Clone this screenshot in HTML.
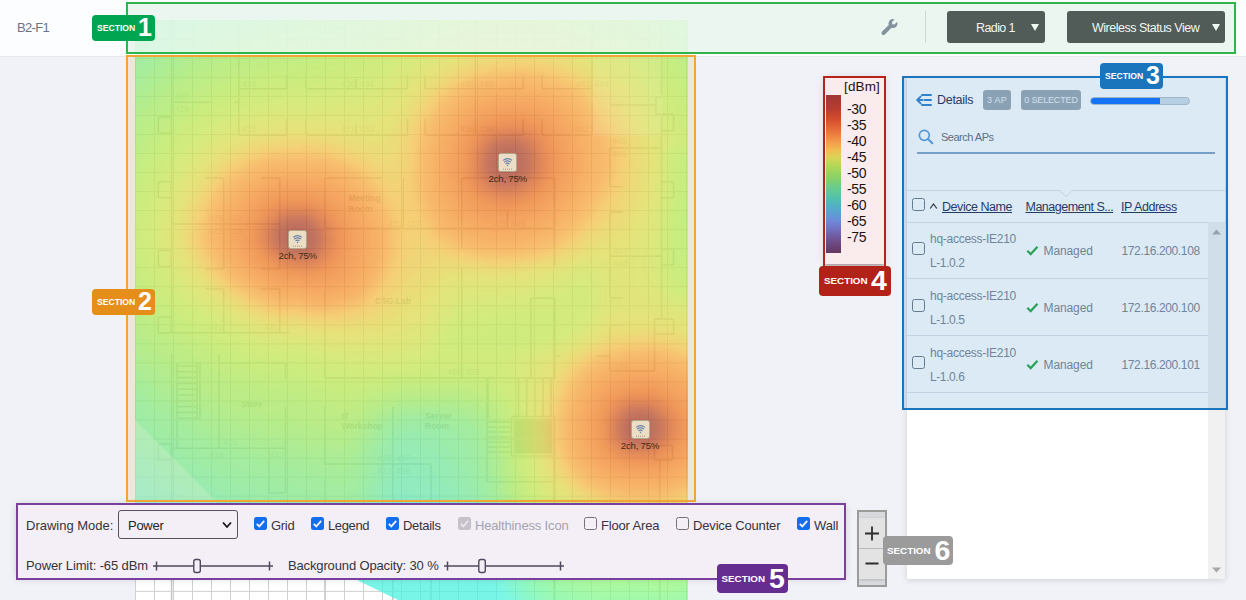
<!DOCTYPE html>
<html lang="en"><head><meta charset="utf-8"><title>Wireless Status View</title>
<style>
*{box-sizing:border-box;margin:0;padding:0}
html,body{width:1246px;height:600px;overflow:hidden}
body{background:#f0f2f7;font-family:"Liberation Sans",sans-serif;position:relative;color:#333}
.abs{position:absolute}
#canvas{position:absolute;left:135px;top:20px;width:553px;height:580px;background:#fff;overflow:hidden}
#hdr{position:absolute;left:0;top:0;width:1246px;height:57px;background:rgba(255,255,255,.80);border-bottom:1px solid #e4e7ed}
.btn{position:absolute;top:11px;height:32px;background:#55575a;border-radius:3px;color:#fff;font-size:12.5px;line-height:34px;white-space:nowrap}
.tri{position:absolute;width:0;height:0;border-left:4.3px solid transparent;border-right:4.3px solid transparent;border-top:7.5px solid #fff;top:13px}
.box{position:absolute;border:2px solid}
.badge{position:absolute;border-radius:4px;color:#fff;font-weight:bold;white-space:nowrap;font-family:"Liberation Sans",sans-serif}
.badge .s{position:absolute;left:5px;font-size:8.6px;letter-spacing:0}
.badge .n{position:absolute;font-size:25px}
.ctl{position:absolute;left:17px;top:505px;width:828px;height:73px;background:#fff;box-shadow:0 0 8px rgba(0,0,0,.18)}
.lbl{position:absolute;font-size:13px;color:#333;white-space:nowrap}
.cb{position:absolute;width:13px;height:13px;border-radius:2.5px}
.cb.on{background:#0b74f5}
.cb.off{background:#fff;border:1px solid #767676}
.cb.dis{background:#c9c9c9}
.ap{position:absolute;width:19px;height:19px}
.ap span{position:absolute;left:-11px;top:19.6px;width:41px;text-align:center;font-size:9.7px;color:#2a1c14;white-space:nowrap;letter-spacing:-.25px}
.row{position:absolute;left:907px;width:301px;height:57px;border-bottom:1px solid #dfe3e8}
.gr{color:#7a8491;font-size:12px;white-space:nowrap;position:absolute}
.hd{color:#1d2b4f;font-size:12.5px;white-space:nowrap;position:absolute;text-decoration:underline}
</style></head><body>

<div id="canvas">
<svg class="abs" style="left:0;top:0" width="553" height="580" viewBox="0 0 553 580"><defs><filter id="bl" x="-5%" y="-5%" width="110%" height="110%"><feGaussianBlur stdDeviation="3"/></filter><clipPath id="cut"><path d="M0 0H553V580H263 L222 560 L0 560Z"/></clipPath></defs><path d="M36.6 82.2H77.0M99.0 82.2H103.8M23.3 97.0H36.3M23.3 113.0H36.3M23.3 161.7H36.3M23.3 177.7H36.3M23.3 230.5H36.3M23.3 246.5H36.3M23.3 297.0H36.3M23.3 313.0H36.3M23.3 424.0H36.3M23.3 440.0H36.3M23.3 520.0H36.3M23.3 536.0H36.3M103.8 68.7H151.7M103.8 115.3H151.7M171.0 68.7H272.5M171.0 115.3H272.5M290.0 68.7H388.0M290.0 115.3H388.0M407.0 68.7H457.0M407.0 115.3H457.0M36.6 204.0H144.7M70.0 158.0H88.7M70.0 249.0H88.7M70.0 269.0H88.7M126.0 158.0H144.7M126.0 249.0H144.7M126.0 269.0H144.7M23.0 312.7H154.0M190.0 158.0H247.0M190.0 208.3H419.7M190.0 358.0H419.7M42.0 346.0H62.0M42.0 351.8H62.0M42.0 357.6H62.0M42.0 363.4H62.0M42.0 369.2H62.0M42.0 375.0H62.0M42.0 380.8H62.0M42.0 386.6H62.0M42.0 392.4H62.0M42.0 398.2H62.0M82.8 342.8H150.5M36.6 428.3H150.5M134.0 473.0H150.5M190.0 444.0H296.0M326.8 158.0H419.7M396.0 278.0H419.7M396.0 358.0H419.7M352.0 461.7H419.7M376.5 396.5H419.7M376.5 436.0H419.7M353.0 402.0H376.0M353.0 407.0H376.0M353.0 412.0H376.0M353.0 417.0H376.0M353.0 422.0H376.0M353.0 427.0H376.0M353.0 432.0H376.0M475.6 85.0H521.0M521.0 77.0H526.5M521.0 94.3H538.6M526.5 110.7H538.6M474.5 128.0H526.5M474.8 166.7H488.0M475.0 192.0H488.0M475.0 278.0H488.0M475.0 236.3H526.5M526.5 161.7H538.6M526.5 177.7H538.6M526.5 229.0H538.6M526.5 245.0H538.6M475.0 305.0H488.0M475.0 351.0H518.8M419.7 336.0H425.5M461.6 336.0H475.0M519.5 299.0H538.7M519.5 314.3H538.7M519.5 425.5H537.5M519.5 440.0H537.5M36.6 0.0V313.0M36.6 334.0V580.0M23.3 97.0V113.0M36.3 97.0V113.0M23.3 161.7V177.7M36.3 161.7V177.7M23.3 230.5V246.5M36.3 230.5V246.5M23.3 297.0V313.0M36.3 297.0V313.0M23.3 424.0V440.0M36.3 424.0V440.0M23.3 520.0V536.0M36.3 520.0V536.0M103.8 0.0V115.3M151.7 54.7V68.7M151.7 99.0V115.3M171.0 54.7V68.7M171.0 99.0V115.3M272.5 54.7V68.7M272.5 99.0V115.3M290.0 54.7V68.7M290.0 99.0V115.3M388.0 54.7V68.7M388.0 99.0V115.3M407.0 54.7V68.7M407.0 99.0V115.3M221.2 59.0V68.7M221.2 105.0V115.3M340.3 0.0V115.3M457.0 0.0V115.3M88.7 158.0V249.0M88.7 269.0V313.0M144.7 158.0V249.0M144.7 269.0V313.0M190.0 158.0V208.3M268.3 158.0V208.3M190.0 270.0V358.0M42.0 342.0V428.0M62.0 342.0V399.5M65.0 342.0V399.5M84.0 334.0V428.3M150.5 342.8V358.7M150.5 387.0V473.0M134.0 428.3V473.0M190.0 387.0V445.0M190.0 461.0V580.0M257.8 387.0V580.0M296.0 445.0V580.0M326.8 158.0V228.0M419.7 158.0V245.7M372.5 191.0V208.3M326.8 248.0V358.0M396.0 278.0V358.0M419.7 278.0V358.0M353.0 358.0V398.0M383.5 358.0V398.0M391.7 358.0V398.0M399.8 358.0V398.0M408.0 358.0V398.0M416.0 358.0V398.0M352.0 358.0V461.7M419.7 396.0V580.0M376.5 396.5V436.0M419.7 396.5V436.0M526.5 0.0V74.5M521.0 77.0V96.5M538.6 94.3V110.7M526.5 96.5V299.0M474.8 128.0V166.7M475.0 192.0V278.0M526.5 161.7V177.7M538.6 161.7V177.7M526.5 229.0V245.0M538.6 229.0V245.0M475.0 305.0V351.0M519.5 299.0V314.3M538.7 299.0V314.3M519.5 314.3V351.0M519.5 425.5V440.0M537.5 425.5V440.0M524.7 440.0V580.0" fill="none" stroke="#c6c6c6" stroke-width="1.6"/><rect x="378.8" y="398.7" width="38.5" height="35.0" fill="#c2c2c2"/><g font-family="Liberation Sans,sans-serif" font-size="8.5" fill="#d8d8d8"><text x="40.0" y="79.0">427</text><text x="40.0" y="92.0">426</text><text x="107.3" y="67.0">429</text><text x="107.3" y="112.0">428</text><text x="206.5" y="67.0">430</text><text x="225.0" y="67.0">434</text><text x="205.6" y="112.0">431</text><text x="225.0" y="112.0">433</text><text x="325.0" y="67.0">435</text><text x="344.0" y="67.0">440</text><text x="325.0" y="112.0">436</text><text x="344.0" y="112.0">439</text><text x="441.0" y="67.0">441</text><text x="459.3" y="67.0">444</text><text x="439.5" y="112.0">442</text><text x="477.0" y="124.0">445</text><text x="477.0" y="137.0">446</text><text x="73.5" y="201.0">425</text><text x="92.5" y="201.0">424</text><text x="73.5" y="214.0">422</text><text x="92.5" y="214.0">423</text><text x="253.0" y="207.0">432</text><text x="271.0" y="207.0">437</text><text x="359.0" y="207.0">438</text><text x="375.8" y="207.0">443</text><text x="478.5" y="234.0">447</text><text x="478.5" y="246.0">448</text><text x="478.5" y="350.0">449</text><text x="73.5" y="310.0">421</text><text x="128.8" y="310.0">420</text><text x="88.0" y="425.0">415</text><text x="74.0" y="438.0">414</text><text x="135.0" y="438.0">413</text><text x="242.6" y="441.0">416</text><text x="261.0" y="441.0">417</text><text x="242.6" y="454.0">412</text><text x="261.0" y="454.0">456</text><text x="312.3" y="355.0">450</text><text x="331.0" y="355.0">455</text><text x="213.5" y="181.0" font-weight="bold" fill="#b8b8b8">Meeting</text><text x="213.5" y="191.5" font-weight="bold" fill="#b8b8b8">Room</text><text x="240.0" y="284.0" font-weight="bold" fill="#b8b8b8">CSG Lab</text><text x="106.0" y="387.0" font-weight="bold" fill="#b8b8b8">Store</text><text x="206.5" y="399.0" font-weight="bold" fill="#b8b8b8">IT</text><text x="206.5" y="408.5" font-weight="bold" fill="#b8b8b8">Workshop</text><text x="290.0" y="399.0" font-weight="bold" fill="#b8b8b8">Server</text><text x="290.0" y="408.5" font-weight="bold" fill="#b8b8b8">Room</text></g><path d="M0.50 0V580M19.50 0V580M38.50 0V580M57.50 0V580M76.50 0V580M95.50 0V580M114.50 0V580M133.50 0V580M152.50 0V580M171.50 0V580M190.50 0V580M209.50 0V580M228.50 0V580M247.50 0V580M266.50 0V580M285.50 0V580M304.50 0V580M323.50 0V580M342.50 0V580M361.50 0V580M380.50 0V580M399.50 0V580M418.50 0V580M437.50 0V580M456.50 0V580M475.50 0V580M494.50 0V580M513.50 0V580M532.50 0V580M551.50 0V580M0 0.20H553M0 19.24H553M0 38.28H553M0 57.32H553M0 76.36H553M0 95.40H553M0 114.44H553M0 133.48H553M0 152.52H553M0 171.56H553M0 190.60H553M0 209.64H553M0 228.68H553M0 247.72H553M0 266.76H553M0 285.80H553M0 304.84H553M0 323.88H553M0 342.92H553M0 361.96H553M0 381.00H553M0 400.04H553M0 419.08H553M0 438.12H553M0 457.16H553M0 476.20H553M0 495.24H553M0 514.28H553M0 533.32H553M0 552.36H553M0 571.40H553" fill="none" stroke="#d0d0d0" stroke-width="1"/><g clip-path="url(#cut)" opacity="0.75"><g filter="url(#bl)" shape-rendering="crispEdges"><path fill="#4ef2e1" d="M-16 496h4v4h-4zM-16 500h12v4h-12zM264 500h12v4h-12zM-16 504h20v4h-20zM260 504h24v4h-24zM-16 508h28v4h-28zM256 508h36v4h-36zM-16 512h40v4h-40zM252 512h48v4h-48zM-16 516h48v4h-48zM248 516h56v4h-56zM-16 520h60v4h-60zM248 520h64v4h-64zM-16 524h72v4h-72zM244 524h76v4h-76zM-16 528h84v4h-84zM244 528h84v4h-84zM-16 532h96v4h-96zM240 532h96v4h-96zM-16 536h112v4h-112zM236 536h104v4h-104zM-16 540h124v4h-124zM236 540h108v4h-108zM-16 544h140v4h-140zM232 544h116v4h-116zM-16 548h156v4h-156zM228 548h124v4h-124zM-16 552h172v4h-172zM228 552h128v4h-128zM-16 556h188v4h-188zM224 556h132v4h-132zM-16 560h200v4h-200zM220 560h140v4h-140zM-16 564h212v4h-212zM216 564h144v4h-144zM-16 568h380v4h-380zM-16 572h380v4h-380zM-16 576h384v4h-384zM-16 580h384v4h-384zM-16 584h388v4h-388zM-16 588h388v4h-388zM-16 592h392v4h-392z"/>
<path fill="#52f3da" d="M-16 484h8v4h-8zM-16 488h12v4h-12zM264 488h16v4h-16zM-16 492h20v4h-20zM260 492h24v4h-24zM-12 496h24v4h-24zM256 496h36v4h-36zM-4 500h24v4h-24zM252 500h12v4h-12zM276 500h24v4h-24zM4 504h24v4h-24zM252 504h8v4h-8zM284 504h20v4h-20zM12 508h28v4h-28zM248 508h8v4h-8zM292 508h20v4h-20zM24 512h24v4h-24zM244 512h8v4h-8zM300 512h16v4h-16zM32 516h28v4h-28zM244 516h4v4h-4zM304 516h20v4h-20zM44 520h28v4h-28zM240 520h8v4h-8zM312 520h20v4h-20zM56 524h28v4h-28zM240 524h4v4h-4zM320 524h16v4h-16zM68 528h32v4h-32zM236 528h8v4h-8zM328 528h12v4h-12zM80 532h32v4h-32zM232 532h8v4h-8zM336 532h8v4h-8zM96 536h32v4h-32zM232 536h4v4h-4zM340 536h8v4h-8zM108 540h36v4h-36zM228 540h8v4h-8zM344 540h8v4h-8zM124 544h40v4h-40zM224 544h8v4h-8zM348 544h8v4h-8zM140 548h36v4h-36zM220 548h8v4h-8zM352 548h4v4h-4zM156 552h36v4h-36zM216 552h12v4h-12zM356 552h4v4h-4zM172 556h52v4h-52zM356 556h8v4h-8zM184 560h36v4h-36zM360 560h4v4h-4zM196 564h20v4h-20zM360 564h8v4h-8zM364 568h4v4h-4zM364 572h8v4h-8zM368 576h4v4h-4zM368 580h8v4h-8zM372 584h4v4h-4zM372 588h8v4h-8zM376 592h4v4h-4z"/>
<path fill="#56f4d3" d="M-16 464h4v4h-4zM-16 468h8v4h-8zM-16 472h12v4h-12zM264 472h16v4h-16zM-16 476h20v4h-20zM260 476h24v4h-24zM-16 480h24v4h-24zM260 480h32v4h-32zM-8 484h20v4h-20zM256 484h40v4h-40zM-4 488h24v4h-24zM252 488h12v4h-12zM280 488h20v4h-20zM4 492h24v4h-24zM252 492h8v4h-8zM284 492h24v4h-24zM12 496h24v4h-24zM248 496h8v4h-8zM292 496h20v4h-20zM20 500h24v4h-24zM244 500h8v4h-8zM300 500h16v4h-16zM28 504h28v4h-28zM244 504h8v4h-8zM304 504h16v4h-16zM40 508h24v4h-24zM240 508h8v4h-8zM312 508h16v4h-16zM48 512h28v4h-28zM240 512h4v4h-4zM316 512h16v4h-16zM60 516h28v4h-28zM236 516h8v4h-8zM324 516h12v4h-12zM72 520h32v4h-32zM236 520h4v4h-4zM332 520h8v4h-8zM84 524h36v4h-36zM232 524h8v4h-8zM336 524h8v4h-8zM100 528h36v4h-36zM228 528h8v4h-8zM340 528h8v4h-8zM112 532h40v4h-40zM224 532h8v4h-8zM344 532h8v4h-8zM128 536h40v4h-40zM224 536h8v4h-8zM348 536h8v4h-8zM144 540h40v4h-40zM220 540h8v4h-8zM352 540h4v4h-4zM164 544h36v4h-36zM212 544h12v4h-12zM356 544h4v4h-4zM176 548h44v4h-44zM356 548h8v4h-8zM192 552h24v4h-24zM360 552h4v4h-4zM364 556h4v4h-4zM364 560h8v4h-8zM368 564h4v4h-4zM368 568h8v4h-8zM372 572h4v4h-4zM372 576h8v4h-8zM376 580h4v4h-4zM376 584h4v4h-4zM380 588h4v4h-4zM380 592h4v4h-4z"/>
<path fill="#5bf5cb" d="M-16 448h4v4h-4zM-16 452h8v4h-8zM268 452h8v4h-8zM-16 456h12v4h-12zM264 456h20v4h-20zM-16 460h20v4h-20zM260 460h28v4h-28zM-12 464h20v4h-20zM256 464h40v4h-40zM-8 468h20v4h-20zM256 468h44v4h-44zM-4 472h24v4h-24zM252 472h12v4h-12zM280 472h24v4h-24zM4 476h20v4h-20zM252 476h8v4h-8zM284 476h24v4h-24zM8 480h24v4h-24zM248 480h12v4h-12zM292 480h20v4h-20zM12 484h24v4h-24zM248 484h8v4h-8zM296 484h16v4h-16zM20 488h24v4h-24zM244 488h8v4h-8zM300 488h16v4h-16zM28 492h24v4h-24zM244 492h8v4h-8zM308 492h12v4h-12zM36 496h28v4h-28zM240 496h8v4h-8zM312 496h12v4h-12zM44 500h28v4h-28zM240 500h4v4h-4zM316 500h12v4h-12zM56 504h28v4h-28zM236 504h8v4h-8zM320 504h16v4h-16zM64 508h32v4h-32zM236 508h4v4h-4zM328 508h12v4h-12zM76 512h36v4h-36zM232 512h8v4h-8zM332 512h12v4h-12zM88 516h40v4h-40zM228 516h8v4h-8zM336 516h12v4h-12zM104 520h40v4h-40zM228 520h8v4h-8zM340 520h8v4h-8zM120 524h44v4h-44zM224 524h8v4h-8zM344 524h8v4h-8zM136 528h40v4h-40zM220 528h8v4h-8zM348 528h8v4h-8zM152 532h40v4h-40zM216 532h8v4h-8zM352 532h4v4h-4zM168 536h56v4h-56zM356 536h4v4h-4zM184 540h36v4h-36zM356 540h8v4h-8zM200 544h12v4h-12zM360 544h4v4h-4zM364 548h4v4h-4zM364 552h8v4h-8zM368 556h4v4h-4zM372 560h4v4h-4zM372 564h4v4h-4zM376 568h4v4h-4zM376 572h4v4h-4zM380 576h4v4h-4zM380 580h4v4h-4zM380 584h8v4h-8zM384 588h4v4h-4zM384 592h8v4h-8z"/>
<path fill="#60f5c3" d="M-16 436h4v4h-4zM268 436h8v4h-8zM-16 440h12v4h-12zM264 440h20v4h-20zM-16 444h16v4h-16zM260 444h32v4h-32zM-12 448h16v4h-16zM256 448h40v4h-40zM-8 452h16v4h-16zM256 452h12v4h-12zM276 452h24v4h-24zM-4 456h20v4h-20zM252 456h12v4h-12zM284 456h20v4h-20zM4 460h16v4h-16zM252 460h8v4h-8zM288 460h20v4h-20zM8 464h20v4h-20zM248 464h8v4h-8zM296 464h16v4h-16zM12 468h20v4h-20zM248 468h8v4h-8zM300 468h16v4h-16zM20 472h20v4h-20zM248 472h4v4h-4zM304 472h16v4h-16zM24 476h20v4h-20zM244 476h8v4h-8zM308 476h12v4h-12zM32 480h20v4h-20zM244 480h4v4h-4zM312 480h12v4h-12zM36 484h24v4h-24zM240 484h8v4h-8zM312 484h16v4h-16zM44 488h28v4h-28zM240 488h4v4h-4zM316 488h16v4h-16zM52 492h28v4h-28zM236 492h8v4h-8zM320 492h16v4h-16zM64 496h28v4h-28zM236 496h4v4h-4zM324 496h12v4h-12zM72 500h32v4h-32zM232 500h8v4h-8zM328 500h12v4h-12zM84 504h36v4h-36zM232 504h4v4h-4zM336 504h8v4h-8zM96 508h44v4h-44zM228 508h8v4h-8zM340 508h8v4h-8zM112 512h44v4h-44zM224 512h8v4h-8zM344 512h8v4h-8zM128 516h44v4h-44zM220 516h8v4h-8zM348 516h4v4h-4zM144 520h44v4h-44zM216 520h12v4h-12zM348 520h8v4h-8zM164 524h40v4h-40zM212 524h12v4h-12zM352 524h8v4h-8zM176 528h44v4h-44zM356 528h4v4h-4zM192 532h24v4h-24zM356 532h8v4h-8zM360 536h4v4h-4zM364 540h4v4h-4zM364 544h8v4h-8zM368 548h4v4h-4zM372 552h4v4h-4zM372 556h4v4h-4zM376 560h4v4h-4zM376 564h4v4h-4zM380 568h4v4h-4zM380 572h8v4h-8zM384 576h4v4h-4zM384 580h8v4h-8zM388 584h4v4h-4zM388 588h8v4h-8zM392 592h4v4h-4z"/>
<path fill="#65f6bb" d="M-16 -16h8v4h-8zM-16 -12h4v4h-4zM-16 420h4v4h-4zM272 420h4v4h-4zM-16 424h8v4h-8zM264 424h24v4h-24zM-16 428h12v4h-12zM260 428h36v4h-36zM-16 432h20v4h-20zM256 432h44v4h-44zM-12 436h20v4h-20zM256 436h12v4h-12zM276 436h28v4h-28zM-4 440h16v4h-16zM252 440h12v4h-12zM284 440h24v4h-24zM0 444h20v4h-20zM252 444h8v4h-8zM292 444h20v4h-20zM4 448h20v4h-20zM248 448h8v4h-8zM296 448h20v4h-20zM8 452h20v4h-20zM248 452h8v4h-8zM300 452h16v4h-16zM16 456h20v4h-20zM248 456h4v4h-4zM304 456h16v4h-16zM20 460h20v4h-20zM244 460h8v4h-8zM308 460h16v4h-16zM28 464h20v4h-20zM244 464h4v4h-4zM312 464h12v4h-12zM32 468h24v4h-24zM240 468h8v4h-8zM316 468h12v4h-12zM40 472h24v4h-24zM240 472h8v4h-8zM320 472h12v4h-12zM44 476h28v4h-28zM240 476h4v4h-4zM320 476h12v4h-12zM52 480h28v4h-28zM236 480h8v4h-8zM324 480h12v4h-12zM60 484h28v4h-28zM236 484h4v4h-4zM328 484h12v4h-12zM72 488h28v4h-28zM232 488h8v4h-8zM332 488h8v4h-8zM80 492h32v4h-32zM232 492h4v4h-4zM336 492h8v4h-8zM92 496h36v4h-36zM228 496h8v4h-8zM336 496h8v4h-8zM104 500h44v4h-44zM224 500h8v4h-8zM340 500h8v4h-8zM120 504h48v4h-48zM224 504h8v4h-8zM344 504h8v4h-8zM140 508h44v4h-44zM220 508h8v4h-8zM348 508h4v4h-4zM156 512h40v4h-40zM216 512h8v4h-8zM352 512h4v4h-4zM172 516h48v4h-48zM352 516h8v4h-8zM188 520h28v4h-28zM356 520h4v4h-4zM204 524h8v4h-8zM360 524h4v4h-4zM360 528h4v4h-4zM364 532h4v4h-4zM364 536h8v4h-8zM368 540h4v4h-4zM372 544h4v4h-4zM372 548h4v4h-4zM376 552h4v4h-4zM376 556h8v4h-8zM380 560h4v4h-4zM380 564h8v4h-8zM384 568h4v4h-4zM388 572h4v4h-4zM388 576h4v4h-4zM392 580h4v4h-4zM392 584h4v4h-4zM396 588h4v4h-4zM396 592h8v4h-8z"/>
<path fill="#69f6b3" d="M-8 -16h20v4h-20zM-12 -12h20v4h-20zM-16 -8h20v4h-20zM-16 -4h12v4h-12zM-16 0h8v4h-8zM-16 4h4v4h-4zM-16 404h4v4h-4zM-16 408h8v4h-8zM-16 412h12v4h-12zM268 412h20v4h-20zM-16 416h16v4h-16zM260 416h40v4h-40zM-12 420h20v4h-20zM256 420h16v4h-16zM276 420h28v4h-28zM-8 424h20v4h-20zM256 424h8v4h-8zM288 424h20v4h-20zM-4 428h20v4h-20zM252 428h8v4h-8zM296 428h16v4h-16zM4 432h16v4h-16zM252 432h4v4h-4zM300 432h16v4h-16zM8 436h20v4h-20zM248 436h8v4h-8zM304 436h16v4h-16zM12 440h20v4h-20zM248 440h4v4h-4zM308 440h16v4h-16zM20 444h20v4h-20zM244 444h8v4h-8zM312 444h12v4h-12zM24 448h20v4h-20zM244 448h4v4h-4zM316 448h12v4h-12zM28 452h24v4h-24zM240 452h8v4h-8zM316 452h16v4h-16zM36 456h24v4h-24zM240 456h8v4h-8zM320 456h12v4h-12zM40 460h28v4h-28zM240 460h4v4h-4zM324 460h12v4h-12zM48 464h28v4h-28zM236 464h8v4h-8zM324 464h12v4h-12zM56 468h28v4h-28zM236 468h4v4h-4zM328 468h12v4h-12zM64 472h28v4h-28zM232 472h8v4h-8zM332 472h8v4h-8zM72 476h32v4h-32zM232 476h8v4h-8zM332 476h12v4h-12zM80 480h36v4h-36zM228 480h8v4h-8zM336 480h8v4h-8zM88 484h40v4h-40zM228 484h8v4h-8zM340 484h8v4h-8zM100 488h44v4h-44zM224 488h8v4h-8zM340 488h8v4h-8zM112 492h48v4h-48zM224 492h8v4h-8zM344 492h8v4h-8zM128 496h48v4h-48zM220 496h8v4h-8zM344 496h8v4h-8zM148 500h44v4h-44zM216 500h8v4h-8zM348 500h8v4h-8zM168 504h56v4h-56zM352 504h4v4h-4zM184 508h36v4h-36zM352 508h8v4h-8zM196 512h20v4h-20zM356 512h4v4h-4zM360 516h4v4h-4zM360 520h4v4h-4zM364 524h4v4h-4zM364 528h8v4h-8zM368 532h4v4h-4zM372 536h4v4h-4zM372 540h4v4h-4zM376 544h4v4h-4zM376 548h8v4h-8zM380 552h4v4h-4zM384 556h4v4h-4zM384 560h4v4h-4zM388 564h4v4h-4zM388 568h4v4h-4zM392 572h4v4h-4zM392 576h8v4h-8zM396 580h4v4h-4zM396 584h8v4h-8zM400 588h8v4h-8zM404 592h4v4h-4z"/>
<path fill="#6ef7ac" d="M12 -16h24v4h-24zM8 -12h24v4h-24zM4 -8h20v4h-20zM-4 -4h24v4h-24zM-8 0h24v4h-24zM-12 4h20v4h-20zM-16 8h20v4h-20zM-16 12h16v4h-16zM-16 16h12v4h-12zM-16 20h8v4h-8zM-16 24h4v4h-4zM-16 388h4v4h-4zM-16 392h8v4h-8zM-16 396h12v4h-12zM-16 400h16v4h-16zM-12 404h16v4h-16zM-8 408h20v4h-20zM260 408h44v4h-44zM-4 412h20v4h-20zM256 412h12v4h-12zM288 412h24v4h-24zM0 416h20v4h-20zM252 416h8v4h-8zM300 416h20v4h-20zM8 420h16v4h-16zM252 420h4v4h-4zM304 420h20v4h-20zM12 424h20v4h-20zM248 424h8v4h-8zM308 424h16v4h-16zM16 428h20v4h-20zM244 428h8v4h-8zM312 428h16v4h-16zM20 432h24v4h-24zM244 432h8v4h-8zM316 432h16v4h-16zM28 436h20v4h-20zM240 436h8v4h-8zM320 436h12v4h-12zM32 440h24v4h-24zM240 440h8v4h-8zM324 440h12v4h-12zM40 444h24v4h-24zM240 444h4v4h-4zM324 444h12v4h-12zM44 448h28v4h-28zM236 448h8v4h-8zM328 448h12v4h-12zM52 452h28v4h-28zM236 452h4v4h-4zM332 452h8v4h-8zM60 456h28v4h-28zM232 456h8v4h-8zM332 456h12v4h-12zM68 460h32v4h-32zM232 460h8v4h-8zM336 460h8v4h-8zM76 464h32v4h-32zM228 464h8v4h-8zM336 464h8v4h-8zM84 468h36v4h-36zM228 468h8v4h-8zM340 468h8v4h-8zM92 472h44v4h-44zM228 472h4v4h-4zM340 472h8v4h-8zM104 476h44v4h-44zM224 476h8v4h-8zM344 476h4v4h-4zM116 480h48v4h-48zM224 480h4v4h-4zM344 480h8v4h-8zM128 484h48v4h-48zM220 484h8v4h-8zM348 484h4v4h-4zM144 488h44v4h-44zM216 488h8v4h-8zM348 488h4v4h-4zM160 492h44v4h-44zM208 492h16v4h-16zM352 492h4v4h-4zM176 496h44v4h-44zM352 496h4v4h-4zM192 500h24v4h-24zM356 500h4v4h-4zM356 504h4v4h-4zM360 508h4v4h-4zM360 512h8v4h-8zM364 516h4v4h-4zM364 520h8v4h-8zM368 524h4v4h-4zM372 528h4v4h-4zM372 532h4v4h-4zM376 536h4v4h-4zM376 540h8v4h-8zM380 544h4v4h-4zM384 548h4v4h-4zM384 552h4v4h-4zM388 556h4v4h-4zM388 560h8v4h-8zM392 564h4v4h-4zM392 568h8v4h-8zM396 572h8v4h-8zM400 576h4v4h-4zM400 580h8v4h-8zM404 584h8v4h-8zM408 588h8v4h-8zM408 592h12v4h-12z"/>
<path fill="#73f7a4" d="M36 -16h24v4h-24zM32 -12h24v4h-24zM24 -8h24v4h-24zM20 -4h20v4h-20zM16 0h20v4h-20zM8 4h24v4h-24zM4 8h20v4h-20zM0 12h20v4h-20zM-4 16h20v4h-20zM-8 20h20v4h-20zM-12 24h16v4h-16zM-16 28h16v4h-16zM-16 32h12v4h-12zM-16 36h8v4h-8zM-16 40h4v4h-4zM-16 368h4v4h-4zM-16 372h8v4h-8zM-16 376h12v4h-12zM-16 380h16v4h-16zM-16 384h20v4h-20zM-12 388h20v4h-20zM-8 392h20v4h-20zM-4 396h20v4h-20zM0 400h20v4h-20zM268 400h28v4h-28zM4 404h20v4h-20zM260 404h52v4h-52zM12 408h16v4h-16zM252 408h8v4h-8zM304 408h20v4h-20zM16 412h20v4h-20zM248 412h8v4h-8zM312 412h16v4h-16zM20 416h20v4h-20zM248 416h4v4h-4zM320 416h12v4h-12zM24 420h24v4h-24zM244 420h8v4h-8zM324 420h12v4h-12zM32 424h20v4h-20zM240 424h8v4h-8zM324 424h16v4h-16zM36 428h24v4h-24zM240 428h4v4h-4zM328 428h12v4h-12zM44 432h24v4h-24zM236 432h8v4h-8zM332 432h8v4h-8zM48 436h28v4h-28zM236 436h4v4h-4zM332 436h12v4h-12zM56 440h28v4h-28zM232 440h8v4h-8zM336 440h8v4h-8zM64 444h28v4h-28zM232 444h8v4h-8zM336 444h8v4h-8zM72 448h32v4h-32zM232 448h4v4h-4zM340 448h8v4h-8zM80 452h36v4h-36zM228 452h8v4h-8zM340 452h8v4h-8zM88 456h40v4h-40zM228 456h4v4h-4zM344 456h4v4h-4zM100 460h40v4h-40zM224 460h8v4h-8zM344 460h8v4h-8zM108 464h48v4h-48zM224 464h4v4h-4zM344 464h8v4h-8zM120 468h48v4h-48zM220 468h8v4h-8zM348 468h4v4h-4zM136 472h48v4h-48zM216 472h12v4h-12zM348 472h4v4h-4zM148 476h48v4h-48zM212 476h12v4h-12zM348 476h8v4h-8zM164 480h60v4h-60zM352 480h4v4h-4zM176 484h44v4h-44zM352 484h4v4h-4zM188 488h28v4h-28zM352 488h8v4h-8zM204 492h4v4h-4zM356 492h4v4h-4zM356 496h8v4h-8zM360 500h4v4h-4zM360 504h8v4h-8zM364 508h4v4h-4zM368 512h4v4h-4zM368 516h4v4h-4zM372 520h4v4h-4zM372 524h4v4h-4zM376 528h4v4h-4zM376 532h8v4h-8zM380 536h4v4h-4zM384 540h4v4h-4zM384 544h4v4h-4zM388 548h4v4h-4zM388 552h8v4h-8zM392 556h4v4h-4zM396 560h4v4h-4zM396 564h8v4h-8zM400 568h4v4h-4zM404 572h4v4h-4zM404 576h8v4h-8zM408 580h8v4h-8zM412 584h8v4h-8zM416 588h12v4h-12zM420 592h20v4h-20z"/>
<path fill="#77f89d" d="M60 -16h32v4h-32zM56 -12h28v4h-28zM48 -8h28v4h-28zM40 -4h28v4h-28zM36 0h24v4h-24zM32 4h20v4h-20zM24 8h24v4h-24zM20 12h20v4h-20zM16 16h20v4h-20zM12 20h16v4h-16zM4 24h20v4h-20zM0 28h20v4h-20zM-4 32h20v4h-20zM-8 36h16v4h-16zM-12 40h16v4h-16zM-16 44h16v4h-16zM-16 48h12v4h-12zM-16 52h8v4h-8zM-16 56h4v4h-4zM-16 60h4v4h-4zM-16 356h4v4h-4zM-16 360h8v4h-8zM-16 364h12v4h-12zM-12 368h12v4h-12zM-8 372h12v4h-12zM-4 376h12v4h-12zM0 380h12v4h-12zM4 384h12v4h-12zM8 388h12v4h-12zM12 392h12v4h-12zM16 396h16v4h-16zM264 396h40v4h-40zM20 400h16v4h-16zM256 400h12v4h-12zM296 400h24v4h-24zM24 404h20v4h-20zM252 404h8v4h-8zM312 404h20v4h-20zM28 408h20v4h-20zM248 408h4v4h-4zM324 408h16v4h-16zM36 412h20v4h-20zM244 412h4v4h-4zM328 412h12v4h-12zM40 416h20v4h-20zM240 416h8v4h-8zM332 416h12v4h-12zM48 420h20v4h-20zM240 420h4v4h-4zM336 420h8v4h-8zM52 424h24v4h-24zM236 424h4v4h-4zM340 424h4v4h-4zM60 428h28v4h-28zM232 428h8v4h-8zM340 428h8v4h-8zM68 432h28v4h-28zM232 432h4v4h-4zM340 432h8v4h-8zM76 436h32v4h-32zM228 436h8v4h-8zM344 436h4v4h-4zM84 440h36v4h-36zM228 440h4v4h-4zM344 440h4v4h-4zM92 444h40v4h-40zM224 444h8v4h-8zM344 444h8v4h-8zM104 448h44v4h-44zM224 448h8v4h-8zM348 448h4v4h-4zM116 452h48v4h-48zM220 452h8v4h-8zM348 452h4v4h-4zM128 456h48v4h-48zM216 456h12v4h-12zM348 456h8v4h-8zM140 460h52v4h-52zM216 460h8v4h-8zM352 460h4v4h-4zM156 464h48v4h-48zM208 464h16v4h-16zM352 464h4v4h-4zM168 468h52v4h-52zM352 468h4v4h-4zM184 472h32v4h-32zM352 472h8v4h-8zM196 476h16v4h-16zM356 476h4v4h-4zM356 480h4v4h-4zM356 484h8v4h-8zM360 488h4v4h-4zM360 492h4v4h-4zM364 496h4v4h-4zM364 500h4v4h-4zM368 504h4v4h-4zM368 508h4v4h-4zM372 512h4v4h-4zM372 516h4v4h-4zM376 520h4v4h-4zM376 524h8v4h-8zM380 528h4v4h-4zM384 532h4v4h-4zM384 536h4v4h-4zM388 540h4v4h-4zM388 544h8v4h-8zM392 548h4v4h-4zM396 552h4v4h-4zM396 556h8v4h-8zM400 560h4v4h-4zM404 564h4v4h-4zM404 568h8v4h-8zM408 572h8v4h-8zM412 576h8v4h-8zM416 580h16v4h-16zM420 584h20v4h-20zM428 588h28v4h-28zM440 592h76v4h-76zM544 592h28v4h-28z"/>
<path fill="#7cf896" d="M92 -16h32v4h-32zM84 -12h28v4h-28zM76 -8h24v4h-24zM68 -4h24v4h-24zM60 0h24v4h-24zM52 4h20v4h-20zM48 8h20v4h-20zM40 12h20v4h-20zM36 16h16v4h-16zM28 20h16v4h-16zM24 24h16v4h-16zM20 28h16v4h-16zM16 32h12v4h-12zM8 36h16v4h-16zM4 40h16v4h-16zM0 44h16v4h-16zM-4 48h16v4h-16zM-8 52h16v4h-16zM-12 56h16v4h-16zM-12 60h12v4h-12zM-16 64h12v4h-12zM-16 68h8v4h-8zM-16 72h4v4h-4zM-16 344h4v4h-4zM-16 348h8v4h-8zM-16 352h12v4h-12zM-12 356h12v4h-12zM-8 360h12v4h-12zM-4 364h12v4h-12zM0 368h12v4h-12zM4 372h12v4h-12zM8 376h12v4h-12zM12 380h12v4h-12zM16 384h12v4h-12zM20 388h16v4h-16zM24 392h16v4h-16zM264 392h44v4h-44zM32 396h16v4h-16zM256 396h8v4h-8zM304 396h24v4h-24zM36 400h16v4h-16zM248 400h8v4h-8zM320 400h16v4h-16zM44 404h16v4h-16zM244 404h8v4h-8zM332 404h12v4h-12zM48 408h16v4h-16zM240 408h8v4h-8zM340 408h8v4h-8zM56 412h16v4h-16zM236 412h8v4h-8zM340 412h8v4h-8zM60 416h20v4h-20zM236 416h4v4h-4zM344 416h4v4h-4zM68 420h24v4h-24zM232 420h8v4h-8zM344 420h8v4h-8zM76 424h24v4h-24zM228 424h8v4h-8zM344 424h8v4h-8zM88 428h24v4h-24zM228 428h4v4h-4zM348 428h4v4h-4zM96 432h32v4h-32zM224 432h8v4h-8zM348 432h4v4h-4zM108 436h40v4h-40zM220 436h8v4h-8zM348 436h4v4h-4zM120 440h48v4h-48zM220 440h8v4h-8zM348 440h8v4h-8zM132 444h52v4h-52zM216 444h8v4h-8zM352 444h4v4h-4zM148 448h52v4h-52zM212 448h12v4h-12zM352 448h4v4h-4zM164 452h56v4h-56zM352 452h4v4h-4zM176 456h40v4h-40zM356 456h4v4h-4zM192 460h24v4h-24zM356 460h4v4h-4zM204 464h4v4h-4zM356 464h4v4h-4zM356 468h4v4h-4zM360 472h4v4h-4zM360 476h4v4h-4zM360 480h4v4h-4zM364 484h4v4h-4zM364 488h4v4h-4zM364 492h8v4h-8zM368 496h4v4h-4zM368 500h4v4h-4zM372 504h4v4h-4zM372 508h4v4h-4zM376 512h4v4h-4zM376 516h8v4h-8zM380 520h4v4h-4zM384 524h4v4h-4zM384 528h4v4h-4zM388 532h4v4h-4zM388 536h8v4h-8zM392 540h4v4h-4zM396 544h4v4h-4zM396 548h8v4h-8zM400 552h4v4h-4zM404 556h4v4h-4zM404 560h8v4h-8zM408 564h8v4h-8zM412 568h12v4h-12zM416 572h16v4h-16zM420 576h24v4h-24zM432 580h24v4h-24zM568 580h4v4h-4zM440 584h80v4h-80zM540 584h32v4h-32zM456 588h116v4h-116zM516 592h28v4h-28z"/>
<path fill="#83f88f" d="M124 -16h32v4h-32zM560 -16h12v4h-12zM112 -12h32v4h-32zM564 -12h8v4h-8zM100 -8h28v4h-28zM568 -8h4v4h-4zM92 -4h28v4h-28zM568 -4h4v4h-4zM84 0h24v4h-24zM72 4h24v4h-24zM68 8h20v4h-20zM60 12h20v4h-20zM52 16h20v4h-20zM44 20h20v4h-20zM40 24h16v4h-16zM36 28h16v4h-16zM28 32h16v4h-16zM24 36h16v4h-16zM20 40h12v4h-12zM16 44h12v4h-12zM12 48h12v4h-12zM8 52h12v4h-12zM4 56h12v4h-12zM0 60h12v4h-12zM-4 64h12v4h-12zM-8 68h12v4h-12zM-12 72h12v4h-12zM-16 76h12v4h-12zM-16 80h8v4h-8zM-16 84h8v4h-8zM-16 88h4v4h-4zM-16 328h4v4h-4zM-16 332h8v4h-8zM-16 336h8v4h-8zM-16 340h12v4h-12zM-12 344h12v4h-12zM-8 348h12v4h-12zM-4 352h12v4h-12zM0 356h12v4h-12zM4 360h12v4h-12zM8 364h12v4h-12zM12 368h12v4h-12zM16 372h12v4h-12zM20 376h16v4h-16zM24 380h16v4h-16zM28 384h16v4h-16zM36 388h16v4h-16zM264 388h52v4h-52zM40 392h16v4h-16zM252 392h12v4h-12zM308 392h24v4h-24zM48 396h16v4h-16zM248 396h8v4h-8zM328 396h12v4h-12zM52 400h16v4h-16zM240 400h8v4h-8zM336 400h12v4h-12zM60 404h16v4h-16zM236 404h8v4h-8zM344 404h4v4h-4zM64 408h20v4h-20zM236 408h4v4h-4zM348 408h4v4h-4zM72 412h24v4h-24zM232 412h4v4h-4zM348 412h4v4h-4zM80 416h28v4h-28zM228 416h8v4h-8zM348 416h8v4h-8zM92 420h28v4h-28zM224 420h8v4h-8zM352 420h4v4h-4zM100 424h36v4h-36zM224 424h4v4h-4zM352 424h4v4h-4zM112 428h44v4h-44zM220 428h8v4h-8zM352 428h4v4h-4zM128 432h52v4h-52zM216 432h8v4h-8zM352 432h4v4h-4zM148 436h56v4h-56zM208 436h12v4h-12zM352 436h8v4h-8zM168 440h52v4h-52zM356 440h4v4h-4zM184 444h32v4h-32zM356 444h4v4h-4zM200 448h12v4h-12zM356 448h4v4h-4zM356 452h4v4h-4zM360 456h4v4h-4zM360 460h4v4h-4zM360 464h4v4h-4zM360 468h4v4h-4zM364 472h4v4h-4zM364 476h4v4h-4zM364 480h4v4h-4zM368 484h4v4h-4zM368 488h4v4h-4zM372 492h4v4h-4zM372 496h4v4h-4zM372 500h8v4h-8zM376 504h4v4h-4zM376 508h8v4h-8zM380 512h4v4h-4zM384 516h4v4h-4zM384 520h4v4h-4zM388 524h4v4h-4zM388 528h4v4h-4zM392 532h4v4h-4zM396 536h4v4h-4zM396 540h8v4h-8zM400 544h4v4h-4zM404 548h4v4h-4zM404 552h8v4h-8zM408 556h8v4h-8zM412 560h12v4h-12zM416 564h16v4h-16zM424 568h20v4h-20zM432 572h28v4h-28zM568 572h4v4h-4zM444 576h128v4h-128zM456 580h112v4h-112zM520 584h20v4h-20z"/>
<path fill="#8af888" d="M156 -16h36v4h-36zM548 -16h12v4h-12zM144 -12h36v4h-36zM552 -12h12v4h-12zM128 -8h36v4h-36zM556 -8h12v4h-12zM120 -4h32v4h-32zM556 -4h12v4h-12zM108 0h28v4h-28zM560 0h12v4h-12zM96 4h28v4h-28zM564 4h8v4h-8zM88 8h24v4h-24zM568 8h4v4h-4zM80 12h24v4h-24zM568 12h4v4h-4zM72 16h20v4h-20zM64 20h20v4h-20zM56 24h20v4h-20zM52 28h16v4h-16zM44 32h16v4h-16zM40 36h16v4h-16zM32 40h16v4h-16zM28 44h16v4h-16zM24 48h12v4h-12zM20 52h12v4h-12zM16 56h12v4h-12zM12 60h12v4h-12zM8 64h12v4h-12zM4 68h12v4h-12zM0 72h12v4h-12zM-4 76h12v4h-12zM-8 80h12v4h-12zM-8 84h8v4h-8zM-12 88h8v4h-8zM-16 92h12v4h-12zM-16 96h8v4h-8zM-16 100h4v4h-4zM-16 104h4v4h-4zM-16 312h4v4h-4zM-16 316h4v4h-4zM-16 320h8v4h-8zM-16 324h12v4h-12zM-12 328h8v4h-8zM-8 332h8v4h-8zM-8 336h12v4h-12zM-4 340h12v4h-12zM0 344h12v4h-12zM4 348h12v4h-12zM8 352h12v4h-12zM12 356h12v4h-12zM16 360h12v4h-12zM20 364h12v4h-12zM24 368h16v4h-16zM28 372h16v4h-16zM36 376h12v4h-12zM40 380h16v4h-16zM44 384h16v4h-16zM264 384h56v4h-56zM52 388h16v4h-16zM252 388h12v4h-12zM316 388h20v4h-20zM56 392h20v4h-20zM244 392h8v4h-8zM332 392h12v4h-12zM64 396h20v4h-20zM240 396h8v4h-8zM340 396h8v4h-8zM68 400h24v4h-24zM236 400h4v4h-4zM348 400h4v4h-4zM76 404h28v4h-28zM232 404h4v4h-4zM348 404h8v4h-8zM84 408h28v4h-28zM228 408h8v4h-8zM352 408h4v4h-4zM96 412h32v4h-32zM224 412h8v4h-8zM352 412h8v4h-8zM108 416h40v4h-40zM220 416h8v4h-8zM356 416h4v4h-4zM120 420h48v4h-48zM216 420h8v4h-8zM356 420h4v4h-4zM136 424h52v4h-52zM212 424h12v4h-12zM356 424h4v4h-4zM156 428h64v4h-64zM356 428h4v4h-4zM180 432h36v4h-36zM356 432h4v4h-4zM204 436h4v4h-4zM360 436h4v4h-4zM360 440h4v4h-4zM360 444h4v4h-4zM360 448h4v4h-4zM360 452h4v4h-4zM364 456h4v4h-4zM364 460h4v4h-4zM364 464h4v4h-4zM364 468h4v4h-4zM368 472h4v4h-4zM368 476h4v4h-4zM368 480h4v4h-4zM372 484h4v4h-4zM372 488h4v4h-4zM376 492h4v4h-4zM376 496h4v4h-4zM380 500h4v4h-4zM380 504h4v4h-4zM384 508h4v4h-4zM384 512h4v4h-4zM388 516h4v4h-4zM388 520h4v4h-4zM392 524h4v4h-4zM392 528h8v4h-8zM396 532h4v4h-4zM400 536h4v4h-4zM404 540h4v4h-4zM404 544h8v4h-8zM408 548h8v4h-8zM412 552h8v4h-8zM416 556h16v4h-16zM424 560h20v4h-20zM432 564h24v4h-24zM444 568h72v4h-72zM544 568h28v4h-28zM460 572h108v4h-108z"/>
<path fill="#90f881" d="M192 -16h28v4h-28zM536 -16h12v4h-12zM180 -12h32v4h-32zM540 -12h12v4h-12zM164 -8h36v4h-36zM540 -8h16v4h-16zM152 -4h36v4h-36zM544 -4h12v4h-12zM136 0h36v4h-36zM548 0h12v4h-12zM124 4h36v4h-36zM552 4h12v4h-12zM112 8h32v4h-32zM556 8h12v4h-12zM104 12h24v4h-24zM560 12h8v4h-8zM92 16h24v4h-24zM560 16h12v4h-12zM84 20h24v4h-24zM564 20h8v4h-8zM76 24h20v4h-20zM568 24h4v4h-4zM68 28h20v4h-20zM568 28h4v4h-4zM60 32h20v4h-20zM56 36h16v4h-16zM48 40h16v4h-16zM44 44h12v4h-12zM36 48h16v4h-16zM32 52h16v4h-16zM28 56h12v4h-12zM24 60h12v4h-12zM20 64h12v4h-12zM16 68h12v4h-12zM12 72h12v4h-12zM8 76h12v4h-12zM4 80h12v4h-12zM0 84h12v4h-12zM-4 88h12v4h-12zM-4 92h8v4h-8zM-8 96h8v4h-8zM-12 100h12v4h-12zM-12 104h8v4h-8zM-16 108h8v4h-8zM-16 112h8v4h-8zM-16 116h4v4h-4zM-16 120h4v4h-4zM-16 296h4v4h-4zM-16 300h4v4h-4zM-16 304h8v4h-8zM-16 308h12v4h-12zM-12 312h8v4h-8zM-12 316h12v4h-12zM-8 320h12v4h-12zM-4 324h12v4h-12zM-4 328h12v4h-12zM0 332h12v4h-12zM4 336h12v4h-12zM8 340h12v4h-12zM12 344h16v4h-16zM16 348h16v4h-16zM20 352h16v4h-16zM24 356h16v4h-16zM28 360h16v4h-16zM32 364h20v4h-20zM40 368h16v4h-16zM44 372h16v4h-16zM48 376h20v4h-20zM56 380h20v4h-20zM264 380h60v4h-60zM60 384h24v4h-24zM252 384h12v4h-12zM320 384h20v4h-20zM68 388h24v4h-24zM244 388h8v4h-8zM336 388h12v4h-12zM76 392h24v4h-24zM236 392h8v4h-8zM344 392h8v4h-8zM84 396h28v4h-28zM232 396h8v4h-8zM348 396h8v4h-8zM92 400h36v4h-36zM228 400h8v4h-8zM352 400h4v4h-4zM104 404h40v4h-40zM224 404h8v4h-8zM356 404h4v4h-4zM112 408h52v4h-52zM220 408h8v4h-8zM356 408h4v4h-4zM128 412h52v4h-52zM216 412h8v4h-8zM360 412h4v4h-4zM148 416h72v4h-72zM360 416h4v4h-4zM168 420h48v4h-48zM360 420h4v4h-4zM188 424h24v4h-24zM360 424h4v4h-4zM360 428h4v4h-4zM360 432h4v4h-4zM364 436h4v4h-4zM364 440h4v4h-4zM364 444h4v4h-4zM364 448h4v4h-4zM364 452h4v4h-4zM368 456h4v4h-4zM368 460h4v4h-4zM368 464h4v4h-4zM368 468h4v4h-4zM372 472h4v4h-4zM372 476h4v4h-4zM372 480h4v4h-4zM376 484h4v4h-4zM376 488h4v4h-4zM380 492h4v4h-4zM380 496h4v4h-4zM384 500h4v4h-4zM384 504h4v4h-4zM388 508h4v4h-4zM388 512h4v4h-4zM392 516h4v4h-4zM392 520h8v4h-8zM396 524h4v4h-4zM400 528h4v4h-4zM400 532h8v4h-8zM404 536h8v4h-8zM408 540h8v4h-8zM412 544h8v4h-8zM416 548h12v4h-12zM420 552h20v4h-20zM432 556h24v4h-24zM444 560h36v4h-36zM492 560h20v4h-20zM552 560h20v4h-20zM456 564h116v4h-116zM516 568h28v4h-28z"/>
<path fill="#97f87a" d="M220 -16h24v4h-24zM520 -16h16v4h-16zM212 -12h24v4h-24zM528 -12h12v4h-12zM200 -8h24v4h-24zM532 -8h8v4h-8zM188 -4h28v4h-28zM532 -4h12v4h-12zM172 0h32v4h-32zM536 0h12v4h-12zM160 4h36v4h-36zM540 4h12v4h-12zM144 8h40v4h-40zM544 8h12v4h-12zM128 12h36v4h-36zM548 12h12v4h-12zM116 16h32v4h-32zM552 16h8v4h-8zM108 20h28v4h-28zM552 20h12v4h-12zM96 24h24v4h-24zM556 24h12v4h-12zM88 28h24v4h-24zM560 28h8v4h-8zM80 32h20v4h-20zM560 32h12v4h-12zM72 36h20v4h-20zM564 36h8v4h-8zM64 40h20v4h-20zM564 40h8v4h-8zM56 44h20v4h-20zM568 44h4v4h-4zM52 48h16v4h-16zM48 52h12v4h-12zM40 56h16v4h-16zM36 60h12v4h-12zM32 64h12v4h-12zM28 68h12v4h-12zM24 72h12v4h-12zM20 76h12v4h-12zM16 80h12v4h-12zM12 84h12v4h-12zM8 88h12v4h-12zM4 92h12v4h-12zM0 96h12v4h-12zM0 100h8v4h-8zM-4 104h12v4h-12zM-8 108h12v4h-12zM-8 112h8v4h-8zM-12 116h12v4h-12zM-12 120h8v4h-8zM-16 124h8v4h-8zM-16 128h8v4h-8zM-16 132h4v4h-4zM-16 136h4v4h-4zM-16 280h4v4h-4zM-16 284h4v4h-4zM-16 288h8v4h-8zM-16 292h12v4h-12zM-12 296h8v4h-8zM-12 300h12v4h-12zM-8 304h12v4h-12zM-4 308h8v4h-8zM-4 312h12v4h-12zM0 316h12v4h-12zM4 320h12v4h-12zM8 324h12v4h-12zM8 328h16v4h-16zM12 332h16v4h-16zM16 336h16v4h-16zM20 340h20v4h-20zM28 344h16v4h-16zM32 348h16v4h-16zM36 352h16v4h-16zM40 356h20v4h-20zM44 360h20v4h-20zM52 364h20v4h-20zM56 368h20v4h-20zM60 372h24v4h-24zM68 376h24v4h-24zM260 376h68v4h-68zM76 380h28v4h-28zM248 380h16v4h-16zM324 380h20v4h-20zM84 384h32v4h-32zM240 384h12v4h-12zM340 384h8v4h-8zM92 388h36v4h-36zM232 388h12v4h-12zM348 388h8v4h-8zM100 392h48v4h-48zM228 392h8v4h-8zM352 392h4v4h-4zM112 396h56v4h-56zM224 396h8v4h-8zM356 396h4v4h-4zM128 400h52v4h-52zM220 400h8v4h-8zM356 400h8v4h-8zM144 404h52v4h-52zM212 404h12v4h-12zM360 404h4v4h-4zM164 408h56v4h-56zM360 408h4v4h-4zM180 412h36v4h-36zM364 412h4v4h-4zM364 416h4v4h-4zM364 420h4v4h-4zM364 424h4v4h-4zM364 428h4v4h-4zM364 432h4v4h-4zM368 436h4v4h-4zM368 440h4v4h-4zM368 444h4v4h-4zM368 448h4v4h-4zM368 452h4v4h-4zM372 456h4v4h-4zM372 460h4v4h-4zM372 464h4v4h-4zM372 468h4v4h-4zM376 472h4v4h-4zM376 476h4v4h-4zM376 480h4v4h-4zM380 484h4v4h-4zM380 488h4v4h-4zM384 492h4v4h-4zM384 496h4v4h-4zM388 500h4v4h-4zM388 504h4v4h-4zM392 508h4v4h-4zM392 512h8v4h-8zM396 516h4v4h-4zM400 520h4v4h-4zM400 524h8v4h-8zM404 528h8v4h-8zM408 532h8v4h-8zM412 536h8v4h-8zM416 540h12v4h-12zM420 544h20v4h-20zM428 548h24v4h-24zM440 552h32v4h-32zM500 552h4v4h-4zM556 552h16v4h-16zM456 556h116v4h-116zM480 560h12v4h-12zM512 560h40v4h-40z"/>
<path fill="#9df876" d="M244 -16h20v4h-20zM508 -16h12v4h-12zM236 -12h20v4h-20zM512 -12h16v4h-16zM224 -8h24v4h-24zM516 -8h16v4h-16zM216 -4h24v4h-24zM524 -4h8v4h-8zM204 0h24v4h-24zM528 0h8v4h-8zM196 4h24v4h-24zM528 4h12v4h-12zM184 8h28v4h-28zM532 8h12v4h-12zM164 12h36v4h-36zM536 12h12v4h-12zM148 16h40v4h-40zM540 16h12v4h-12zM136 20h36v4h-36zM544 20h8v4h-8zM120 24h36v4h-36zM544 24h12v4h-12zM112 28h28v4h-28zM548 28h12v4h-12zM100 32h28v4h-28zM552 32h8v4h-8zM92 36h24v4h-24zM552 36h12v4h-12zM84 40h20v4h-20zM556 40h8v4h-8zM76 44h20v4h-20zM560 44h8v4h-8zM68 48h20v4h-20zM560 48h12v4h-12zM60 52h20v4h-20zM564 52h8v4h-8zM56 56h16v4h-16zM564 56h8v4h-8zM48 60h16v4h-16zM568 60h4v4h-4zM44 64h16v4h-16zM568 64h4v4h-4zM40 68h12v4h-12zM568 68h4v4h-4zM36 72h12v4h-12zM32 76h12v4h-12zM28 80h12v4h-12zM24 84h12v4h-12zM20 88h12v4h-12zM16 92h12v4h-12zM12 96h12v4h-12zM8 100h12v4h-12zM8 104h8v4h-8zM4 108h8v4h-8zM0 112h12v4h-12zM0 116h8v4h-8zM-4 120h8v4h-8zM-8 124h12v4h-12zM-8 128h8v4h-8zM-12 132h12v4h-12zM568 132h4v4h-4zM-12 136h8v4h-8zM568 136h4v4h-4zM-16 140h12v4h-12zM568 140h4v4h-4zM-16 144h8v4h-8zM568 144h4v4h-4zM-16 148h8v4h-8zM568 148h4v4h-4zM-16 152h4v4h-4zM568 152h4v4h-4zM-16 156h4v4h-4zM568 156h4v4h-4zM-16 160h4v4h-4zM568 160h4v4h-4zM568 164h4v4h-4zM568 168h4v4h-4zM568 172h4v4h-4zM568 176h4v4h-4zM568 180h4v4h-4zM568 184h4v4h-4zM568 188h4v4h-4zM568 192h4v4h-4zM568 196h4v4h-4zM568 200h4v4h-4zM568 204h4v4h-4zM568 208h4v4h-4zM-16 256h4v4h-4zM-16 260h4v4h-4zM-16 264h4v4h-4zM-16 268h8v4h-8zM-16 272h8v4h-8zM-16 276h12v4h-12zM-12 280h8v4h-8zM-12 284h12v4h-12zM-8 288h12v4h-12zM-4 292h8v4h-8zM-4 296h12v4h-12zM0 300h12v4h-12zM4 304h8v4h-8zM4 308h12v4h-12zM8 312h12v4h-12zM12 316h12v4h-12zM16 320h12v4h-12zM20 324h16v4h-16zM24 328h16v4h-16zM28 332h16v4h-16zM32 336h20v4h-20zM40 340h16v4h-16zM44 344h16v4h-16zM48 348h20v4h-20zM52 352h20v4h-20zM60 356h20v4h-20zM64 360h24v4h-24zM72 364h24v4h-24zM76 368h32v4h-32zM84 372h36v4h-36zM260 372h72v4h-72zM92 376h40v4h-40zM248 376h12v4h-12zM328 376h16v4h-16zM104 380h52v4h-52zM236 380h12v4h-12zM344 380h8v4h-8zM116 384h52v4h-52zM228 384h12v4h-12zM348 384h8v4h-8zM128 388h52v4h-52zM224 388h8v4h-8zM356 388h4v4h-4zM148 392h44v4h-44zM216 392h12v4h-12zM356 392h8v4h-8zM168 396h56v4h-56zM360 396h4v4h-4zM180 400h40v4h-40zM364 400h4v4h-4zM196 404h16v4h-16zM364 404h4v4h-4zM364 408h4v4h-4zM368 412h4v4h-4zM368 416h4v4h-4zM368 420h4v4h-4zM368 424h4v4h-4zM368 428h4v4h-4zM368 432h4v4h-4zM372 440h4v4h-4zM372 444h4v4h-4zM372 448h4v4h-4zM372 452h4v4h-4zM376 460h4v4h-4zM376 464h4v4h-4zM376 468h4v4h-4zM380 472h4v4h-4zM380 476h4v4h-4zM380 480h4v4h-4zM384 484h4v4h-4zM384 488h4v4h-4zM388 492h4v4h-4zM388 496h4v4h-4zM392 500h4v4h-4zM392 504h4v4h-4zM396 508h4v4h-4zM400 512h4v4h-4zM400 516h8v4h-8zM404 520h4v4h-4zM408 524h4v4h-4zM412 528h8v4h-8zM416 532h8v4h-8zM420 536h16v4h-16zM428 540h20v4h-20zM440 544h24v4h-24zM564 544h8v4h-8zM452 548h120v4h-120zM472 552h28v4h-28zM504 552h52v4h-52z"/>
<path fill="#a3f873" d="M264 -16h20v4h-20zM460 -16h20v4h-20zM488 -16h20v4h-20zM256 -12h20v4h-20zM460 -12h8v4h-8zM500 -12h12v4h-12zM248 -8h20v4h-20zM504 -8h12v4h-12zM240 -4h20v4h-20zM508 -4h16v4h-16zM228 0h24v4h-24zM516 0h12v4h-12zM220 4h24v4h-24zM520 4h8v4h-8zM212 8h20v4h-20zM524 8h8v4h-8zM200 12h24v4h-24zM524 12h12v4h-12zM188 16h28v4h-28zM528 16h12v4h-12zM172 20h32v4h-32zM532 20h12v4h-12zM156 24h36v4h-36zM536 24h8v4h-8zM140 28h40v4h-40zM540 28h8v4h-8zM128 32h40v4h-40zM540 32h12v4h-12zM116 36h32v4h-32zM544 36h8v4h-8zM104 40h28v4h-28zM544 40h12v4h-12zM96 44h24v4h-24zM548 44h12v4h-12zM88 48h20v4h-20zM552 48h8v4h-8zM80 52h16v4h-16zM552 52h12v4h-12zM72 56h16v4h-16zM556 56h8v4h-8zM64 60h16v4h-16zM556 60h12v4h-12zM60 64h12v4h-12zM560 64h8v4h-8zM52 68h16v4h-16zM560 68h8v4h-8zM48 72h12v4h-12zM564 72h8v4h-8zM44 76h12v4h-12zM564 76h8v4h-8zM40 80h8v4h-8zM564 80h8v4h-8zM36 84h8v4h-8zM568 84h4v4h-4zM32 88h8v4h-8zM568 88h4v4h-4zM28 92h8v4h-8zM568 92h4v4h-4zM24 96h8v4h-8zM20 100h8v4h-8zM16 104h8v4h-8zM12 108h12v4h-12zM12 112h8v4h-8zM8 116h8v4h-8zM4 120h8v4h-8zM4 124h8v4h-8zM0 128h8v4h-8zM564 128h8v4h-8zM0 132h8v4h-8zM560 132h8v4h-8zM-4 136h8v4h-8zM560 136h8v4h-8zM-4 140h4v4h-4zM560 140h8v4h-8zM-8 144h8v4h-8zM560 144h8v4h-8zM-8 148h8v4h-8zM560 148h8v4h-8zM-12 152h8v4h-8zM560 152h8v4h-8zM-12 156h8v4h-8zM560 156h8v4h-8zM-12 160h4v4h-4zM560 160h8v4h-8zM-16 164h8v4h-8zM560 164h8v4h-8zM-16 168h8v4h-8zM560 168h8v4h-8zM-16 172h4v4h-4zM560 172h8v4h-8zM-16 176h4v4h-4zM560 176h8v4h-8zM-16 180h4v4h-4zM560 180h8v4h-8zM-16 184h4v4h-4zM560 184h8v4h-8zM-16 188h4v4h-4zM556 188h12v4h-12zM556 192h12v4h-12zM556 196h12v4h-12zM556 200h12v4h-12zM556 204h12v4h-12zM560 208h8v4h-8zM560 212h12v4h-12zM560 216h12v4h-12zM560 220h12v4h-12zM560 224h12v4h-12zM564 228h8v4h-8zM-16 232h4v4h-4zM564 232h8v4h-8zM-16 236h4v4h-4zM568 236h4v4h-4zM-16 240h4v4h-4zM-16 244h4v4h-4zM-16 248h8v4h-8zM-16 252h8v4h-8zM-12 256h4v4h-4zM-12 260h8v4h-8zM-12 264h8v4h-8zM-8 268h8v4h-8zM-8 272h8v4h-8zM-4 276h8v4h-8zM-4 280h12v4h-12zM0 284h8v4h-8zM4 288h8v4h-8zM4 292h12v4h-12zM8 296h8v4h-8zM12 300h8v4h-8zM12 304h12v4h-12zM16 308h12v4h-12zM20 312h12v4h-12zM24 316h16v4h-16zM28 320h16v4h-16zM36 324h12v4h-12zM40 328h16v4h-16zM44 332h16v4h-16zM52 336h12v4h-12zM56 340h16v4h-16zM60 344h16v4h-16zM68 348h16v4h-16zM72 352h20v4h-20zM80 356h24v4h-24zM88 360h28v4h-28zM96 364h32v4h-32zM108 368h44v4h-44zM260 368h76v4h-76zM120 372h48v4h-48zM244 372h16v4h-16zM332 372h16v4h-16zM132 376h44v4h-44zM232 376h16v4h-16zM344 376h12v4h-12zM156 380h32v4h-32zM224 380h12v4h-12zM352 380h8v4h-8zM168 384h32v4h-32zM216 384h12v4h-12zM356 384h8v4h-8zM180 388h44v4h-44zM360 388h4v4h-4zM192 392h24v4h-24zM364 392h4v4h-4zM364 396h4v4h-4zM368 400h4v4h-4zM368 404h4v4h-4zM368 408h4v4h-4zM372 416h4v4h-4zM372 420h4v4h-4zM372 424h4v4h-4zM372 428h4v4h-4zM372 432h4v4h-4zM372 436h4v4h-4zM376 444h4v4h-4zM376 448h4v4h-4zM376 452h4v4h-4zM376 456h4v4h-4zM380 460h4v4h-4zM380 464h4v4h-4zM380 468h4v4h-4zM384 476h4v4h-4zM384 480h4v4h-4zM388 484h4v4h-4zM388 488h4v4h-4zM392 492h4v4h-4zM392 496h4v4h-4zM396 500h4v4h-4zM396 504h8v4h-8zM400 508h4v4h-4zM404 512h4v4h-4zM408 516h4v4h-4zM408 520h8v4h-8zM412 524h8v4h-8zM420 528h12v4h-12zM424 532h16v4h-16zM436 536h16v4h-16zM568 536h4v4h-4zM448 540h28v4h-28zM500 540h8v4h-8zM552 540h20v4h-20zM464 544h100v4h-100z"/>
<path fill="#a9f86f" d="M284 -16h24v4h-24zM452 -16h8v4h-8zM480 -16h8v4h-8zM276 -12h20v4h-20zM456 -12h4v4h-4zM468 -12h32v4h-32zM268 -8h16v4h-16zM460 -8h20v4h-20zM488 -8h16v4h-16zM260 -4h16v4h-16zM496 -4h12v4h-12zM252 0h16v4h-16zM504 0h12v4h-12zM244 4h16v4h-16zM508 4h12v4h-12zM232 8h20v4h-20zM512 8h12v4h-12zM224 12h20v4h-20zM516 12h8v4h-8zM216 16h20v4h-20zM520 16h8v4h-8zM204 20h24v4h-24zM524 20h8v4h-8zM192 24h28v4h-28zM524 24h12v4h-12zM180 28h28v4h-28zM528 28h12v4h-12zM168 32h28v4h-28zM532 32h8v4h-8zM148 36h36v4h-36zM536 36h8v4h-8zM132 40h40v4h-40zM536 40h8v4h-8zM120 44h32v4h-32zM540 44h8v4h-8zM108 48h24v4h-24zM540 48h12v4h-12zM96 52h24v4h-24zM544 52h8v4h-8zM88 56h20v4h-20zM548 56h8v4h-8zM80 60h16v4h-16zM548 60h8v4h-8zM72 64h16v4h-16zM552 64h8v4h-8zM68 68h12v4h-12zM552 68h8v4h-8zM60 72h16v4h-16zM552 72h12v4h-12zM56 76h12v4h-12zM556 76h8v4h-8zM48 80h12v4h-12zM556 80h8v4h-8zM44 84h12v4h-12zM560 84h8v4h-8zM40 88h12v4h-12zM560 88h8v4h-8zM36 92h12v4h-12zM560 92h8v4h-8zM32 96h12v4h-12zM560 96h12v4h-12zM28 100h12v4h-12zM564 100h8v4h-8zM24 104h12v4h-12zM564 104h8v4h-8zM24 108h8v4h-8zM568 108h4v4h-4zM20 112h8v4h-8zM16 116h8v4h-8zM12 120h8v4h-8zM568 120h4v4h-4zM12 124h8v4h-8zM564 124h8v4h-8zM8 128h8v4h-8zM560 128h4v4h-4zM8 132h8v4h-8zM556 132h4v4h-4zM4 136h8v4h-8zM552 136h8v4h-8zM0 140h8v4h-8zM552 140h8v4h-8zM0 144h8v4h-8zM552 144h8v4h-8zM0 148h4v4h-4zM552 148h8v4h-8zM-4 152h8v4h-8zM552 152h8v4h-8zM-4 156h8v4h-8zM552 156h8v4h-8zM-8 160h8v4h-8zM552 160h8v4h-8zM-8 164h8v4h-8zM552 164h8v4h-8zM-8 168h8v4h-8zM552 168h8v4h-8zM-12 172h8v4h-8zM552 172h8v4h-8zM-12 176h8v4h-8zM552 176h8v4h-8zM-12 180h8v4h-8zM552 180h8v4h-8zM-12 184h4v4h-4zM548 184h12v4h-12zM-12 188h4v4h-4zM548 188h8v4h-8zM-16 192h8v4h-8zM548 192h8v4h-8zM-16 196h8v4h-8zM548 196h8v4h-8zM-16 200h8v4h-8zM548 200h8v4h-8zM-16 204h8v4h-8zM548 204h8v4h-8zM-16 208h8v4h-8zM548 208h12v4h-12zM-16 212h8v4h-8zM548 212h12v4h-12zM-16 216h8v4h-8zM548 216h12v4h-12zM-16 220h8v4h-8zM548 220h12v4h-12zM-16 224h8v4h-8zM548 224h12v4h-12zM-16 228h8v4h-8zM548 228h16v4h-16zM-12 232h4v4h-4zM552 232h12v4h-12zM-12 236h8v4h-8zM552 236h16v4h-16zM-12 240h8v4h-8zM556 240h16v4h-16zM-12 244h8v4h-8zM560 244h12v4h-12zM-8 248h8v4h-8zM560 248h12v4h-12zM-8 252h8v4h-8zM564 252h8v4h-8zM-8 256h8v4h-8zM-4 260h8v4h-8zM-4 264h8v4h-8zM0 268h8v4h-8zM0 272h8v4h-8zM4 276h8v4h-8zM8 280h8v4h-8zM8 284h12v4h-12zM12 288h8v4h-8zM16 292h8v4h-8zM16 296h12v4h-12zM20 300h12v4h-12zM24 304h12v4h-12zM28 308h12v4h-12zM32 312h16v4h-16zM40 316h12v4h-12zM44 320h16v4h-16zM48 324h16v4h-16zM56 328h12v4h-12zM60 332h16v4h-16zM64 336h16v4h-16zM72 340h16v4h-16zM76 344h20v4h-20zM84 348h24v4h-24zM92 352h28v4h-28zM104 356h32v4h-32zM116 360h48v4h-48zM128 364h44v4h-44zM260 364h80v4h-80zM152 368h28v4h-28zM240 368h20v4h-20zM336 368h16v4h-16zM168 372h28v4h-28zM224 372h20v4h-20zM348 372h8v4h-8zM176 376h56v4h-56zM356 376h4v4h-4zM188 380h36v4h-36zM360 380h4v4h-4zM200 384h16v4h-16zM364 384h4v4h-4zM364 388h4v4h-4zM368 392h4v4h-4zM368 396h4v4h-4zM372 400h4v4h-4zM372 404h4v4h-4zM372 408h4v4h-4zM372 412h4v4h-4zM376 420h4v4h-4zM376 424h4v4h-4zM376 428h4v4h-4zM376 432h4v4h-4zM376 436h4v4h-4zM376 440h4v4h-4zM380 448h4v4h-4zM380 452h4v4h-4zM380 456h4v4h-4zM384 464h4v4h-4zM384 468h4v4h-4zM384 472h4v4h-4zM388 476h4v4h-4zM388 480h4v4h-4zM392 484h4v4h-4zM392 488h4v4h-4zM396 492h4v4h-4zM396 496h4v4h-4zM400 500h4v4h-4zM404 504h4v4h-4zM404 508h8v4h-8zM408 512h8v4h-8zM412 516h8v4h-8zM416 520h12v4h-12zM420 524h16v4h-16zM432 528h12v4h-12zM440 532h20v4h-20zM560 532h12v4h-12zM452 536h72v4h-72zM532 536h36v4h-36zM476 540h24v4h-24zM508 540h44v4h-44z"/>
<path fill="#aff86c" d="M308 -16h24v4h-24zM428 -16h24v4h-24zM296 -12h20v4h-20zM440 -12h16v4h-16zM284 -8h20v4h-20zM452 -8h8v4h-8zM480 -8h8v4h-8zM276 -4h20v4h-20zM456 -4h40v4h-40zM268 0h16v4h-16zM460 0h16v4h-16zM488 0h16v4h-16zM260 4h16v4h-16zM496 4h12v4h-12zM252 8h16v4h-16zM504 8h8v4h-8zM244 12h20v4h-20zM508 12h8v4h-8zM236 16h20v4h-20zM512 16h8v4h-8zM228 20h20v4h-20zM512 20h12v4h-12zM220 24h20v4h-20zM516 24h8v4h-8zM208 28h24v4h-24zM520 28h8v4h-8zM196 32h28v4h-28zM524 32h8v4h-8zM184 36h28v4h-28zM528 36h8v4h-8zM172 40h32v4h-32zM528 40h8v4h-8zM152 44h36v4h-36zM532 44h8v4h-8zM132 48h44v4h-44zM532 48h8v4h-8zM120 52h40v4h-40zM536 52h8v4h-8zM108 56h28v4h-28zM540 56h8v4h-8zM96 60h24v4h-24zM540 60h8v4h-8zM88 64h20v4h-20zM544 64h8v4h-8zM80 68h20v4h-20zM544 68h8v4h-8zM76 72h12v4h-12zM548 72h4v4h-4zM68 76h16v4h-16zM548 76h8v4h-8zM60 80h16v4h-16zM548 80h8v4h-8zM56 84h12v4h-12zM552 84h8v4h-8zM52 88h12v4h-12zM552 88h8v4h-8zM48 92h8v4h-8zM552 92h8v4h-8zM44 96h8v4h-8zM556 96h4v4h-4zM40 100h8v4h-8zM556 100h8v4h-8zM36 104h8v4h-8zM556 104h8v4h-8zM32 108h8v4h-8zM560 108h8v4h-8zM28 112h8v4h-8zM564 112h8v4h-8zM24 116h8v4h-8zM564 116h8v4h-8zM20 120h12v4h-12zM560 120h8v4h-8zM20 124h8v4h-8zM556 124h8v4h-8zM16 128h8v4h-8zM552 128h8v4h-8zM16 132h8v4h-8zM548 132h8v4h-8zM12 136h8v4h-8zM544 136h8v4h-8zM8 140h8v4h-8zM544 140h8v4h-8zM8 144h8v4h-8zM544 144h8v4h-8zM4 148h8v4h-8zM544 148h8v4h-8zM4 152h8v4h-8zM544 152h8v4h-8zM4 156h4v4h-4zM544 156h8v4h-8zM0 160h8v4h-8zM544 160h8v4h-8zM0 164h8v4h-8zM544 164h8v4h-8zM0 168h4v4h-4zM544 168h8v4h-8zM-4 172h8v4h-8zM544 172h8v4h-8zM-4 176h8v4h-8zM544 176h8v4h-8zM-4 180h4v4h-4zM544 180h8v4h-8zM-8 184h8v4h-8zM544 184h4v4h-4zM-8 188h8v4h-8zM540 188h8v4h-8zM-8 192h8v4h-8zM540 192h8v4h-8zM-8 196h8v4h-8zM540 196h8v4h-8zM-8 200h4v4h-4zM540 200h8v4h-8zM-8 204h4v4h-4zM540 204h8v4h-8zM-8 208h4v4h-4zM540 208h8v4h-8zM-8 212h4v4h-4zM540 212h8v4h-8zM-8 216h4v4h-4zM540 216h8v4h-8zM-8 220h4v4h-4zM540 220h8v4h-8zM-8 224h8v4h-8zM540 224h8v4h-8zM-8 228h8v4h-8zM540 228h8v4h-8zM-8 232h8v4h-8zM540 232h12v4h-12zM-4 236h4v4h-4zM540 236h12v4h-12zM-4 240h8v4h-8zM540 240h16v4h-16zM-4 244h8v4h-8zM544 244h16v4h-16zM0 248h4v4h-4zM544 248h16v4h-16zM0 252h8v4h-8zM548 252h16v4h-16zM0 256h8v4h-8zM556 256h16v4h-16zM4 260h8v4h-8zM560 260h12v4h-12zM4 264h8v4h-8zM568 264h4v4h-4zM8 268h8v4h-8zM8 272h12v4h-12zM12 276h8v4h-8zM16 280h8v4h-8zM20 284h8v4h-8zM20 288h12v4h-12zM24 292h12v4h-12zM28 296h12v4h-12zM32 300h12v4h-12zM36 304h12v4h-12zM40 308h16v4h-16zM48 312h12v4h-12zM52 316h16v4h-16zM60 320h12v4h-12zM64 324h12v4h-12zM68 328h16v4h-16zM76 332h16v4h-16zM80 336h20v4h-20zM88 340h20v4h-20zM96 344h24v4h-24zM108 348h28v4h-28zM120 352h44v4h-44zM136 356h36v4h-36zM164 360h20v4h-20zM256 360h92v4h-92zM172 364h24v4h-24zM232 364h28v4h-28zM340 364h16v4h-16zM180 368h60v4h-60zM352 368h8v4h-8zM196 372h28v4h-28zM356 372h8v4h-8zM360 376h8v4h-8zM364 380h8v4h-8zM368 384h4v4h-4zM368 388h8v4h-8zM372 392h4v4h-4zM372 396h4v4h-4zM376 400h4v4h-4zM376 404h4v4h-4zM376 408h4v4h-4zM376 412h4v4h-4zM376 416h4v4h-4zM380 428h4v4h-4zM380 432h4v4h-4zM380 436h4v4h-4zM380 440h4v4h-4zM380 444h4v4h-4zM384 452h4v4h-4zM384 456h4v4h-4zM384 460h4v4h-4zM388 464h4v4h-4zM388 468h4v4h-4zM388 472h4v4h-4zM392 476h4v4h-4zM392 480h4v4h-4zM396 484h4v4h-4zM396 488h4v4h-4zM400 492h4v4h-4zM400 496h8v4h-8zM404 500h4v4h-4zM408 504h4v4h-4zM412 508h4v4h-4zM416 512h8v4h-8zM420 516h12v4h-12zM428 520h12v4h-12zM436 524h16v4h-16zM568 524h4v4h-4zM444 528h24v4h-24zM552 528h20v4h-20zM460 532h100v4h-100zM524 536h8v4h-8z"/>
<path fill="#b4f76b" d="M332 -16h96v4h-96zM316 -12h36v4h-36zM416 -12h24v4h-24zM304 -8h24v4h-24zM432 -8h20v4h-20zM296 -4h16v4h-16zM448 -4h8v4h-8zM284 0h20v4h-20zM456 0h4v4h-4zM476 0h12v4h-12zM276 4h16v4h-16zM456 4h40v4h-40zM268 8h16v4h-16zM460 8h16v4h-16zM488 8h16v4h-16zM264 12h12v4h-12zM496 12h12v4h-12zM256 16h16v4h-16zM500 16h12v4h-12zM248 20h16v4h-16zM504 20h8v4h-8zM240 24h16v4h-16zM508 24h8v4h-8zM232 28h16v4h-16zM512 28h8v4h-8zM224 32h20v4h-20zM516 32h8v4h-8zM212 36h24v4h-24zM516 36h12v4h-12zM204 40h24v4h-24zM520 40h8v4h-8zM188 44h32v4h-32zM524 44h8v4h-8zM176 48h32v4h-32zM524 48h8v4h-8zM160 52h32v4h-32zM528 52h8v4h-8zM136 56h40v4h-40zM532 56h8v4h-8zM120 60h40v4h-40zM532 60h8v4h-8zM108 64h28v4h-28zM536 64h8v4h-8zM100 68h20v4h-20zM536 68h8v4h-8zM88 72h20v4h-20zM540 72h8v4h-8zM84 76h12v4h-12zM540 76h8v4h-8zM76 80h12v4h-12zM540 80h8v4h-8zM68 84h12v4h-12zM544 84h8v4h-8zM64 88h12v4h-12zM544 88h8v4h-8zM56 92h12v4h-12zM544 92h8v4h-8zM52 96h12v4h-12zM548 96h8v4h-8zM48 100h12v4h-12zM548 100h8v4h-8zM44 104h8v4h-8zM548 104h8v4h-8zM40 108h8v4h-8zM552 108h8v4h-8zM36 112h8v4h-8zM556 112h8v4h-8zM32 116h8v4h-8zM560 116h4v4h-4zM32 120h8v4h-8zM552 120h8v4h-8zM28 124h8v4h-8zM548 124h8v4h-8zM24 128h8v4h-8zM544 128h8v4h-8zM24 132h4v4h-4zM540 132h8v4h-8zM20 136h8v4h-8zM540 136h4v4h-4zM16 140h8v4h-8zM540 140h4v4h-4zM16 144h8v4h-8zM540 144h4v4h-4zM12 148h8v4h-8zM540 148h4v4h-4zM12 152h8v4h-8zM540 152h4v4h-4zM8 156h8v4h-8zM540 156h4v4h-4zM8 160h8v4h-8zM540 160h4v4h-4zM8 164h4v4h-4zM540 164h4v4h-4zM4 168h8v4h-8zM540 168h4v4h-4zM4 172h8v4h-8zM540 172h4v4h-4zM4 176h4v4h-4zM540 176h4v4h-4zM0 180h8v4h-8zM540 180h4v4h-4zM0 184h8v4h-8zM536 184h8v4h-8zM0 188h8v4h-8zM536 188h4v4h-4zM0 192h4v4h-4zM536 192h4v4h-4zM0 196h4v4h-4zM536 196h4v4h-4zM-4 200h8v4h-8zM536 200h4v4h-4zM-4 204h8v4h-8zM536 204h4v4h-4zM-4 208h8v4h-8zM536 208h4v4h-4zM-4 212h8v4h-8zM536 212h4v4h-4zM-4 216h8v4h-8zM536 216h4v4h-4zM-4 220h8v4h-8zM536 220h4v4h-4zM0 224h4v4h-4zM536 224h4v4h-4zM0 228h4v4h-4zM536 228h4v4h-4zM0 232h8v4h-8zM536 232h4v4h-4zM0 236h8v4h-8zM536 236h4v4h-4zM4 240h4v4h-4zM536 240h4v4h-4zM4 244h8v4h-8zM536 244h8v4h-8zM4 248h8v4h-8zM540 248h4v4h-4zM8 252h8v4h-8zM540 252h8v4h-8zM8 256h8v4h-8zM540 256h16v4h-16zM12 260h8v4h-8zM544 260h16v4h-16zM12 264h8v4h-8zM552 264h16v4h-16zM16 268h8v4h-8zM564 268h8v4h-8zM20 272h8v4h-8zM20 276h8v4h-8zM24 280h8v4h-8zM28 284h8v4h-8zM32 288h8v4h-8zM36 292h8v4h-8zM40 296h8v4h-8zM44 300h12v4h-12zM48 304h12v4h-12zM56 308h12v4h-12zM60 312h12v4h-12zM68 316h8v4h-8zM72 320h12v4h-12zM76 324h16v4h-16zM84 328h16v4h-16zM92 332h16v4h-16zM100 336h20v4h-20zM108 340h28v4h-28zM120 344h44v4h-44zM136 348h36v4h-36zM164 352h20v4h-20zM296 352h44v4h-44zM172 356h24v4h-24zM252 356h104v4h-104zM184 360h72v4h-72zM348 360h12v4h-12zM196 364h36v4h-36zM356 364h8v4h-8zM360 368h8v4h-8zM364 372h8v4h-8zM368 376h4v4h-4zM372 380h4v4h-4zM372 384h4v4h-4zM376 388h4v4h-4zM376 392h4v4h-4zM376 396h4v4h-4zM380 404h4v4h-4zM380 408h4v4h-4zM380 412h4v4h-4zM380 416h4v4h-4zM380 420h4v4h-4zM380 424h4v4h-4zM384 432h4v4h-4zM384 436h4v4h-4zM384 440h4v4h-4zM384 444h4v4h-4zM384 448h4v4h-4zM388 452h4v4h-4zM388 456h4v4h-4zM388 460h4v4h-4zM392 468h4v4h-4zM392 472h4v4h-4zM396 476h4v4h-4zM396 480h4v4h-4zM400 484h4v4h-4zM400 488h4v4h-4zM404 492h4v4h-4zM408 496h4v4h-4zM408 500h8v4h-8zM412 504h8v4h-8zM416 508h8v4h-8zM424 512h8v4h-8zM432 516h12v4h-12zM440 520h16v4h-16zM564 520h8v4h-8zM452 524h24v4h-24zM500 524h8v4h-8zM548 524h20v4h-20zM468 528h84v4h-84z"/>
<path fill="#b9f669" d="M352 -12h64v4h-64zM328 -8h52v4h-52zM400 -8h32v4h-32zM312 -4h24v4h-24zM428 -4h20v4h-20zM304 0h16v4h-16zM440 0h16v4h-16zM292 4h16v4h-16zM452 4h4v4h-4zM284 8h16v4h-16zM456 8h4v4h-4zM476 8h12v4h-12zM276 12h16v4h-16zM460 12h36v4h-36zM272 16h12v4h-12zM488 16h12v4h-12zM264 20h12v4h-12zM496 20h8v4h-8zM256 24h16v4h-16zM500 24h8v4h-8zM248 28h16v4h-16zM504 28h8v4h-8zM244 32h12v4h-12zM508 32h8v4h-8zM236 36h16v4h-16zM508 36h8v4h-8zM228 40h16v4h-16zM512 40h8v4h-8zM220 44h20v4h-20zM516 44h8v4h-8zM208 48h24v4h-24zM516 48h8v4h-8zM192 52h32v4h-32zM520 52h8v4h-8zM176 56h36v4h-36zM524 56h8v4h-8zM160 60h36v4h-36zM524 60h8v4h-8zM136 64h44v4h-44zM528 64h8v4h-8zM120 68h40v4h-40zM528 68h8v4h-8zM108 72h24v4h-24zM532 72h8v4h-8zM96 76h20v4h-20zM532 76h8v4h-8zM88 80h16v4h-16zM536 80h4v4h-4zM80 84h16v4h-16zM536 84h8v4h-8zM76 88h12v4h-12zM536 88h8v4h-8zM68 92h12v4h-12zM540 92h4v4h-4zM64 96h12v4h-12zM540 96h8v4h-8zM60 100h8v4h-8zM540 100h8v4h-8zM52 104h12v4h-12zM544 104h4v4h-4zM48 108h12v4h-12zM544 108h8v4h-8zM44 112h8v4h-8zM548 112h8v4h-8zM40 116h8v4h-8zM552 116h8v4h-8zM40 120h8v4h-8zM548 120h4v4h-4zM36 124h8v4h-8zM544 124h4v4h-4zM32 128h8v4h-8zM540 128h4v4h-4zM28 132h8v4h-8zM536 132h4v4h-4zM28 136h8v4h-8zM536 136h4v4h-4zM24 140h8v4h-8zM536 140h4v4h-4zM24 144h4v4h-4zM536 144h4v4h-4zM20 148h8v4h-8zM536 148h4v4h-4zM20 152h4v4h-4zM536 152h4v4h-4zM16 156h8v4h-8zM536 156h4v4h-4zM16 160h4v4h-4zM536 160h4v4h-4zM12 164h8v4h-8zM536 164h4v4h-4zM12 168h4v4h-4zM536 168h4v4h-4zM12 172h4v4h-4zM536 172h4v4h-4zM8 176h8v4h-8zM536 176h4v4h-4zM8 180h4v4h-4zM536 180h4v4h-4zM8 184h4v4h-4zM8 188h4v4h-4zM4 192h8v4h-8zM532 192h4v4h-4zM4 196h8v4h-8zM532 196h4v4h-4zM4 200h4v4h-4zM532 200h4v4h-4zM4 204h4v4h-4zM532 204h4v4h-4zM4 208h4v4h-4zM532 208h4v4h-4zM4 212h4v4h-4zM532 212h4v4h-4zM4 216h4v4h-4zM532 216h4v4h-4zM4 220h4v4h-4zM532 220h4v4h-4zM4 224h8v4h-8zM532 224h4v4h-4zM4 228h8v4h-8zM532 228h4v4h-4zM8 232h4v4h-4zM532 232h4v4h-4zM8 236h4v4h-4zM532 236h4v4h-4zM8 240h8v4h-8zM532 240h4v4h-4zM12 244h4v4h-4zM532 244h4v4h-4zM12 248h8v4h-8zM532 248h8v4h-8zM16 252h4v4h-4zM536 252h4v4h-4zM16 256h8v4h-8zM536 256h4v4h-4zM20 260h4v4h-4zM536 260h8v4h-8zM20 264h8v4h-8zM540 264h12v4h-12zM24 268h8v4h-8zM544 268h20v4h-20zM28 272h8v4h-8zM556 272h16v4h-16zM28 276h8v4h-8zM568 276h4v4h-4zM32 280h8v4h-8zM36 284h8v4h-8zM40 288h8v4h-8zM44 292h12v4h-12zM48 296h12v4h-12zM56 300h8v4h-8zM60 304h12v4h-12zM352 304h36v4h-36zM68 308h8v4h-8zM332 308h60v4h-60zM72 312h12v4h-12zM320 312h76v4h-76zM76 316h12v4h-12zM316 316h80v4h-80zM84 320h12v4h-12zM316 320h72v4h-72zM92 324h12v4h-12zM316 324h64v4h-64zM100 328h12v4h-12zM320 328h48v4h-48zM108 332h20v4h-20zM120 336h28v4h-28zM136 340h32v4h-32zM164 344h16v4h-16zM320 344h20v4h-20zM172 348h24v4h-24zM284 348h72v4h-72zM184 352h32v4h-32zM240 352h56v4h-56zM340 352h20v4h-20zM196 356h56v4h-56zM356 356h12v4h-12zM360 360h8v4h-8zM364 364h8v4h-8zM368 368h8v4h-8zM372 372h4v4h-4zM372 376h8v4h-8zM376 380h4v4h-4zM376 384h4v4h-4zM380 388h4v4h-4zM380 392h4v4h-4zM380 396h4v4h-4zM380 400h4v4h-4zM384 408h4v4h-4zM384 412h4v4h-4zM384 416h4v4h-4zM384 420h4v4h-4zM384 424h4v4h-4zM384 428h4v4h-4zM388 440h4v4h-4zM388 444h4v4h-4zM388 448h4v4h-4zM392 456h4v4h-4zM392 460h4v4h-4zM392 464h4v4h-4zM396 468h4v4h-4zM396 472h4v4h-4zM400 476h4v4h-4zM400 480h4v4h-4zM404 484h4v4h-4zM404 488h8v4h-8zM408 492h4v4h-4zM412 496h4v4h-4zM416 500h4v4h-4zM420 504h8v4h-8zM424 508h12v4h-12zM432 512h16v4h-16zM444 516h16v4h-16zM560 516h12v4h-12zM456 520h28v4h-28zM496 520h12v4h-12zM544 520h20v4h-20zM476 524h24v4h-24zM508 524h40v4h-40z"/>
<path fill="#bef568" d="M380 -8h20v4h-20zM336 -4h92v4h-92zM320 0h28v4h-28zM420 0h20v4h-20zM308 4h20v4h-20zM436 4h16v4h-16zM300 8h16v4h-16zM444 8h12v4h-12zM292 12h12v4h-12zM456 12h4v4h-4zM284 16h12v4h-12zM456 16h32v4h-32zM276 20h12v4h-12zM460 20h36v4h-36zM272 24h12v4h-12zM492 24h8v4h-8zM264 28h12v4h-12zM496 28h8v4h-8zM256 32h16v4h-16zM500 32h8v4h-8zM252 36h12v4h-12zM500 36h8v4h-8zM244 40h16v4h-16zM504 40h8v4h-8zM240 44h12v4h-12zM508 44h8v4h-8zM232 48h16v4h-16zM512 48h4v4h-4zM224 52h16v4h-16zM512 52h8v4h-8zM212 56h20v4h-20zM516 56h8v4h-8zM196 60h28v4h-28zM520 60h4v4h-4zM180 64h36v4h-36zM520 64h8v4h-8zM160 68h40v4h-40zM524 68h4v4h-4zM132 72h44v4h-44zM524 72h8v4h-8zM116 76h32v4h-32zM528 76h4v4h-4zM104 80h20v4h-20zM528 80h8v4h-8zM96 84h16v4h-16zM528 84h8v4h-8zM88 88h12v4h-12zM532 88h4v4h-4zM80 92h12v4h-12zM532 92h8v4h-8zM76 96h8v4h-8zM532 96h8v4h-8zM68 100h12v4h-12zM536 100h4v4h-4zM64 104h8v4h-8zM536 104h8v4h-8zM60 108h8v4h-8zM536 108h8v4h-8zM52 112h12v4h-12zM544 112h4v4h-4zM48 116h12v4h-12zM544 116h8v4h-8zM48 120h8v4h-8zM540 120h8v4h-8zM44 124h8v4h-8zM536 124h8v4h-8zM40 128h8v4h-8zM536 128h4v4h-4zM36 132h8v4h-8zM36 136h4v4h-4zM532 136h4v4h-4zM32 140h8v4h-8zM532 140h4v4h-4zM28 144h8v4h-8zM532 144h4v4h-4zM28 148h4v4h-4zM532 148h4v4h-4zM24 152h8v4h-8zM532 152h4v4h-4zM24 156h4v4h-4zM532 156h4v4h-4zM20 160h8v4h-8zM532 160h4v4h-4zM20 164h4v4h-4zM532 164h4v4h-4zM16 168h8v4h-8zM532 168h4v4h-4zM16 172h8v4h-8zM532 172h4v4h-4zM16 176h4v4h-4zM532 176h4v4h-4zM12 180h8v4h-8zM532 180h4v4h-4zM12 184h8v4h-8zM532 184h4v4h-4zM12 188h4v4h-4zM532 188h4v4h-4zM12 192h4v4h-4zM12 196h4v4h-4zM8 200h8v4h-8zM8 204h8v4h-8zM528 204h4v4h-4zM8 208h8v4h-8zM528 208h4v4h-4zM8 212h8v4h-8zM528 212h4v4h-4zM8 216h8v4h-8zM528 216h4v4h-4zM8 220h8v4h-8zM528 220h4v4h-4zM12 224h4v4h-4zM528 224h4v4h-4zM12 228h4v4h-4zM528 228h4v4h-4zM12 232h8v4h-8zM528 232h4v4h-4zM12 236h8v4h-8zM528 236h4v4h-4zM16 240h4v4h-4zM528 240h4v4h-4zM16 244h8v4h-8zM528 244h4v4h-4zM20 248h4v4h-4zM528 248h4v4h-4zM20 252h8v4h-8zM532 252h4v4h-4zM24 256h8v4h-8zM532 256h4v4h-4zM24 260h8v4h-8zM532 260h4v4h-4zM28 264h8v4h-8zM536 264h4v4h-4zM32 268h8v4h-8zM536 268h8v4h-8zM36 272h4v4h-4zM540 272h16v4h-16zM36 276h8v4h-8zM556 276h12v4h-12zM40 280h8v4h-8zM568 280h4v4h-4zM44 284h8v4h-8zM48 288h12v4h-12zM56 292h8v4h-8zM368 292h56v4h-56zM60 296h8v4h-8zM340 296h84v4h-84zM64 300h12v4h-12zM324 300h100v4h-100zM72 304h8v4h-8zM320 304h32v4h-32zM388 304h32v4h-32zM76 308h12v4h-12zM316 308h16v4h-16zM392 308h24v4h-24zM84 312h8v4h-8zM312 312h8v4h-8zM396 312h20v4h-20zM88 316h12v4h-12zM308 316h8v4h-8zM396 316h16v4h-16zM96 320h12v4h-12zM308 320h8v4h-8zM388 320h16v4h-16zM104 324h16v4h-16zM308 324h8v4h-8zM380 324h16v4h-16zM112 328h20v4h-20zM308 328h12v4h-12zM368 328h20v4h-20zM128 332h36v4h-36zM304 332h76v4h-76zM148 336h28v4h-28zM300 336h72v4h-72zM168 340h20v4h-20zM292 340h76v4h-76zM180 344h28v4h-28zM272 344h48v4h-48zM340 344h28v4h-28zM196 348h88v4h-88zM356 348h16v4h-16zM216 352h24v4h-24zM360 352h12v4h-12zM368 356h8v4h-8zM368 360h8v4h-8zM372 364h8v4h-8zM376 368h4v4h-4zM376 372h8v4h-8zM380 376h4v4h-4zM380 380h4v4h-4zM380 384h4v4h-4zM384 388h4v4h-4zM384 392h4v4h-4zM384 396h4v4h-4zM384 400h4v4h-4zM384 404h4v4h-4zM388 416h4v4h-4zM388 420h4v4h-4zM388 424h4v4h-4zM388 428h4v4h-4zM388 432h4v4h-4zM388 436h4v4h-4zM392 444h4v4h-4zM392 448h4v4h-4zM392 452h4v4h-4zM396 460h4v4h-4zM396 464h4v4h-4zM400 468h4v4h-4zM400 472h4v4h-4zM404 476h4v4h-4zM404 480h4v4h-4zM408 484h4v4h-4zM412 488h4v4h-4zM412 492h8v4h-8zM416 496h8v4h-8zM420 500h12v4h-12zM428 504h12v4h-12zM436 508h12v4h-12zM448 512h12v4h-12zM560 512h12v4h-12zM460 516h52v4h-52zM536 516h24v4h-24zM484 520h12v4h-12zM508 520h36v4h-36z"/>
<path fill="#c3f467" d="M348 0h72v4h-72zM328 4h36v4h-36zM408 4h28v4h-28zM316 8h20v4h-20zM428 8h16v4h-16zM304 12h16v4h-16zM440 12h16v4h-16zM296 16h16v4h-16zM452 16h4v4h-4zM288 20h16v4h-16zM456 20h4v4h-4zM284 24h12v4h-12zM460 24h32v4h-32zM276 28h12v4h-12zM460 28h36v4h-36zM272 32h8v4h-8zM488 32h12v4h-12zM264 36h12v4h-12zM496 36h4v4h-4zM260 40h8v4h-8zM496 40h8v4h-8zM252 44h12v4h-12zM500 44h8v4h-8zM248 48h12v4h-12zM504 48h8v4h-8zM240 52h16v4h-16zM508 52h4v4h-4zM232 56h16v4h-16zM508 56h8v4h-8zM224 60h20v4h-20zM512 60h8v4h-8zM216 64h20v4h-20zM512 64h8v4h-8zM200 68h28v4h-28zM516 68h8v4h-8zM176 72h44v4h-44zM516 72h8v4h-8zM148 76h52v4h-52zM520 76h8v4h-8zM124 80h48v4h-48zM520 80h8v4h-8zM112 84h28v4h-28zM524 84h4v4h-4zM100 88h20v4h-20zM524 88h8v4h-8zM92 92h16v4h-16zM528 92h4v4h-4zM84 96h16v4h-16zM528 96h4v4h-4zM80 100h12v4h-12zM528 100h8v4h-8zM72 104h12v4h-12zM528 104h8v4h-8zM68 108h8v4h-8zM532 108h4v4h-4zM64 112h8v4h-8zM536 112h8v4h-8zM60 116h8v4h-8zM540 116h4v4h-4zM56 120h8v4h-8zM536 120h4v4h-4zM52 124h8v4h-8zM532 124h4v4h-4zM48 128h8v4h-8zM532 128h4v4h-4zM44 132h8v4h-8zM532 132h4v4h-4zM40 136h8v4h-8zM40 140h4v4h-4zM36 144h8v4h-8zM32 148h8v4h-8zM32 152h4v4h-4zM28 156h8v4h-8zM28 160h4v4h-4zM24 164h8v4h-8zM24 168h8v4h-8zM24 172h4v4h-4zM528 172h4v4h-4zM20 176h8v4h-8zM528 176h4v4h-4zM20 180h4v4h-4zM528 180h4v4h-4zM20 184h4v4h-4zM528 184h4v4h-4zM16 188h8v4h-8zM528 188h4v4h-4zM16 192h8v4h-8zM528 192h4v4h-4zM16 196h8v4h-8zM528 196h4v4h-4zM16 200h4v4h-4zM528 200h4v4h-4zM16 204h4v4h-4zM16 208h4v4h-4zM16 212h4v4h-4zM524 212h4v4h-4zM16 216h4v4h-4zM524 216h4v4h-4zM16 220h4v4h-4zM524 220h4v4h-4zM16 224h4v4h-4zM524 224h4v4h-4zM16 228h8v4h-8zM524 228h4v4h-4zM20 232h4v4h-4zM524 232h4v4h-4zM20 236h8v4h-8zM524 236h4v4h-4zM20 240h8v4h-8zM524 240h4v4h-4zM24 244h4v4h-4zM524 244h4v4h-4zM24 248h8v4h-8zM524 248h4v4h-4zM28 252h8v4h-8zM528 252h4v4h-4zM32 256h4v4h-4zM528 256h4v4h-4zM32 260h8v4h-8zM528 260h4v4h-4zM36 264h8v4h-8zM440 264h12v4h-12zM528 264h8v4h-8zM40 268h4v4h-4zM432 268h24v4h-24zM532 268h4v4h-4zM40 272h8v4h-8zM424 272h32v4h-32zM536 272h4v4h-4zM44 276h8v4h-8zM408 276h48v4h-48zM540 276h16v4h-16zM48 280h8v4h-8zM388 280h68v4h-68zM552 280h16v4h-16zM52 284h8v4h-8zM360 284h96v4h-96zM564 284h8v4h-8zM60 288h8v4h-8zM332 288h120v4h-120zM64 292h8v4h-8zM320 292h48v4h-48zM424 292h28v4h-28zM68 296h12v4h-12zM316 296h24v4h-24zM424 296h24v4h-24zM76 300h8v4h-8zM312 300h12v4h-12zM424 300h20v4h-20zM80 304h12v4h-12zM312 304h8v4h-8zM420 304h20v4h-20zM88 308h8v4h-8zM308 308h8v4h-8zM416 308h20v4h-20zM92 312h12v4h-12zM304 312h8v4h-8zM416 312h16v4h-16zM100 316h12v4h-12zM304 316h4v4h-4zM412 316h12v4h-12zM108 320h16v4h-16zM300 320h8v4h-8zM404 320h12v4h-12zM120 324h20v4h-20zM300 324h8v4h-8zM396 324h12v4h-12zM132 328h36v4h-36zM296 328h12v4h-12zM388 328h12v4h-12zM164 332h16v4h-16zM288 332h16v4h-16zM380 332h12v4h-12zM176 336h20v4h-20zM276 336h24v4h-24zM372 336h12v4h-12zM188 340h104v4h-104zM368 340h12v4h-12zM208 344h64v4h-64zM368 344h12v4h-12zM372 348h8v4h-8zM372 352h12v4h-12zM376 356h8v4h-8zM376 360h8v4h-8zM380 364h4v4h-4zM380 368h8v4h-8zM384 372h4v4h-4zM384 376h4v4h-4zM384 380h4v4h-4zM384 384h4v4h-4zM388 392h4v4h-4zM388 396h4v4h-4zM388 400h4v4h-4zM388 404h4v4h-4zM388 408h4v4h-4zM388 412h4v4h-4zM392 428h4v4h-4zM392 432h4v4h-4zM392 436h4v4h-4zM392 440h4v4h-4zM396 448h4v4h-4zM396 452h4v4h-4zM396 456h4v4h-4zM400 460h4v4h-4zM400 464h4v4h-4zM404 468h4v4h-4zM404 472h4v4h-4zM408 476h4v4h-4zM408 480h4v4h-4zM412 484h4v4h-4zM416 488h4v4h-4zM420 492h8v4h-8zM424 496h8v4h-8zM432 500h8v4h-8zM440 504h12v4h-12zM568 504h4v4h-4zM448 508h16v4h-16zM556 508h16v4h-16zM460 512h56v4h-56zM532 512h28v4h-28zM512 516h24v4h-24z"/>
<path fill="#c8f266" d="M364 4h44v4h-44zM336 8h92v4h-92zM320 12h24v4h-24zM420 12h20v4h-20zM312 16h16v4h-16zM436 16h16v4h-16zM304 20h12v4h-12zM444 20h12v4h-12zM296 24h12v4h-12zM456 24h4v4h-4zM288 28h12v4h-12zM456 28h4v4h-4zM280 32h12v4h-12zM460 32h28v4h-28zM276 36h12v4h-12zM480 36h16v4h-16zM268 40h12v4h-12zM488 40h8v4h-8zM264 44h12v4h-12zM492 44h8v4h-8zM260 48h8v4h-8zM496 48h8v4h-8zM256 52h8v4h-8zM500 52h8v4h-8zM248 56h12v4h-12zM504 56h4v4h-4zM244 60h12v4h-12zM504 60h8v4h-8zM236 64h16v4h-16zM508 64h4v4h-4zM228 68h16v4h-16zM508 68h8v4h-8zM220 72h20v4h-20zM512 72h4v4h-4zM200 76h32v4h-32zM512 76h8v4h-8zM172 80h48v4h-48zM516 80h4v4h-4zM140 84h52v4h-52zM516 84h8v4h-8zM120 88h44v4h-44zM520 88h4v4h-4zM108 92h20v4h-20zM520 92h8v4h-8zM100 96h16v4h-16zM520 96h8v4h-8zM92 100h12v4h-12zM524 100h4v4h-4zM84 104h12v4h-12zM524 104h4v4h-4zM76 108h12v4h-12zM524 108h8v4h-8zM72 112h12v4h-12zM532 112h4v4h-4zM68 116h8v4h-8zM532 116h8v4h-8zM64 120h8v4h-8zM532 120h4v4h-4zM60 124h8v4h-8zM56 128h8v4h-8zM528 128h4v4h-4zM52 132h8v4h-8zM528 132h4v4h-4zM48 136h8v4h-8zM528 136h4v4h-4zM44 140h8v4h-8zM528 140h4v4h-4zM44 144h4v4h-4zM528 144h4v4h-4zM40 148h8v4h-8zM528 148h4v4h-4zM36 152h8v4h-8zM528 152h4v4h-4zM36 156h8v4h-8zM528 156h4v4h-4zM32 160h8v4h-8zM528 160h4v4h-4zM32 164h4v4h-4zM528 164h4v4h-4zM32 168h4v4h-4zM528 168h4v4h-4zM28 172h8v4h-8zM28 176h4v4h-4zM24 180h8v4h-8zM24 184h8v4h-8zM524 184h4v4h-4zM24 188h4v4h-4zM524 188h4v4h-4zM24 192h4v4h-4zM524 192h4v4h-4zM24 196h4v4h-4zM524 196h4v4h-4zM20 200h8v4h-8zM524 200h4v4h-4zM20 204h8v4h-8zM524 204h4v4h-4zM20 208h4v4h-4zM524 208h4v4h-4zM20 212h4v4h-4zM20 216h4v4h-4zM520 216h4v4h-4zM20 220h4v4h-4zM520 220h4v4h-4zM20 224h8v4h-8zM520 224h4v4h-4zM24 228h4v4h-4zM520 228h4v4h-4zM24 232h8v4h-8zM520 232h4v4h-4zM28 236h4v4h-4zM520 236h4v4h-4zM28 240h4v4h-4zM520 240h4v4h-4zM28 244h8v4h-8zM520 244h4v4h-4zM32 248h8v4h-8zM520 248h4v4h-4zM36 252h4v4h-4zM444 252h12v4h-12zM524 252h4v4h-4zM36 256h8v4h-8zM436 256h24v4h-24zM524 256h4v4h-4zM40 260h8v4h-8zM428 260h32v4h-32zM524 260h4v4h-4zM44 264h4v4h-4zM420 264h20v4h-20zM452 264h8v4h-8zM524 264h4v4h-4zM44 268h8v4h-8zM408 268h24v4h-24zM456 268h8v4h-8zM528 268h4v4h-4zM48 272h8v4h-8zM392 272h32v4h-32zM456 272h8v4h-8zM528 272h8v4h-8zM52 276h8v4h-8zM360 276h48v4h-48zM456 276h8v4h-8zM532 276h8v4h-8zM56 280h8v4h-8zM332 280h56v4h-56zM456 280h8v4h-8zM536 280h16v4h-16zM60 284h12v4h-12zM320 284h40v4h-40zM456 284h4v4h-4zM548 284h16v4h-16zM68 288h8v4h-8zM316 288h16v4h-16zM452 288h8v4h-8zM560 288h12v4h-12zM72 292h12v4h-12zM312 292h8v4h-8zM452 292h8v4h-8zM80 296h8v4h-8zM308 296h8v4h-8zM448 296h8v4h-8zM84 300h8v4h-8zM308 300h4v4h-4zM444 300h8v4h-8zM92 304h8v4h-8zM304 304h8v4h-8zM440 304h12v4h-12zM96 308h12v4h-12zM300 308h8v4h-8zM436 308h12v4h-12zM104 312h12v4h-12zM300 312h4v4h-4zM432 312h12v4h-12zM112 316h16v4h-16zM296 316h8v4h-8zM424 316h12v4h-12zM124 320h24v4h-24zM292 320h8v4h-8zM416 320h12v4h-12zM140 324h32v4h-32zM288 324h12v4h-12zM408 324h12v4h-12zM168 328h16v4h-16zM276 328h20v4h-20zM400 328h12v4h-12zM180 332h28v4h-28zM256 332h32v4h-32zM392 332h12v4h-12zM196 336h80v4h-80zM384 336h12v4h-12zM380 340h12v4h-12zM380 344h12v4h-12zM380 348h12v4h-12zM384 352h8v4h-8zM384 356h8v4h-8zM384 360h8v4h-8zM384 364h8v4h-8zM388 368h4v4h-4zM388 372h4v4h-4zM388 376h4v4h-4zM388 380h4v4h-4zM388 384h4v4h-4zM388 388h4v4h-4zM392 400h4v4h-4zM392 404h4v4h-4zM392 408h4v4h-4zM392 412h4v4h-4zM392 416h4v4h-4zM392 420h4v4h-4zM392 424h4v4h-4zM396 436h4v4h-4zM396 440h4v4h-4zM396 444h4v4h-4zM400 452h4v4h-4zM400 456h4v4h-4zM404 464h4v4h-4zM408 472h4v4h-4zM412 476h4v4h-4zM412 480h8v4h-8zM416 484h8v4h-8zM420 488h8v4h-8zM428 492h8v4h-8zM432 496h12v4h-12zM440 500h12v4h-12zM564 500h8v4h-8zM452 504h12v4h-12zM552 504h16v4h-16zM464 508h52v4h-52zM532 508h24v4h-24zM516 512h16v4h-16z"/>
<path fill="#cdf065" d="M344 12h76v4h-76zM328 16h20v4h-20zM420 16h16v4h-16zM316 20h16v4h-16zM432 20h12v4h-12zM308 24h12v4h-12zM444 24h12v4h-12zM300 28h12v4h-12zM452 28h4v4h-4zM292 32h12v4h-12zM456 32h4v4h-4zM288 36h8v4h-8zM460 36h20v4h-20zM280 40h12v4h-12zM468 40h20v4h-20zM276 44h8v4h-8zM480 44h12v4h-12zM268 48h12v4h-12zM488 48h8v4h-8zM264 52h12v4h-12zM492 52h8v4h-8zM260 56h12v4h-12zM496 56h8v4h-8zM256 60h8v4h-8zM496 60h8v4h-8zM252 64h8v4h-8zM500 64h8v4h-8zM244 68h12v4h-12zM504 68h4v4h-4zM240 72h12v4h-12zM504 72h8v4h-8zM232 76h16v4h-16zM508 76h4v4h-4zM220 80h24v4h-24zM508 80h8v4h-8zM192 84h44v4h-44zM512 84h4v4h-4zM164 88h60v4h-60zM512 88h8v4h-8zM128 92h52v4h-52zM512 92h8v4h-8zM116 96h20v4h-20zM516 96h4v4h-4zM104 100h16v4h-16zM516 100h8v4h-8zM96 104h12v4h-12zM516 104h8v4h-8zM88 108h12v4h-12zM520 108h4v4h-4zM84 112h8v4h-8zM524 112h8v4h-8zM76 116h8v4h-8zM528 116h4v4h-4zM72 120h8v4h-8zM528 120h4v4h-4zM68 124h4v4h-4zM528 124h4v4h-4zM64 128h4v4h-4zM524 128h4v4h-4zM60 132h4v4h-4zM524 132h4v4h-4zM56 136h4v4h-4zM524 136h4v4h-4zM52 140h8v4h-8zM524 140h4v4h-4zM48 144h8v4h-8zM524 144h4v4h-4zM48 148h4v4h-4zM524 148h4v4h-4zM44 152h4v4h-4zM524 152h4v4h-4zM44 156h4v4h-4zM524 156h4v4h-4zM40 160h4v4h-4zM524 160h4v4h-4zM36 164h8v4h-8zM524 164h4v4h-4zM36 168h4v4h-4zM524 168h4v4h-4zM36 172h4v4h-4zM524 172h4v4h-4zM32 176h4v4h-4zM524 176h4v4h-4zM32 180h4v4h-4zM524 180h4v4h-4zM32 184h4v4h-4zM28 188h8v4h-8zM520 188h4v4h-4zM28 192h4v4h-4zM520 192h4v4h-4zM28 196h4v4h-4zM520 196h4v4h-4zM28 200h4v4h-4zM520 200h4v4h-4zM28 204h4v4h-4zM520 204h4v4h-4zM24 208h8v4h-8zM520 208h4v4h-4zM24 212h4v4h-4zM520 212h4v4h-4zM24 216h4v4h-4zM516 216h4v4h-4zM24 220h8v4h-8zM516 220h4v4h-4zM28 224h4v4h-4zM516 224h4v4h-4zM28 228h4v4h-4zM516 228h4v4h-4zM32 232h4v4h-4zM512 232h8v4h-8zM32 236h4v4h-4zM512 236h8v4h-8zM32 240h8v4h-8zM512 240h8v4h-8zM36 244h4v4h-4zM512 244h8v4h-8zM40 248h4v4h-4zM440 248h20v4h-20zM512 248h8v4h-8zM40 252h4v4h-4zM432 252h12v4h-12zM456 252h8v4h-8zM516 252h8v4h-8zM44 256h4v4h-4zM424 256h12v4h-12zM460 256h8v4h-8zM516 256h8v4h-8zM48 260h4v4h-4zM412 260h16v4h-16zM460 260h8v4h-8zM520 260h4v4h-4zM48 264h8v4h-8zM400 264h20v4h-20zM460 264h8v4h-8zM520 264h4v4h-4zM52 268h8v4h-8zM376 268h32v4h-32zM464 268h4v4h-4zM520 268h8v4h-8zM56 272h8v4h-8zM328 272h64v4h-64zM464 272h4v4h-4zM524 272h4v4h-4zM60 276h8v4h-8zM316 276h44v4h-44zM464 276h4v4h-4zM524 276h8v4h-8zM64 280h8v4h-8zM312 280h20v4h-20zM464 280h4v4h-4zM528 280h8v4h-8zM72 284h4v4h-4zM312 284h8v4h-8zM460 284h8v4h-8zM536 284h12v4h-12zM76 288h8v4h-8zM308 288h8v4h-8zM460 288h8v4h-8zM544 288h16v4h-16zM84 292h4v4h-4zM304 292h8v4h-8zM460 292h4v4h-4zM556 292h16v4h-16zM88 296h8v4h-8zM304 296h4v4h-4zM456 296h8v4h-8zM564 296h8v4h-8zM92 300h8v4h-8zM300 300h8v4h-8zM452 300h8v4h-8zM568 300h4v4h-4zM100 304h8v4h-8zM296 304h8v4h-8zM452 304h4v4h-4zM108 308h8v4h-8zM292 308h8v4h-8zM448 308h4v4h-4zM116 312h12v4h-12zM288 312h12v4h-12zM444 312h4v4h-4zM128 316h20v4h-20zM284 316h12v4h-12zM436 316h8v4h-8zM148 320h24v4h-24zM276 320h16v4h-16zM428 320h8v4h-8zM172 324h16v4h-16zM264 324h24v4h-24zM420 324h8v4h-8zM184 328h92v4h-92zM412 328h8v4h-8zM208 332h48v4h-48zM404 332h8v4h-8zM396 336h12v4h-12zM392 340h8v4h-8zM392 344h8v4h-8zM392 348h8v4h-8zM392 352h4v4h-4zM392 356h4v4h-4zM392 360h4v4h-4zM392 364h4v4h-4zM392 368h4v4h-4zM392 372h4v4h-4zM392 376h4v4h-4zM392 380h4v4h-4zM392 384h4v4h-4zM392 388h4v4h-4zM392 392h4v4h-4zM392 396h4v4h-4zM396 408h4v4h-4zM396 412h4v4h-4zM396 416h4v4h-4zM396 420h4v4h-4zM396 424h4v4h-4zM396 428h4v4h-4zM396 432h4v4h-4zM400 440h4v4h-4zM400 444h4v4h-4zM400 448h4v4h-4zM404 456h4v4h-4zM404 460h4v4h-4zM408 464h4v4h-4zM408 468h4v4h-4zM412 472h4v4h-4zM416 476h4v4h-4zM420 480h4v4h-4zM424 484h4v4h-4zM428 488h8v4h-8zM436 492h8v4h-8zM444 496h8v4h-8zM564 496h8v4h-8zM452 500h12v4h-12zM556 500h8v4h-8zM464 504h44v4h-44zM536 504h16v4h-16zM516 508h16v4h-16z"/>
<path fill="#d2ee64" d="M348 16h72v4h-72zM332 20h20v4h-20zM416 20h16v4h-16zM320 24h12v4h-12zM432 24h12v4h-12zM312 28h12v4h-12zM440 28h12v4h-12zM304 32h8v4h-8zM448 32h8v4h-8zM296 36h8v4h-8zM456 36h4v4h-4zM292 40h8v4h-8zM460 40h8v4h-8zM284 44h8v4h-8zM460 44h20v4h-20zM280 48h8v4h-8zM472 48h16v4h-16zM276 52h8v4h-8zM484 52h8v4h-8zM272 56h8v4h-8zM488 56h8v4h-8zM264 60h12v4h-12zM492 60h4v4h-4zM260 64h12v4h-12zM496 64h4v4h-4zM256 68h12v4h-12zM496 68h8v4h-8zM252 72h12v4h-12zM500 72h4v4h-4zM248 76h12v4h-12zM500 76h8v4h-8zM244 80h12v4h-12zM504 80h4v4h-4zM236 84h16v4h-16zM504 84h8v4h-8zM224 88h20v4h-20zM508 88h4v4h-4zM180 92h56v4h-56zM508 92h4v4h-4zM136 96h92v4h-92zM508 96h8v4h-8zM120 100h20v4h-20zM512 100h4v4h-4zM108 104h12v4h-12zM512 104h4v4h-4zM100 108h8v4h-8zM512 108h8v4h-8zM92 112h8v4h-8zM520 112h4v4h-4zM84 116h8v4h-8zM524 116h4v4h-4zM80 120h8v4h-8zM524 120h4v4h-4zM72 124h8v4h-8zM524 124h4v4h-4zM68 128h8v4h-8zM64 132h8v4h-8zM60 136h8v4h-8zM60 140h4v4h-4zM56 144h4v4h-4zM52 148h4v4h-4zM48 152h8v4h-8zM48 156h4v4h-4zM520 156h4v4h-4zM44 160h8v4h-8zM520 160h4v4h-4zM44 164h4v4h-4zM520 164h4v4h-4zM40 168h8v4h-8zM520 168h4v4h-4zM40 172h4v4h-4zM520 172h4v4h-4zM36 176h8v4h-8zM520 176h4v4h-4zM36 180h4v4h-4zM520 180h4v4h-4zM36 184h4v4h-4zM520 184h4v4h-4zM36 188h4v4h-4zM32 192h4v4h-4zM516 192h4v4h-4zM32 196h4v4h-4zM516 196h4v4h-4zM32 200h4v4h-4zM516 200h4v4h-4zM32 204h4v4h-4zM512 204h8v4h-8zM32 208h4v4h-4zM512 208h8v4h-8zM28 212h8v4h-8zM512 212h8v4h-8zM28 216h8v4h-8zM508 216h8v4h-8zM32 220h4v4h-4zM508 220h8v4h-8zM32 224h4v4h-4zM508 224h8v4h-8zM32 228h8v4h-8zM504 228h12v4h-12zM36 232h4v4h-4zM504 232h8v4h-8zM36 236h4v4h-4zM500 236h12v4h-12zM40 240h4v4h-4zM500 240h12v4h-12zM40 244h4v4h-4zM440 244h28v4h-28zM500 244h12v4h-12zM44 248h4v4h-4zM428 248h12v4h-12zM460 248h12v4h-12zM496 248h16v4h-16zM44 252h8v4h-8zM420 252h12v4h-12zM464 252h8v4h-8zM500 252h16v4h-16zM48 256h4v4h-4zM408 256h16v4h-16zM468 256h8v4h-8zM500 256h16v4h-16zM52 260h4v4h-4zM392 260h20v4h-20zM468 260h8v4h-8zM500 260h20v4h-20zM56 264h4v4h-4zM360 264h40v4h-40zM468 264h8v4h-8zM500 264h20v4h-20zM60 268h4v4h-4zM316 268h60v4h-60zM468 268h8v4h-8zM504 268h16v4h-16zM64 272h4v4h-4zM312 272h16v4h-16zM468 272h8v4h-8zM508 272h16v4h-16zM68 276h4v4h-4zM308 276h8v4h-8zM468 276h8v4h-8zM516 276h8v4h-8zM72 280h8v4h-8zM308 280h4v4h-4zM468 280h8v4h-8zM520 280h8v4h-8zM76 284h8v4h-8zM304 284h8v4h-8zM468 284h8v4h-8zM524 284h12v4h-12zM84 288h8v4h-8zM300 288h8v4h-8zM468 288h4v4h-4zM528 288h16v4h-16zM88 292h8v4h-8zM300 292h4v4h-4zM464 292h8v4h-8zM540 292h16v4h-16zM96 296h4v4h-4zM296 296h8v4h-8zM464 296h4v4h-4zM552 296h12v4h-12zM100 300h8v4h-8zM292 300h8v4h-8zM460 300h4v4h-4zM556 300h12v4h-12zM108 304h8v4h-8zM288 304h8v4h-8zM456 304h8v4h-8zM564 304h8v4h-8zM116 308h12v4h-12zM280 308h12v4h-12zM452 308h8v4h-8zM568 308h4v4h-4zM128 312h16v4h-16zM272 312h16v4h-16zM448 312h8v4h-8zM148 316h24v4h-24zM264 316h20v4h-20zM444 316h8v4h-8zM172 320h20v4h-20zM248 320h28v4h-28zM436 320h8v4h-8zM188 324h76v4h-76zM428 324h8v4h-8zM420 328h8v4h-8zM412 332h8v4h-8zM408 336h4v4h-4zM400 340h8v4h-8zM400 344h8v4h-8zM400 348h4v4h-4zM396 352h8v4h-8zM396 356h8v4h-8zM396 360h4v4h-4zM396 364h4v4h-4zM396 368h4v4h-4zM396 372h4v4h-4zM396 376h4v4h-4zM396 380h4v4h-4zM396 384h4v4h-4zM396 388h4v4h-4zM396 392h4v4h-4zM396 396h4v4h-4zM396 400h4v4h-4zM396 404h4v4h-4zM400 424h4v4h-4zM400 428h4v4h-4zM400 432h4v4h-4zM400 436h4v4h-4zM404 444h4v4h-4zM404 448h4v4h-4zM404 452h4v4h-4zM408 456h4v4h-4zM408 460h4v4h-4zM412 464h4v4h-4zM412 468h4v4h-4zM416 472h4v4h-4zM420 476h4v4h-4zM424 480h8v4h-8zM428 484h8v4h-8zM436 488h8v4h-8zM444 492h8v4h-8zM564 492h8v4h-8zM452 496h12v4h-12zM556 496h8v4h-8zM464 500h16v4h-16zM540 500h16v4h-16zM508 504h28v4h-28z"/>
<path fill="#d6ec64" d="M352 20h64v4h-64zM332 24h20v4h-20zM412 24h20v4h-20zM324 28h12v4h-12zM428 28h12v4h-12zM312 32h12v4h-12zM440 32h8v4h-8zM304 36h12v4h-12zM448 36h8v4h-8zM300 40h8v4h-8zM456 40h4v4h-4zM292 44h8v4h-8zM456 44h4v4h-4zM288 48h8v4h-8zM460 48h12v4h-12zM284 52h8v4h-8zM468 52h16v4h-16zM280 56h4v4h-4zM476 56h12v4h-12zM276 60h4v4h-4zM484 60h8v4h-8zM272 64h4v4h-4zM488 64h8v4h-8zM268 68h4v4h-4zM492 68h4v4h-4zM264 72h8v4h-8zM492 72h8v4h-8zM260 76h8v4h-8zM496 76h4v4h-4zM256 80h8v4h-8zM496 80h8v4h-8zM252 84h8v4h-8zM500 84h4v4h-4zM244 88h12v4h-12zM500 88h8v4h-8zM236 92h16v4h-16zM504 92h4v4h-4zM228 96h20v4h-20zM504 96h4v4h-4zM140 100h100v4h-100zM504 100h8v4h-8zM120 104h28v4h-28zM220 104h8v4h-8zM508 104h4v4h-4zM108 108h16v4h-16zM508 108h4v4h-4zM100 112h12v4h-12zM512 112h8v4h-8zM92 116h12v4h-12zM516 116h8v4h-8zM88 120h8v4h-8zM520 120h4v4h-4zM80 124h8v4h-8zM520 124h4v4h-4zM76 128h8v4h-8zM520 128h4v4h-4zM72 132h8v4h-8zM520 132h4v4h-4zM68 136h8v4h-8zM520 136h4v4h-4zM64 140h8v4h-8zM520 140h4v4h-4zM60 144h8v4h-8zM520 144h4v4h-4zM56 148h8v4h-8zM520 148h4v4h-4zM56 152h4v4h-4zM520 152h4v4h-4zM52 156h8v4h-8zM52 160h4v4h-4zM516 160h4v4h-4zM48 164h4v4h-4zM516 164h4v4h-4zM48 168h4v4h-4zM516 168h4v4h-4zM44 172h4v4h-4zM516 172h4v4h-4zM44 176h4v4h-4zM516 176h4v4h-4zM40 180h8v4h-8zM516 180h4v4h-4zM40 184h4v4h-4zM512 184h8v4h-8zM40 188h4v4h-4zM512 188h8v4h-8zM36 192h8v4h-8zM512 192h4v4h-4zM36 196h4v4h-4zM508 196h8v4h-8zM36 200h4v4h-4zM508 200h8v4h-8zM36 204h4v4h-4zM508 204h4v4h-4zM36 208h4v4h-4zM504 208h8v4h-8zM36 212h4v4h-4zM504 212h8v4h-8zM36 216h4v4h-4zM500 216h8v4h-8zM36 220h4v4h-4zM500 220h8v4h-8zM36 224h4v4h-4zM496 224h12v4h-12zM40 228h4v4h-4zM496 228h8v4h-8zM40 232h4v4h-4zM492 232h12v4h-12zM40 236h8v4h-8zM456 236h8v4h-8zM492 236h8v4h-8zM44 240h4v4h-4zM444 240h56v4h-56zM44 244h8v4h-8zM432 244h8v4h-8zM468 244h32v4h-32zM48 248h4v4h-4zM420 248h8v4h-8zM472 248h24v4h-24zM52 252h4v4h-4zM408 252h12v4h-12zM472 252h28v4h-28zM52 256h8v4h-8zM392 256h16v4h-16zM476 256h24v4h-24zM56 260h8v4h-8zM316 260h76v4h-76zM476 260h24v4h-24zM60 264h4v4h-4zM312 264h48v4h-48zM476 264h24v4h-24zM64 268h4v4h-4zM308 268h8v4h-8zM476 268h28v4h-28zM68 272h8v4h-8zM304 272h8v4h-8zM476 272h32v4h-32zM72 276h8v4h-8zM304 276h4v4h-4zM476 276h40v4h-40zM80 280h4v4h-4zM300 280h8v4h-8zM476 280h44v4h-44zM84 284h8v4h-8zM296 284h8v4h-8zM476 284h48v4h-48zM92 288h4v4h-4zM296 288h4v4h-4zM472 288h56v4h-56zM96 292h4v4h-4zM292 292h8v4h-8zM472 292h12v4h-12zM516 292h24v4h-24zM100 296h8v4h-8zM288 296h8v4h-8zM468 296h8v4h-8zM532 296h20v4h-20zM108 300h8v4h-8zM280 300h12v4h-12zM464 300h8v4h-8zM544 300h12v4h-12zM116 304h12v4h-12zM272 304h16v4h-16zM464 304h4v4h-4zM552 304h12v4h-12zM128 308h12v4h-12zM264 308h16v4h-16zM460 308h4v4h-4zM560 308h8v4h-8zM144 312h28v4h-28zM256 312h16v4h-16zM456 312h4v4h-4zM568 312h4v4h-4zM172 316h20v4h-20zM232 316h32v4h-32zM452 316h4v4h-4zM192 320h56v4h-56zM444 320h4v4h-4zM436 324h8v4h-8zM428 328h8v4h-8zM420 332h8v4h-8zM412 336h8v4h-8zM408 340h8v4h-8zM408 344h4v4h-4zM404 348h8v4h-8zM404 352h4v4h-4zM404 356h4v4h-4zM400 360h8v4h-8zM400 364h4v4h-4zM400 368h4v4h-4zM400 372h4v4h-4zM400 376h4v4h-4zM400 380h4v4h-4zM400 384h4v4h-4zM400 388h4v4h-4zM400 392h4v4h-4zM400 396h4v4h-4zM400 400h4v4h-4zM400 404h4v4h-4zM400 408h4v4h-4zM400 412h4v4h-4zM400 416h4v4h-4zM400 420h4v4h-4zM404 432h4v4h-4zM404 436h4v4h-4zM404 440h4v4h-4zM408 448h4v4h-4zM408 452h4v4h-4zM412 456h4v4h-4zM412 460h4v4h-4zM416 464h4v4h-4zM416 468h8v4h-8zM420 472h8v4h-8zM424 476h8v4h-8zM432 480h4v4h-4zM436 484h8v4h-8zM444 488h8v4h-8zM564 488h8v4h-8zM452 492h8v4h-8zM556 492h8v4h-8zM464 496h12v4h-12zM540 496h16v4h-16zM480 500h60v4h-60z"/>
<path fill="#dbe963" d="M352 24h60v4h-60zM336 28h16v4h-16zM416 28h12v4h-12zM324 32h12v4h-12zM428 32h12v4h-12zM316 36h8v4h-8zM440 36h8v4h-8zM308 40h8v4h-8zM448 40h8v4h-8zM300 44h8v4h-8zM296 48h8v4h-8zM456 48h4v4h-4zM292 52h4v4h-4zM460 52h8v4h-8zM284 56h8v4h-8zM464 56h12v4h-12zM280 60h8v4h-8zM472 60h12v4h-12zM276 64h8v4h-8zM476 64h12v4h-12zM272 68h8v4h-8zM484 68h8v4h-8zM272 72h4v4h-4zM488 72h4v4h-4zM268 76h4v4h-4zM488 76h8v4h-8zM264 80h8v4h-8zM492 80h4v4h-4zM260 84h8v4h-8zM496 84h4v4h-4zM256 88h8v4h-8zM496 88h4v4h-4zM252 92h8v4h-8zM496 92h8v4h-8zM248 96h8v4h-8zM500 96h4v4h-4zM240 100h16v4h-16zM500 100h4v4h-4zM148 104h72v4h-72zM228 104h24v4h-24zM504 104h4v4h-4zM124 108h24v4h-24zM200 108h44v4h-44zM504 108h4v4h-4zM112 112h12v4h-12zM508 112h4v4h-4zM104 116h8v4h-8zM512 116h4v4h-4zM96 120h8v4h-8zM512 120h8v4h-8zM88 124h8v4h-8zM512 124h8v4h-8zM84 128h4v4h-4zM516 128h4v4h-4zM80 132h4v4h-4zM516 132h4v4h-4zM76 136h4v4h-4zM516 136h4v4h-4zM72 140h4v4h-4zM516 140h4v4h-4zM68 144h4v4h-4zM516 144h4v4h-4zM64 148h4v4h-4zM516 148h4v4h-4zM60 152h4v4h-4zM516 152h4v4h-4zM60 156h4v4h-4zM512 156h8v4h-8zM56 160h4v4h-4zM512 160h4v4h-4zM52 164h4v4h-4zM512 164h4v4h-4zM52 168h4v4h-4zM512 168h4v4h-4zM48 172h4v4h-4zM512 172h4v4h-4zM48 176h4v4h-4zM508 176h8v4h-8zM508 180h8v4h-8zM44 184h4v4h-4zM508 184h4v4h-4zM44 188h4v4h-4zM504 188h8v4h-8zM504 192h8v4h-8zM40 196h4v4h-4zM504 196h4v4h-4zM40 200h4v4h-4zM500 200h8v4h-8zM40 204h4v4h-4zM500 204h8v4h-8zM40 208h4v4h-4zM496 208h8v4h-8zM40 212h4v4h-4zM496 212h8v4h-8zM40 216h4v4h-4zM492 216h8v4h-8zM40 220h4v4h-4zM488 220h12v4h-12zM40 224h4v4h-4zM484 224h12v4h-12zM44 228h4v4h-4zM476 228h20v4h-20zM44 232h4v4h-4zM456 232h36v4h-36zM444 236h12v4h-12zM464 236h28v4h-28zM48 240h4v4h-4zM436 240h8v4h-8zM52 244h4v4h-4zM424 244h8v4h-8zM52 248h4v4h-4zM412 248h8v4h-8zM56 252h4v4h-4zM320 252h4v4h-4zM392 252h16v4h-16zM60 256h4v4h-4zM312 256h80v4h-80zM64 260h4v4h-4zM308 260h8v4h-8zM64 264h8v4h-8zM304 264h8v4h-8zM68 268h8v4h-8zM300 268h8v4h-8zM76 272h4v4h-4zM300 272h4v4h-4zM80 276h4v4h-4zM296 276h8v4h-8zM84 280h4v4h-4zM292 280h8v4h-8zM92 284h4v4h-4zM288 284h8v4h-8zM96 288h4v4h-4zM284 288h12v4h-12zM100 292h8v4h-8zM276 292h16v4h-16zM484 292h32v4h-32zM108 296h8v4h-8zM272 296h16v4h-16zM476 296h56v4h-56zM116 300h8v4h-8zM264 300h16v4h-16zM472 300h16v4h-16zM520 300h24v4h-24zM128 304h8v4h-8zM256 304h16v4h-16zM468 304h8v4h-8zM536 304h16v4h-16zM140 308h28v4h-28zM248 308h16v4h-16zM464 308h4v4h-4zM548 308h12v4h-12zM172 312h16v4h-16zM228 312h28v4h-28zM460 312h4v4h-4zM556 312h12v4h-12zM192 316h40v4h-40zM456 316h4v4h-4zM564 316h8v4h-8zM448 320h8v4h-8zM444 324h4v4h-4zM436 328h4v4h-4zM428 332h4v4h-4zM420 336h8v4h-8zM416 340h4v4h-4zM412 344h8v4h-8zM412 348h4v4h-4zM408 352h8v4h-8zM408 356h4v4h-4zM408 360h4v4h-4zM404 364h4v4h-4zM404 368h4v4h-4zM404 372h4v4h-4zM404 376h4v4h-4zM404 380h4v4h-4zM404 416h4v4h-4zM404 420h4v4h-4zM404 424h4v4h-4zM404 428h4v4h-4zM408 440h4v4h-4zM408 444h4v4h-4zM412 452h4v4h-4zM416 460h4v4h-4zM420 464h4v4h-4zM424 468h4v4h-4zM428 472h4v4h-4zM432 476h4v4h-4zM436 480h8v4h-8zM444 484h4v4h-4zM568 484h4v4h-4zM452 488h8v4h-8zM560 488h4v4h-4zM460 492h12v4h-12zM548 492h8v4h-8zM476 496h64v4h-64z"/>
<path fill="#dee662" d="M352 28h64v4h-64zM336 32h12v4h-12zM420 32h8v4h-8zM324 36h8v4h-8zM432 36h8v4h-8zM316 40h8v4h-8zM440 40h8v4h-8zM308 44h8v4h-8zM448 44h8v4h-8zM304 48h4v4h-4zM296 52h8v4h-8zM456 52h4v4h-4zM292 56h8v4h-8zM460 56h4v4h-4zM288 60h4v4h-4zM464 60h8v4h-8zM284 64h4v4h-4zM468 64h8v4h-8zM280 68h4v4h-4zM476 68h8v4h-8zM276 72h8v4h-8zM480 72h8v4h-8zM272 76h8v4h-8zM484 76h4v4h-4zM272 80h4v4h-4zM488 80h4v4h-4zM268 84h4v4h-4zM488 84h8v4h-8zM264 88h8v4h-8zM492 88h4v4h-4zM260 92h8v4h-8zM492 92h4v4h-4zM256 96h8v4h-8zM496 96h4v4h-4zM256 100h8v4h-8zM496 100h4v4h-4zM252 104h8v4h-8zM496 104h8v4h-8zM148 108h52v4h-52zM244 108h12v4h-12zM500 108h4v4h-4zM124 112h16v4h-16zM200 112h52v4h-52zM504 112h4v4h-4zM112 116h8v4h-8zM216 116h32v4h-32zM508 116h4v4h-4zM104 120h8v4h-8zM508 120h4v4h-4zM96 124h8v4h-8zM508 124h4v4h-4zM88 128h8v4h-8zM508 128h8v4h-8zM84 132h4v4h-4zM508 132h8v4h-8zM80 136h4v4h-4zM512 136h4v4h-4zM76 140h4v4h-4zM512 140h4v4h-4zM72 144h4v4h-4zM512 144h4v4h-4zM68 148h4v4h-4zM508 148h8v4h-8zM64 152h4v4h-4zM508 152h8v4h-8zM64 156h4v4h-4zM508 156h4v4h-4zM60 160h4v4h-4zM508 160h4v4h-4zM56 164h4v4h-4zM508 164h4v4h-4zM56 168h4v4h-4zM508 168h4v4h-4zM52 172h4v4h-4zM504 172h8v4h-8zM52 176h4v4h-4zM504 176h4v4h-4zM48 180h4v4h-4zM504 180h4v4h-4zM48 184h4v4h-4zM500 184h8v4h-8zM48 188h4v4h-4zM500 188h4v4h-4zM44 192h4v4h-4zM500 192h4v4h-4zM44 196h4v4h-4zM496 196h8v4h-8zM44 200h4v4h-4zM496 200h4v4h-4zM44 204h4v4h-4zM492 204h8v4h-8zM44 208h4v4h-4zM492 208h4v4h-4zM488 212h8v4h-8zM480 216h12v4h-12zM44 220h4v4h-4zM472 220h16v4h-16zM44 224h4v4h-4zM464 224h20v4h-20zM456 228h20v4h-20zM48 232h4v4h-4zM448 232h8v4h-8zM48 236h4v4h-4zM440 236h4v4h-4zM52 240h4v4h-4zM428 240h8v4h-8zM56 244h4v4h-4zM416 244h8v4h-8zM56 248h4v4h-4zM396 248h16v4h-16zM60 252h4v4h-4zM308 252h12v4h-12zM324 252h68v4h-68zM64 256h4v4h-4zM304 256h8v4h-8zM68 260h4v4h-4zM300 260h8v4h-8zM72 264h4v4h-4zM296 264h8v4h-8zM76 268h4v4h-4zM292 268h8v4h-8zM80 272h4v4h-4zM292 272h8v4h-8zM84 276h4v4h-4zM288 276h8v4h-8zM88 280h8v4h-8zM280 280h12v4h-12zM96 284h4v4h-4zM276 284h12v4h-12zM100 288h4v4h-4zM268 288h16v4h-16zM108 292h4v4h-4zM264 292h12v4h-12zM116 296h4v4h-4zM260 296h12v4h-12zM124 300h8v4h-8zM252 300h12v4h-12zM488 300h32v4h-32zM136 304h28v4h-28zM244 304h12v4h-12zM476 304h60v4h-60zM168 308h16v4h-16zM224 308h24v4h-24zM468 308h8v4h-8zM536 308h12v4h-12zM188 312h40v4h-40zM464 312h4v4h-4zM548 312h8v4h-8zM460 316h4v4h-4zM560 316h4v4h-4zM456 320h4v4h-4zM564 320h8v4h-8zM448 324h4v4h-4zM440 328h4v4h-4zM432 332h4v4h-4zM428 336h4v4h-4zM420 340h8v4h-8zM420 344h4v4h-4zM416 348h4v4h-4zM416 352h4v4h-4zM412 356h4v4h-4zM412 360h4v4h-4zM408 364h4v4h-4zM408 368h4v4h-4zM408 372h4v4h-4zM404 384h4v4h-4zM404 388h4v4h-4zM404 392h4v4h-4zM404 396h4v4h-4zM404 400h4v4h-4zM404 404h4v4h-4zM404 408h4v4h-4zM404 412h4v4h-4zM408 428h4v4h-4zM408 432h4v4h-4zM408 436h4v4h-4zM412 444h4v4h-4zM412 448h4v4h-4zM416 456h4v4h-4zM420 460h4v4h-4zM424 464h4v4h-4zM428 468h4v4h-4zM432 472h4v4h-4zM436 476h4v4h-4zM444 480h4v4h-4zM568 480h4v4h-4zM448 484h8v4h-8zM560 484h8v4h-8zM460 488h4v4h-4zM552 488h8v4h-8zM472 492h12v4h-12zM536 492h12v4h-12z"/>
<path fill="#e1e261" d="M348 32h28v4h-28zM400 32h20v4h-20zM332 36h12v4h-12zM420 36h12v4h-12zM324 40h8v4h-8zM432 40h8v4h-8zM316 44h8v4h-8zM440 44h8v4h-8zM308 48h8v4h-8zM448 48h8v4h-8zM304 52h4v4h-4zM300 56h4v4h-4zM456 56h4v4h-4zM292 60h8v4h-8zM460 60h4v4h-4zM288 64h8v4h-8zM464 64h4v4h-4zM284 68h8v4h-8zM468 68h8v4h-8zM284 72h4v4h-4zM472 72h8v4h-8zM280 76h4v4h-4zM476 76h8v4h-8zM276 80h4v4h-4zM480 80h8v4h-8zM272 84h4v4h-4zM484 84h4v4h-4zM272 88h4v4h-4zM488 88h4v4h-4zM268 92h4v4h-4zM488 92h4v4h-4zM264 96h8v4h-8zM492 96h4v4h-4zM264 100h4v4h-4zM492 100h4v4h-4zM260 104h4v4h-4zM492 104h4v4h-4zM256 108h8v4h-8zM496 108h4v4h-4zM140 112h60v4h-60zM252 112h8v4h-8zM500 112h4v4h-4zM120 116h16v4h-16zM200 116h16v4h-16zM248 116h12v4h-12zM504 116h4v4h-4zM112 120h8v4h-8zM216 120h40v4h-40zM504 120h4v4h-4zM104 124h4v4h-4zM228 124h24v4h-24zM504 124h4v4h-4zM96 128h4v4h-4zM504 128h4v4h-4zM88 132h8v4h-8zM504 132h4v4h-4zM84 136h4v4h-4zM504 136h8v4h-8zM80 140h4v4h-4zM504 140h8v4h-8zM76 144h4v4h-4zM504 144h8v4h-8zM72 148h4v4h-4zM504 148h4v4h-4zM68 152h4v4h-4zM504 152h4v4h-4zM68 156h4v4h-4zM504 156h4v4h-4zM64 160h4v4h-4zM504 160h4v4h-4zM60 164h4v4h-4zM504 164h4v4h-4zM60 168h4v4h-4zM500 168h8v4h-8zM56 172h4v4h-4zM500 172h4v4h-4zM56 176h4v4h-4zM500 176h4v4h-4zM52 180h4v4h-4zM496 180h8v4h-8zM52 184h4v4h-4zM496 184h4v4h-4zM496 188h4v4h-4zM48 192h4v4h-4zM492 192h8v4h-8zM48 196h4v4h-4zM492 196h4v4h-4zM48 200h4v4h-4zM488 200h8v4h-8zM48 204h4v4h-4zM484 204h8v4h-8zM480 208h12v4h-12zM44 212h4v4h-4zM472 212h16v4h-16zM44 216h4v4h-4zM468 216h12v4h-12zM460 220h12v4h-12zM48 224h4v4h-4zM456 224h8v4h-8zM48 228h4v4h-4zM448 228h8v4h-8zM52 232h4v4h-4zM440 232h8v4h-8zM52 236h4v4h-4zM432 236h8v4h-8zM56 240h4v4h-4zM420 240h8v4h-8zM404 244h12v4h-12zM60 248h4v4h-4zM304 248h44v4h-44zM380 248h16v4h-16zM64 252h4v4h-4zM300 252h8v4h-8zM68 256h4v4h-4zM296 256h8v4h-8zM72 260h4v4h-4zM292 260h8v4h-8zM76 264h4v4h-4zM288 264h8v4h-8zM80 268h4v4h-4zM284 268h8v4h-8zM84 272h4v4h-4zM276 272h16v4h-16zM88 276h4v4h-4zM272 276h16v4h-16zM96 280h4v4h-4zM268 280h12v4h-12zM100 284h4v4h-4zM264 284h12v4h-12zM104 288h8v4h-8zM260 288h8v4h-8zM112 292h4v4h-4zM256 292h8v4h-8zM120 296h8v4h-8zM248 296h12v4h-12zM132 300h12v4h-12zM240 300h12v4h-12zM164 304h8v4h-8zM220 304h24v4h-24zM184 308h40v4h-40zM476 308h60v4h-60zM468 312h8v4h-8zM540 312h8v4h-8zM464 316h4v4h-4zM552 316h8v4h-8zM460 320h4v4h-4zM560 320h4v4h-4zM452 324h4v4h-4zM568 324h4v4h-4zM444 328h8v4h-8zM436 332h8v4h-8zM432 336h4v4h-4zM428 340h4v4h-4zM424 344h4v4h-4zM420 348h4v4h-4zM416 356h4v4h-4zM412 364h4v4h-4zM412 368h4v4h-4zM408 376h4v4h-4zM408 380h4v4h-4zM408 384h4v4h-4zM408 388h4v4h-4zM408 392h4v4h-4zM408 396h4v4h-4zM408 404h4v4h-4zM408 408h4v4h-4zM408 412h4v4h-4zM408 416h4v4h-4zM408 420h4v4h-4zM408 424h4v4h-4zM412 436h4v4h-4zM412 440h4v4h-4zM416 448h4v4h-4zM416 452h4v4h-4zM420 456h4v4h-4zM424 460h4v4h-4zM428 464h4v4h-4zM432 468h4v4h-4zM436 472h4v4h-4zM440 476h4v4h-4zM448 480h4v4h-4zM564 480h4v4h-4zM456 484h4v4h-4zM556 484h4v4h-4zM464 488h12v4h-12zM544 488h8v4h-8zM484 492h52v4h-52z"/>
<path fill="#e4de61" d="M376 32h24v4h-24zM344 36h20v4h-20zM404 36h16v4h-16zM332 40h8v4h-8zM424 40h8v4h-8zM324 44h8v4h-8zM432 44h8v4h-8zM316 48h8v4h-8zM440 48h8v4h-8zM308 52h8v4h-8zM448 52h8v4h-8zM304 56h4v4h-4zM300 60h4v4h-4zM456 60h4v4h-4zM296 64h4v4h-4zM460 64h4v4h-4zM292 68h4v4h-4zM464 68h4v4h-4zM288 72h4v4h-4zM468 72h4v4h-4zM284 76h4v4h-4zM472 76h4v4h-4zM280 80h4v4h-4zM476 80h4v4h-4zM276 84h4v4h-4zM480 84h4v4h-4zM276 88h4v4h-4zM480 88h8v4h-8zM272 92h4v4h-4zM484 92h4v4h-4zM272 96h4v4h-4zM488 96h4v4h-4zM268 100h4v4h-4zM488 100h4v4h-4zM264 104h8v4h-8zM488 104h4v4h-4zM264 108h4v4h-4zM492 108h4v4h-4zM260 112h8v4h-8zM496 112h4v4h-4zM136 116h64v4h-64zM260 116h4v4h-4zM500 116h4v4h-4zM120 120h12v4h-12zM200 120h16v4h-16zM256 120h8v4h-8zM500 120h4v4h-4zM108 124h8v4h-8zM216 124h12v4h-12zM252 124h8v4h-8zM500 124h4v4h-4zM100 128h8v4h-8zM228 128h32v4h-32zM500 128h4v4h-4zM96 132h4v4h-4zM236 132h20v4h-20zM500 132h4v4h-4zM88 136h8v4h-8zM500 136h4v4h-4zM84 140h4v4h-4zM500 140h4v4h-4zM80 144h4v4h-4zM500 144h4v4h-4zM76 148h4v4h-4zM500 148h4v4h-4zM72 152h4v4h-4zM500 152h4v4h-4zM72 156h4v4h-4zM500 156h4v4h-4zM68 160h4v4h-4zM500 160h4v4h-4zM64 164h4v4h-4zM496 164h8v4h-8zM64 168h4v4h-4zM496 168h4v4h-4zM60 172h4v4h-4zM496 172h4v4h-4zM60 176h4v4h-4zM496 176h4v4h-4zM56 180h4v4h-4zM492 180h4v4h-4zM56 184h4v4h-4zM492 184h4v4h-4zM52 188h4v4h-4zM488 188h8v4h-8zM52 192h4v4h-4zM488 192h4v4h-4zM52 196h4v4h-4zM484 196h8v4h-8zM52 200h4v4h-4zM480 200h8v4h-8zM476 204h8v4h-8zM48 208h4v4h-4zM472 208h8v4h-8zM48 212h4v4h-4zM464 212h8v4h-8zM48 216h4v4h-4zM460 216h8v4h-8zM48 220h4v4h-4zM452 220h8v4h-8zM52 224h4v4h-4zM448 224h8v4h-8zM52 228h4v4h-4zM444 228h4v4h-4zM56 232h4v4h-4zM436 232h4v4h-4zM56 236h4v4h-4zM424 236h8v4h-8zM60 240h4v4h-4zM412 240h8v4h-8zM60 244h4v4h-4zM300 244h36v4h-36zM396 244h8v4h-8zM64 248h4v4h-4zM292 248h12v4h-12zM348 248h32v4h-32zM68 252h4v4h-4zM288 252h12v4h-12zM72 256h4v4h-4zM284 256h12v4h-12zM280 260h12v4h-12zM276 264h12v4h-12zM84 268h4v4h-4zM272 268h12v4h-12zM88 272h4v4h-4zM268 272h8v4h-8zM92 276h4v4h-4zM264 276h8v4h-8zM100 280h4v4h-4zM260 280h8v4h-8zM104 284h4v4h-4zM256 284h8v4h-8zM112 288h4v4h-4zM252 288h8v4h-8zM116 292h8v4h-8zM244 292h12v4h-12zM128 296h8v4h-8zM240 296h8v4h-8zM144 300h20v4h-20zM224 300h16v4h-16zM172 304h48v4h-48zM476 312h28v4h-28zM520 312h20v4h-20zM468 316h8v4h-8zM540 316h12v4h-12zM464 320h4v4h-4zM552 320h8v4h-8zM456 324h4v4h-4zM560 324h8v4h-8zM568 328h4v4h-4zM444 332h4v4h-4zM436 336h4v4h-4zM432 340h4v4h-4zM428 344h4v4h-4zM424 348h4v4h-4zM420 352h4v4h-4zM420 356h4v4h-4zM416 360h4v4h-4zM416 364h4v4h-4zM412 372h4v4h-4zM412 376h4v4h-4zM412 380h4v4h-4zM408 400h4v4h-4zM412 424h4v4h-4zM412 428h4v4h-4zM412 432h4v4h-4zM416 440h4v4h-4zM416 444h4v4h-4zM420 452h4v4h-4zM424 456h4v4h-4zM428 460h4v4h-4zM432 464h4v4h-4zM436 468h4v4h-4zM440 472h4v4h-4zM444 476h8v4h-8zM564 476h8v4h-8zM452 480h8v4h-8zM556 480h8v4h-8zM460 484h8v4h-8zM548 484h8v4h-8zM476 488h36v4h-36zM528 488h16v4h-16z"/>
<path fill="#e8da60" d="M364 36h40v4h-40zM340 40h12v4h-12zM412 40h12v4h-12zM332 44h4v4h-4zM428 44h4v4h-4zM324 48h4v4h-4zM436 48h4v4h-4zM316 52h4v4h-4zM444 52h4v4h-4zM308 56h4v4h-4zM452 56h4v4h-4zM304 60h4v4h-4zM300 64h4v4h-4zM456 64h4v4h-4zM296 68h4v4h-4zM460 68h4v4h-4zM292 72h4v4h-4zM464 72h4v4h-4zM288 76h4v4h-4zM468 76h4v4h-4zM284 80h4v4h-4zM468 80h8v4h-8zM280 84h4v4h-4zM472 84h8v4h-8zM280 88h4v4h-4zM476 88h4v4h-4zM276 92h4v4h-4zM480 92h4v4h-4zM276 96h4v4h-4zM480 96h8v4h-8zM272 100h4v4h-4zM484 100h4v4h-4zM272 104h4v4h-4zM484 104h4v4h-4zM268 108h4v4h-4zM488 108h4v4h-4zM268 112h4v4h-4zM492 112h4v4h-4zM264 116h4v4h-4zM496 116h4v4h-4zM132 120h16v4h-16zM160 120h4v4h-4zM184 120h16v4h-16zM264 120h4v4h-4zM496 120h4v4h-4zM116 124h8v4h-8zM204 124h12v4h-12zM260 124h8v4h-8zM496 124h4v4h-4zM108 128h8v4h-8zM216 128h12v4h-12zM260 128h4v4h-4zM496 128h4v4h-4zM100 132h4v4h-4zM224 132h12v4h-12zM256 132h8v4h-8zM496 132h4v4h-4zM96 136h4v4h-4zM236 136h28v4h-28zM496 136h4v4h-4zM88 140h4v4h-4zM244 140h16v4h-16zM496 140h4v4h-4zM84 144h4v4h-4zM252 144h8v4h-8zM496 144h4v4h-4zM80 148h4v4h-4zM496 148h4v4h-4zM76 152h4v4h-4zM496 152h4v4h-4zM496 156h4v4h-4zM72 160h4v4h-4zM496 160h4v4h-4zM68 164h4v4h-4zM492 168h4v4h-4zM64 172h4v4h-4zM492 172h4v4h-4zM492 176h4v4h-4zM60 180h4v4h-4zM488 180h4v4h-4zM488 184h4v4h-4zM56 188h4v4h-4zM484 188h4v4h-4zM56 192h4v4h-4zM480 192h8v4h-8zM476 196h8v4h-8zM472 200h8v4h-8zM52 204h4v4h-4zM468 204h8v4h-8zM52 208h4v4h-4zM464 208h8v4h-8zM52 212h4v4h-4zM456 212h8v4h-8zM52 216h4v4h-4zM452 216h8v4h-8zM52 220h4v4h-4zM448 220h4v4h-4zM444 224h4v4h-4zM56 228h4v4h-4zM440 228h4v4h-4zM432 232h4v4h-4zM60 236h4v4h-4zM420 236h4v4h-4zM292 240h32v4h-32zM408 240h4v4h-4zM64 244h4v4h-4zM284 244h16v4h-16zM336 244h16v4h-16zM380 244h16v4h-16zM68 248h4v4h-4zM280 248h12v4h-12zM276 252h12v4h-12zM272 256h12v4h-12zM76 260h4v4h-4zM268 260h12v4h-12zM80 264h4v4h-4zM268 264h8v4h-8zM264 268h8v4h-8zM92 272h4v4h-4zM260 272h8v4h-8zM96 276h4v4h-4zM256 276h8v4h-8zM104 280h4v4h-4zM252 280h8v4h-8zM108 284h4v4h-4zM248 284h8v4h-8zM116 288h4v4h-4zM244 288h8v4h-8zM124 292h4v4h-4zM240 292h4v4h-4zM136 296h8v4h-8zM228 296h12v4h-12zM164 300h16v4h-16zM208 300h16v4h-16zM504 312h16v4h-16zM476 316h8v4h-8zM532 316h8v4h-8zM468 320h4v4h-4zM544 320h8v4h-8zM460 324h4v4h-4zM556 324h4v4h-4zM452 328h4v4h-4zM564 328h4v4h-4zM448 332h4v4h-4zM568 332h4v4h-4zM440 336h4v4h-4zM436 340h4v4h-4zM432 344h4v4h-4zM428 348h4v4h-4zM424 352h4v4h-4zM424 356h4v4h-4zM420 360h4v4h-4zM416 368h4v4h-4zM416 372h4v4h-4zM412 384h4v4h-4zM412 388h4v4h-4zM412 392h4v4h-4zM412 396h4v4h-4zM412 400h4v4h-4zM412 404h4v4h-4zM412 408h4v4h-4zM412 412h4v4h-4zM412 416h4v4h-4zM412 420h4v4h-4zM416 436h4v4h-4zM420 448h4v4h-4zM440 468h4v4h-4zM444 472h4v4h-4zM568 472h4v4h-4zM452 476h4v4h-4zM560 476h4v4h-4zM460 480h4v4h-4zM552 480h4v4h-4zM468 484h8v4h-8zM540 484h8v4h-8zM512 488h16v4h-16z"/>
<path fill="#ebd65e" d="M352 40h20v4h-20zM400 40h12v4h-12zM336 44h8v4h-8zM420 44h8v4h-8zM328 48h4v4h-4zM432 48h4v4h-4zM320 52h4v4h-4zM440 52h4v4h-4zM312 56h4v4h-4zM444 56h8v4h-8zM308 60h4v4h-4zM452 60h4v4h-4zM304 64h4v4h-4zM300 68h4v4h-4zM456 68h4v4h-4zM296 72h4v4h-4zM460 72h4v4h-4zM292 76h4v4h-4zM464 76h4v4h-4zM288 80h4v4h-4zM464 80h4v4h-4zM284 84h4v4h-4zM468 84h4v4h-4zM284 88h4v4h-4zM472 88h4v4h-4zM280 92h4v4h-4zM476 92h4v4h-4zM476 96h4v4h-4zM276 100h4v4h-4zM480 100h4v4h-4zM480 104h4v4h-4zM272 108h4v4h-4zM484 108h4v4h-4zM272 112h4v4h-4zM488 112h4v4h-4zM268 116h4v4h-4zM492 116h4v4h-4zM148 120h12v4h-12zM164 120h20v4h-20zM268 120h4v4h-4zM492 120h4v4h-4zM124 124h8v4h-8zM196 124h8v4h-8zM268 124h4v4h-4zM492 124h4v4h-4zM116 128h4v4h-4zM208 128h8v4h-8zM264 128h8v4h-8zM492 128h4v4h-4zM104 132h8v4h-8zM220 132h4v4h-4zM264 132h4v4h-4zM492 132h4v4h-4zM100 136h4v4h-4zM228 136h8v4h-8zM264 136h4v4h-4zM92 140h4v4h-4zM232 140h12v4h-12zM260 140h8v4h-8zM88 144h4v4h-4zM240 144h12v4h-12zM260 144h8v4h-8zM84 148h4v4h-4zM244 148h20v4h-20zM492 148h4v4h-4zM80 152h4v4h-4zM252 152h12v4h-12zM492 152h4v4h-4zM76 156h4v4h-4zM492 156h4v4h-4zM492 160h4v4h-4zM72 164h4v4h-4zM492 164h4v4h-4zM68 168h4v4h-4zM488 168h4v4h-4zM488 172h4v4h-4zM64 176h4v4h-4zM484 176h8v4h-8zM484 180h4v4h-4zM60 184h4v4h-4zM480 184h8v4h-8zM60 188h4v4h-4zM476 188h8v4h-8zM472 192h8v4h-8zM56 196h4v4h-4zM472 196h4v4h-4zM56 200h4v4h-4zM468 200h4v4h-4zM56 204h4v4h-4zM464 204h4v4h-4zM456 208h8v4h-8zM452 212h4v4h-4zM448 216h4v4h-4zM444 220h4v4h-4zM56 224h4v4h-4zM440 224h4v4h-4zM432 228h8v4h-8zM60 232h4v4h-4zM284 232h12v4h-12zM424 232h8v4h-8zM280 236h36v4h-36zM416 236h4v4h-4zM64 240h4v4h-4zM276 240h16v4h-16zM324 240h12v4h-12zM400 240h8v4h-8zM68 244h4v4h-4zM272 244h12v4h-12zM352 244h28v4h-28zM272 248h8v4h-8zM72 252h4v4h-4zM268 252h8v4h-8zM76 256h4v4h-4zM268 256h4v4h-4zM80 260h4v4h-4zM264 260h4v4h-4zM84 264h4v4h-4zM260 264h8v4h-8zM88 268h4v4h-4zM260 268h4v4h-4zM256 272h4v4h-4zM100 276h4v4h-4zM252 276h4v4h-4zM248 280h4v4h-4zM112 284h4v4h-4zM244 284h4v4h-4zM120 288h4v4h-4zM240 288h4v4h-4zM128 292h8v4h-8zM232 292h8v4h-8zM144 296h20v4h-20zM216 296h12v4h-12zM180 300h28v4h-28zM484 316h48v4h-48zM472 320h4v4h-4zM540 320h4v4h-4zM464 324h4v4h-4zM552 324h4v4h-4zM456 328h4v4h-4zM560 328h4v4h-4zM564 332h4v4h-4zM444 336h4v4h-4zM428 352h4v4h-4zM424 360h4v4h-4zM420 364h4v4h-4zM420 368h4v4h-4zM416 376h4v4h-4zM416 380h4v4h-4zM416 428h4v4h-4zM416 432h4v4h-4zM420 440h4v4h-4zM420 444h4v4h-4zM424 452h4v4h-4zM428 456h4v4h-4zM432 460h4v4h-4zM436 464h4v4h-4zM448 472h4v4h-4zM564 472h4v4h-4zM456 476h4v4h-4zM556 476h4v4h-4zM464 480h4v4h-4zM548 480h4v4h-4zM476 484h12v4h-12zM500 484h4v4h-4zM532 484h8v4h-8z"/>
<path fill="#eed25d" d="M372 40h28v4h-28zM344 44h12v4h-12zM412 44h8v4h-8zM332 48h8v4h-8zM424 48h8v4h-8zM324 52h4v4h-4zM432 52h8v4h-8zM316 56h4v4h-4zM440 56h4v4h-4zM312 60h4v4h-4zM448 60h4v4h-4zM308 64h4v4h-4zM452 64h4v4h-4zM456 72h4v4h-4zM460 76h4v4h-4zM292 80h4v4h-4zM288 84h4v4h-4zM464 84h4v4h-4zM468 88h4v4h-4zM284 92h4v4h-4zM472 92h4v4h-4zM280 96h4v4h-4zM472 96h4v4h-4zM280 100h4v4h-4zM476 100h4v4h-4zM276 104h4v4h-4zM276 108h4v4h-4zM480 108h4v4h-4zM484 112h4v4h-4zM272 116h4v4h-4zM488 116h4v4h-4zM272 120h4v4h-4zM488 120h4v4h-4zM132 124h32v4h-32zM180 124h16v4h-16zM272 124h4v4h-4zM488 124h4v4h-4zM120 128h8v4h-8zM200 128h8v4h-8zM488 128h4v4h-4zM112 132h4v4h-4zM212 132h8v4h-8zM268 132h4v4h-4zM104 136h4v4h-4zM220 136h8v4h-8zM268 136h4v4h-4zM492 136h4v4h-4zM96 140h4v4h-4zM228 140h4v4h-4zM268 140h4v4h-4zM492 140h4v4h-4zM92 144h4v4h-4zM236 144h4v4h-4zM268 144h4v4h-4zM492 144h4v4h-4zM88 148h4v4h-4zM240 148h4v4h-4zM264 148h8v4h-8zM488 148h4v4h-4zM84 152h4v4h-4zM244 152h8v4h-8zM264 152h4v4h-4zM488 152h4v4h-4zM80 156h4v4h-4zM248 156h20v4h-20zM488 156h4v4h-4zM76 160h4v4h-4zM252 160h16v4h-16zM488 160h4v4h-4zM256 164h8v4h-8zM484 164h8v4h-8zM72 168h4v4h-4zM484 168h4v4h-4zM68 172h4v4h-4zM484 172h4v4h-4zM480 176h4v4h-4zM64 180h4v4h-4zM480 180h4v4h-4zM64 184h4v4h-4zM476 184h4v4h-4zM472 188h4v4h-4zM60 192h4v4h-4zM468 192h4v4h-4zM60 196h4v4h-4zM468 196h4v4h-4zM464 200h4v4h-4zM460 204h4v4h-4zM56 208h4v4h-4zM56 212h4v4h-4zM448 212h4v4h-4zM56 216h4v4h-4zM444 216h4v4h-4zM56 220h4v4h-4zM280 220h4v4h-4zM440 220h4v4h-4zM276 224h16v4h-16zM436 224h4v4h-4zM60 228h4v4h-4zM276 228h24v4h-24zM428 228h4v4h-4zM272 232h12v4h-12zM296 232h16v4h-16zM420 232h4v4h-4zM64 236h4v4h-4zM272 236h8v4h-8zM316 236h12v4h-12zM408 236h8v4h-8zM268 240h8v4h-8zM336 240h12v4h-12zM384 240h16v4h-16zM268 244h4v4h-4zM72 248h4v4h-4zM264 248h8v4h-8zM76 252h4v4h-4zM264 252h4v4h-4zM260 256h8v4h-8zM260 260h4v4h-4zM88 264h4v4h-4zM256 264h4v4h-4zM92 268h4v4h-4zM252 268h8v4h-8zM96 272h4v4h-4zM248 272h8v4h-8zM104 276h4v4h-4zM248 276h4v4h-4zM108 280h4v4h-4zM244 280h4v4h-4zM116 284h4v4h-4zM236 284h8v4h-8zM124 288h4v4h-4zM232 288h8v4h-8zM136 292h4v4h-4zM220 292h12v4h-12zM164 296h12v4h-12zM204 296h12v4h-12zM476 320h12v4h-12zM528 320h12v4h-12zM468 324h4v4h-4zM544 324h8v4h-8zM460 328h4v4h-4zM552 328h8v4h-8zM452 332h4v4h-4zM560 332h4v4h-4zM448 336h4v4h-4zM568 336h4v4h-4zM440 340h4v4h-4zM436 344h4v4h-4zM432 348h4v4h-4zM428 356h4v4h-4zM424 364h4v4h-4zM420 372h4v4h-4zM416 384h4v4h-4zM416 388h4v4h-4zM416 392h4v4h-4zM416 416h4v4h-4zM416 420h4v4h-4zM416 424h4v4h-4zM420 436h4v4h-4zM424 444h4v4h-4zM424 448h4v4h-4zM428 452h4v4h-4zM432 456h4v4h-4zM436 460h4v4h-4zM440 464h4v4h-4zM444 468h4v4h-4zM568 468h4v4h-4zM452 472h4v4h-4zM560 472h4v4h-4zM460 476h4v4h-4zM552 476h4v4h-4zM468 480h8v4h-8zM540 480h8v4h-8zM488 484h12v4h-12zM504 484h28v4h-28z"/>
<path fill="#f2ce5b" d="M356 44h20v4h-20zM396 44h16v4h-16zM340 48h8v4h-8zM416 48h8v4h-8zM328 52h8v4h-8zM428 52h4v4h-4zM320 56h8v4h-8zM436 56h4v4h-4zM316 60h4v4h-4zM444 60h4v4h-4zM448 64h4v4h-4zM304 68h4v4h-4zM452 68h4v4h-4zM300 72h4v4h-4zM296 76h4v4h-4zM456 76h4v4h-4zM460 80h4v4h-4zM292 84h4v4h-4zM460 84h4v4h-4zM288 88h4v4h-4zM464 88h4v4h-4zM468 92h4v4h-4zM284 96h4v4h-4zM472 100h4v4h-4zM280 104h4v4h-4zM476 104h4v4h-4zM476 108h4v4h-4zM276 112h4v4h-4zM480 112h4v4h-4zM276 116h4v4h-4zM484 116h4v4h-4zM484 120h4v4h-4zM164 124h16v4h-16zM128 128h8v4h-8zM192 128h8v4h-8zM272 128h4v4h-4zM116 132h4v4h-4zM204 132h8v4h-8zM272 132h4v4h-4zM488 132h4v4h-4zM108 136h4v4h-4zM216 136h4v4h-4zM272 136h4v4h-4zM488 136h4v4h-4zM100 140h4v4h-4zM224 140h4v4h-4zM272 140h4v4h-4zM488 140h4v4h-4zM96 144h4v4h-4zM228 144h8v4h-8zM272 144h4v4h-4zM488 144h4v4h-4zM236 148h4v4h-4zM240 152h4v4h-4zM268 152h4v4h-4zM484 152h4v4h-4zM244 156h4v4h-4zM268 156h4v4h-4zM484 156h4v4h-4zM80 160h4v4h-4zM248 160h4v4h-4zM268 160h4v4h-4zM484 160h4v4h-4zM76 164h4v4h-4zM252 164h4v4h-4zM264 164h8v4h-8zM252 168h20v4h-20zM480 168h4v4h-4zM72 172h4v4h-4zM256 172h16v4h-16zM480 172h4v4h-4zM68 176h4v4h-4zM260 176h12v4h-12zM476 176h4v4h-4zM68 180h4v4h-4zM264 180h8v4h-8zM476 180h4v4h-4zM264 184h8v4h-8zM472 184h4v4h-4zM64 188h4v4h-4zM468 188h4v4h-4zM464 192h4v4h-4zM464 196h4v4h-4zM60 200h4v4h-4zM272 200h4v4h-4zM460 200h4v4h-4zM60 204h4v4h-4zM272 204h8v4h-8zM456 204h4v4h-4zM272 208h12v4h-12zM452 208h4v4h-4zM272 212h16v4h-16zM272 216h20v4h-20zM60 220h4v4h-4zM268 220h12v4h-12zM284 220h12v4h-12zM436 220h4v4h-4zM60 224h4v4h-4zM268 224h8v4h-8zM292 224h8v4h-8zM432 224h4v4h-4zM268 228h8v4h-8zM300 228h8v4h-8zM424 228h4v4h-4zM64 232h4v4h-4zM268 232h4v4h-4zM312 232h8v4h-8zM416 232h4v4h-4zM264 236h8v4h-8zM328 236h8v4h-8zM400 236h8v4h-8zM68 240h4v4h-4zM264 240h4v4h-4zM348 240h36v4h-36zM72 244h4v4h-4zM264 244h4v4h-4zM260 248h4v4h-4zM260 252h4v4h-4zM80 256h4v4h-4zM256 256h4v4h-4zM84 260h4v4h-4zM256 260h4v4h-4zM252 264h4v4h-4zM96 268h4v4h-4zM248 268h4v4h-4zM100 272h4v4h-4zM244 272h4v4h-4zM244 276h4v4h-4zM112 280h4v4h-4zM240 280h4v4h-4zM120 284h4v4h-4zM232 284h4v4h-4zM128 288h4v4h-4zM228 288h4v4h-4zM140 292h24v4h-24zM212 292h8v4h-8zM176 296h28v4h-28zM488 320h40v4h-40zM472 324h8v4h-8zM536 324h8v4h-8zM464 328h4v4h-4zM548 328h4v4h-4zM456 332h4v4h-4zM556 332h4v4h-4zM564 336h4v4h-4zM444 340h4v4h-4zM568 340h4v4h-4zM440 344h4v4h-4zM436 348h4v4h-4zM432 352h4v4h-4zM428 360h4v4h-4zM424 368h4v4h-4zM420 376h4v4h-4zM420 380h4v4h-4zM416 396h4v4h-4zM416 400h4v4h-4zM416 404h4v4h-4zM416 408h4v4h-4zM416 412h4v4h-4zM420 428h4v4h-4zM420 432h4v4h-4zM424 440h4v4h-4zM428 448h4v4h-4zM568 464h4v4h-4zM448 468h4v4h-4zM564 468h4v4h-4zM456 472h4v4h-4zM556 472h4v4h-4zM464 476h4v4h-4zM548 476h4v4h-4zM476 480h8v4h-8zM536 480h4v4h-4z"/>
<path fill="#f5ca5a" d="M376 44h20v4h-20zM348 48h8v4h-8zM408 48h8v4h-8zM336 52h4v4h-4zM424 52h4v4h-4zM328 56h4v4h-4zM432 56h4v4h-4zM320 60h4v4h-4zM440 60h4v4h-4zM312 64h4v4h-4zM444 64h4v4h-4zM308 68h4v4h-4zM448 68h4v4h-4zM304 72h4v4h-4zM452 72h4v4h-4zM300 76h4v4h-4zM296 80h4v4h-4zM456 80h4v4h-4zM292 88h4v4h-4zM460 88h4v4h-4zM288 92h4v4h-4zM464 92h4v4h-4zM468 96h4v4h-4zM284 100h4v4h-4zM468 100h4v4h-4zM472 104h4v4h-4zM280 108h4v4h-4zM472 108h4v4h-4zM280 112h4v4h-4zM480 116h4v4h-4zM276 120h4v4h-4zM276 124h4v4h-4zM484 124h4v4h-4zM136 128h32v4h-32zM176 128h16v4h-16zM276 128h4v4h-4zM484 128h4v4h-4zM120 132h8v4h-8zM200 132h4v4h-4zM276 132h4v4h-4zM484 132h4v4h-4zM112 136h4v4h-4zM208 136h8v4h-8zM484 136h4v4h-4zM104 140h4v4h-4zM216 140h8v4h-8zM484 140h4v4h-4zM100 144h4v4h-4zM224 144h4v4h-4zM484 144h4v4h-4zM92 148h4v4h-4zM232 148h4v4h-4zM272 148h4v4h-4zM484 148h4v4h-4zM88 152h4v4h-4zM236 152h4v4h-4zM272 152h4v4h-4zM84 156h4v4h-4zM240 156h4v4h-4zM272 156h4v4h-4zM480 156h4v4h-4zM244 160h4v4h-4zM272 160h4v4h-4zM480 160h4v4h-4zM80 164h4v4h-4zM248 164h4v4h-4zM272 164h4v4h-4zM480 164h4v4h-4zM76 168h4v4h-4zM248 168h4v4h-4zM272 168h4v4h-4zM476 168h4v4h-4zM252 172h4v4h-4zM272 172h4v4h-4zM476 172h4v4h-4zM72 176h4v4h-4zM256 176h4v4h-4zM272 176h4v4h-4zM472 176h4v4h-4zM256 180h8v4h-8zM272 180h4v4h-4zM472 180h4v4h-4zM68 184h4v4h-4zM260 184h4v4h-4zM272 184h8v4h-8zM468 184h4v4h-4zM260 188h20v4h-20zM464 188h4v4h-4zM64 192h4v4h-4zM264 192h16v4h-16zM64 196h4v4h-4zM264 196h20v4h-20zM460 196h4v4h-4zM264 200h8v4h-8zM276 200h8v4h-8zM456 200h4v4h-4zM264 204h8v4h-8zM280 204h8v4h-8zM452 204h4v4h-4zM60 208h4v4h-4zM264 208h8v4h-8zM284 208h8v4h-8zM448 208h4v4h-4zM60 212h4v4h-4zM268 212h4v4h-4zM288 212h4v4h-4zM444 212h4v4h-4zM60 216h4v4h-4zM268 216h4v4h-4zM292 216h4v4h-4zM440 216h4v4h-4zM264 220h4v4h-4zM296 220h4v4h-4zM432 220h4v4h-4zM264 224h4v4h-4zM300 224h8v4h-8zM428 224h4v4h-4zM64 228h4v4h-4zM264 228h4v4h-4zM308 228h8v4h-8zM420 228h4v4h-4zM264 232h4v4h-4zM320 232h8v4h-8zM408 232h8v4h-8zM68 236h4v4h-4zM336 236h8v4h-8zM392 236h8v4h-8zM72 240h4v4h-4zM260 240h4v4h-4zM260 244h4v4h-4zM76 248h4v4h-4zM256 248h4v4h-4zM80 252h4v4h-4zM256 252h4v4h-4zM84 256h4v4h-4zM252 256h4v4h-4zM88 260h4v4h-4zM252 260h4v4h-4zM92 264h4v4h-4zM248 264h4v4h-4zM244 268h4v4h-4zM104 272h4v4h-4zM108 276h4v4h-4zM240 276h4v4h-4zM116 280h4v4h-4zM236 280h4v4h-4zM124 284h4v4h-4zM228 284h4v4h-4zM132 288h8v4h-8zM220 288h8v4h-8zM164 292h8v4h-8zM204 292h8v4h-8zM480 324h8v4h-8zM528 324h8v4h-8zM468 328h4v4h-4zM544 328h4v4h-4zM460 332h4v4h-4zM552 332h4v4h-4zM452 336h4v4h-4zM560 336h4v4h-4zM448 340h4v4h-4zM564 340h4v4h-4zM436 352h4v4h-4zM432 356h4v4h-4zM428 364h4v4h-4zM424 372h4v4h-4zM420 384h4v4h-4zM420 388h4v4h-4zM420 420h4v4h-4zM420 424h4v4h-4zM424 436h4v4h-4zM428 444h4v4h-4zM432 452h4v4h-4zM436 456h4v4h-4zM440 460h4v4h-4zM444 464h4v4h-4zM452 468h4v4h-4zM560 468h4v4h-4zM460 472h4v4h-4zM552 472h4v4h-4zM468 476h4v4h-4zM544 476h4v4h-4zM484 480h28v4h-28zM520 480h16v4h-16z"/>
<path fill="#f6c458" d="M356 48h20v4h-20zM396 48h12v4h-12zM340 52h8v4h-8zM416 52h8v4h-8zM332 56h4v4h-4zM428 56h4v4h-4zM324 60h4v4h-4zM436 60h4v4h-4zM316 64h4v4h-4zM440 64h4v4h-4zM312 68h4v4h-4zM308 72h4v4h-4zM304 76h4v4h-4zM452 76h4v4h-4zM300 80h4v4h-4zM296 84h4v4h-4zM456 84h4v4h-4zM292 92h4v4h-4zM460 92h4v4h-4zM288 96h4v4h-4zM464 96h4v4h-4zM464 100h4v4h-4zM284 104h4v4h-4zM468 104h4v4h-4zM284 108h4v4h-4zM476 112h4v4h-4zM280 116h4v4h-4zM280 120h4v4h-4zM480 120h4v4h-4zM480 124h4v4h-4zM168 128h8v4h-8zM480 128h4v4h-4zM128 132h8v4h-8zM192 132h8v4h-8zM480 132h4v4h-4zM116 136h8v4h-8zM204 136h4v4h-4zM276 136h4v4h-4zM480 136h4v4h-4zM108 140h4v4h-4zM212 140h4v4h-4zM276 140h4v4h-4zM480 140h4v4h-4zM104 144h4v4h-4zM220 144h4v4h-4zM276 144h4v4h-4zM480 144h4v4h-4zM96 148h4v4h-4zM228 148h4v4h-4zM276 148h4v4h-4zM480 148h4v4h-4zM92 152h4v4h-4zM232 152h4v4h-4zM276 152h4v4h-4zM480 152h4v4h-4zM88 156h4v4h-4zM236 156h4v4h-4zM276 156h4v4h-4zM84 160h4v4h-4zM240 160h4v4h-4zM276 160h4v4h-4zM476 160h4v4h-4zM244 164h4v4h-4zM276 164h4v4h-4zM476 164h4v4h-4zM244 168h4v4h-4zM276 168h4v4h-4zM76 172h4v4h-4zM248 172h4v4h-4zM276 172h4v4h-4zM472 172h4v4h-4zM252 176h4v4h-4zM276 176h4v4h-4zM72 180h4v4h-4zM252 180h4v4h-4zM276 180h4v4h-4zM468 180h4v4h-4zM256 184h4v4h-4zM280 184h4v4h-4zM464 184h4v4h-4zM68 188h4v4h-4zM256 188h4v4h-4zM280 188h4v4h-4zM460 188h4v4h-4zM68 192h4v4h-4zM260 192h4v4h-4zM280 192h4v4h-4zM460 192h4v4h-4zM260 196h4v4h-4zM284 196h4v4h-4zM456 196h4v4h-4zM64 200h4v4h-4zM260 200h4v4h-4zM284 200h4v4h-4zM452 200h4v4h-4zM64 204h4v4h-4zM260 204h4v4h-4zM288 204h4v4h-4zM448 204h4v4h-4zM64 208h4v4h-4zM292 208h4v4h-4zM444 208h4v4h-4zM264 212h4v4h-4zM292 212h4v4h-4zM440 212h4v4h-4zM264 216h4v4h-4zM296 216h4v4h-4zM436 216h4v4h-4zM64 220h4v4h-4zM300 220h8v4h-8zM428 220h4v4h-4zM64 224h4v4h-4zM260 224h4v4h-4zM308 224h4v4h-4zM424 224h4v4h-4zM260 228h4v4h-4zM316 228h4v4h-4zM416 228h4v4h-4zM68 232h4v4h-4zM260 232h4v4h-4zM328 232h8v4h-8zM404 232h4v4h-4zM72 236h4v4h-4zM260 236h4v4h-4zM344 236h48v4h-48zM76 244h4v4h-4zM256 244h4v4h-4zM80 248h4v4h-4zM252 252h4v4h-4zM248 260h4v4h-4zM96 264h4v4h-4zM244 264h4v4h-4zM100 268h4v4h-4zM240 272h4v4h-4zM112 276h4v4h-4zM236 276h4v4h-4zM120 280h4v4h-4zM232 280h4v4h-4zM128 284h4v4h-4zM224 284h4v4h-4zM140 288h8v4h-8zM212 288h8v4h-8zM172 292h32v4h-32zM488 324h40v4h-40zM472 328h8v4h-8zM536 328h8v4h-8zM464 332h4v4h-4zM548 332h4v4h-4zM456 336h4v4h-4zM556 336h4v4h-4zM452 340h4v4h-4zM444 344h4v4h-4zM568 344h4v4h-4zM440 348h4v4h-4zM436 356h4v4h-4zM432 360h4v4h-4zM428 368h4v4h-4zM424 376h4v4h-4zM424 380h4v4h-4zM420 392h4v4h-4zM420 396h4v4h-4zM420 400h4v4h-4zM420 404h4v4h-4zM420 408h4v4h-4zM420 412h4v4h-4zM420 416h4v4h-4zM424 432h4v4h-4zM428 440h4v4h-4zM432 448h4v4h-4zM444 460h4v4h-4zM568 460h4v4h-4zM448 464h4v4h-4zM564 464h4v4h-4zM556 468h4v4h-4zM464 472h4v4h-4zM548 472h4v4h-4zM472 476h8v4h-8zM536 476h8v4h-8zM512 480h8v4h-8z"/>
<path fill="#f6bf56" d="M376 48h20v4h-20zM348 52h8v4h-8zM408 52h8v4h-8zM336 56h4v4h-4zM420 56h8v4h-8zM328 60h4v4h-4zM428 60h8v4h-8zM320 64h4v4h-4zM436 64h4v4h-4zM316 68h4v4h-4zM444 68h4v4h-4zM448 72h4v4h-4zM452 80h4v4h-4zM300 84h4v4h-4zM296 88h4v4h-4zM456 88h4v4h-4zM292 96h4v4h-4zM460 96h4v4h-4zM288 100h4v4h-4zM288 104h4v4h-4zM464 104h4v4h-4zM468 108h4v4h-4zM284 112h4v4h-4zM472 112h4v4h-4zM284 116h4v4h-4zM476 116h4v4h-4zM476 120h4v4h-4zM280 124h4v4h-4zM476 124h4v4h-4zM280 128h4v4h-4zM476 128h4v4h-4zM136 132h16v4h-16zM156 132h8v4h-8zM176 132h16v4h-16zM280 132h4v4h-4zM124 136h4v4h-4zM196 136h8v4h-8zM280 136h4v4h-4zM112 140h4v4h-4zM208 140h4v4h-4zM280 140h4v4h-4zM108 144h4v4h-4zM216 144h4v4h-4zM280 144h4v4h-4zM100 148h4v4h-4zM224 148h4v4h-4zM476 148h4v4h-4zM96 152h4v4h-4zM228 152h4v4h-4zM476 152h4v4h-4zM92 156h4v4h-4zM232 156h4v4h-4zM476 156h4v4h-4zM88 160h4v4h-4zM236 160h4v4h-4zM84 164h4v4h-4zM240 164h4v4h-4zM472 164h4v4h-4zM80 168h4v4h-4zM280 168h4v4h-4zM472 168h4v4h-4zM244 172h4v4h-4zM280 172h4v4h-4zM468 172h4v4h-4zM76 176h4v4h-4zM248 176h4v4h-4zM280 176h4v4h-4zM468 176h4v4h-4zM248 180h4v4h-4zM280 180h4v4h-4zM464 180h4v4h-4zM72 184h4v4h-4zM252 184h4v4h-4zM460 184h4v4h-4zM252 188h4v4h-4zM284 188h4v4h-4zM256 192h4v4h-4zM284 192h4v4h-4zM456 192h4v4h-4zM68 196h4v4h-4zM256 196h4v4h-4zM288 196h4v4h-4zM452 196h4v4h-4zM256 200h4v4h-4zM288 200h4v4h-4zM448 200h4v4h-4zM292 204h4v4h-4zM444 204h4v4h-4zM260 208h4v4h-4zM296 208h4v4h-4zM440 208h4v4h-4zM64 212h4v4h-4zM260 212h4v4h-4zM296 212h4v4h-4zM436 212h4v4h-4zM64 216h4v4h-4zM260 216h4v4h-4zM300 216h8v4h-8zM432 216h4v4h-4zM260 220h4v4h-4zM308 220h4v4h-4zM424 220h4v4h-4zM68 224h4v4h-4zM312 224h8v4h-8zM420 224h4v4h-4zM68 228h4v4h-4zM320 228h8v4h-8zM408 228h8v4h-8zM72 232h4v4h-4zM256 232h4v4h-4zM336 232h8v4h-8zM392 232h12v4h-12zM256 236h4v4h-4zM76 240h4v4h-4zM256 240h4v4h-4zM252 244h4v4h-4zM252 248h4v4h-4zM84 252h4v4h-4zM88 256h4v4h-4zM248 256h4v4h-4zM92 260h4v4h-4zM244 260h4v4h-4zM104 268h4v4h-4zM240 268h4v4h-4zM108 272h4v4h-4zM236 272h4v4h-4zM116 276h4v4h-4zM232 276h4v4h-4zM124 280h4v4h-4zM228 280h4v4h-4zM132 284h4v4h-4zM220 284h4v4h-4zM148 288h20v4h-20zM204 288h8v4h-8zM480 328h8v4h-8zM532 328h4v4h-4zM468 332h4v4h-4zM544 332h4v4h-4zM460 336h4v4h-4zM552 336h4v4h-4zM560 340h4v4h-4zM448 344h4v4h-4zM564 344h4v4h-4zM444 348h4v4h-4zM568 348h4v4h-4zM440 352h4v4h-4zM432 364h4v4h-4zM428 372h4v4h-4zM424 384h4v4h-4zM424 388h4v4h-4zM424 424h4v4h-4zM424 428h4v4h-4zM428 436h4v4h-4zM432 444h4v4h-4zM436 452h4v4h-4zM440 456h4v4h-4zM452 464h4v4h-4zM560 464h4v4h-4zM456 468h4v4h-4zM552 468h4v4h-4zM468 472h4v4h-4zM544 472h4v4h-4zM480 476h8v4h-8zM528 476h8v4h-8z"/>
<path fill="#f7b954" d="M356 52h24v4h-24zM392 52h16v4h-16zM340 56h8v4h-8zM412 56h8v4h-8zM332 60h4v4h-4zM424 60h4v4h-4zM324 64h4v4h-4zM432 64h4v4h-4zM320 68h4v4h-4zM440 68h4v4h-4zM312 72h4v4h-4zM444 72h4v4h-4zM308 76h4v4h-4zM448 76h4v4h-4zM304 80h4v4h-4zM452 84h4v4h-4zM296 92h4v4h-4zM456 92h4v4h-4zM292 100h4v4h-4zM460 100h4v4h-4zM460 104h4v4h-4zM288 108h4v4h-4zM464 108h4v4h-4zM468 112h4v4h-4zM472 116h4v4h-4zM284 120h4v4h-4zM472 120h4v4h-4zM284 124h4v4h-4zM472 124h4v4h-4zM152 132h4v4h-4zM164 132h12v4h-12zM476 132h4v4h-4zM128 136h8v4h-8zM188 136h8v4h-8zM476 136h4v4h-4zM116 140h8v4h-8zM204 140h4v4h-4zM476 140h4v4h-4zM112 144h4v4h-4zM212 144h4v4h-4zM476 144h4v4h-4zM104 148h4v4h-4zM220 148h4v4h-4zM280 148h4v4h-4zM224 152h4v4h-4zM280 152h4v4h-4zM472 152h4v4h-4zM228 156h4v4h-4zM280 156h4v4h-4zM472 156h4v4h-4zM232 160h4v4h-4zM280 160h4v4h-4zM472 160h4v4h-4zM236 164h4v4h-4zM280 164h4v4h-4zM468 164h4v4h-4zM84 168h4v4h-4zM240 168h4v4h-4zM468 168h4v4h-4zM80 172h4v4h-4zM464 172h4v4h-4zM244 176h4v4h-4zM284 176h4v4h-4zM464 176h4v4h-4zM76 180h4v4h-4zM284 180h4v4h-4zM460 180h4v4h-4zM248 184h4v4h-4zM284 184h4v4h-4zM72 188h4v4h-4zM288 188h4v4h-4zM456 188h4v4h-4zM72 192h4v4h-4zM252 192h4v4h-4zM288 192h4v4h-4zM452 192h4v4h-4zM252 196h4v4h-4zM292 196h4v4h-4zM448 196h4v4h-4zM68 200h4v4h-4zM292 200h4v4h-4zM444 200h4v4h-4zM68 204h4v4h-4zM256 204h4v4h-4zM296 204h4v4h-4zM440 204h4v4h-4zM68 208h4v4h-4zM256 208h4v4h-4zM436 208h4v4h-4zM68 212h4v4h-4zM256 212h4v4h-4zM300 212h4v4h-4zM432 212h4v4h-4zM256 216h4v4h-4zM308 216h4v4h-4zM428 216h4v4h-4zM68 220h4v4h-4zM256 220h4v4h-4zM312 220h4v4h-4zM420 220h4v4h-4zM256 224h4v4h-4zM320 224h4v4h-4zM416 224h4v4h-4zM72 228h4v4h-4zM256 228h4v4h-4zM328 228h8v4h-8zM404 228h4v4h-4zM344 232h12v4h-12zM380 232h12v4h-12zM76 236h4v4h-4zM252 236h4v4h-4zM252 240h4v4h-4zM80 244h4v4h-4zM84 248h4v4h-4zM248 248h4v4h-4zM88 252h4v4h-4zM248 252h4v4h-4zM92 256h4v4h-4zM244 256h4v4h-4zM96 260h4v4h-4zM100 264h4v4h-4zM240 264h4v4h-4zM108 268h4v4h-4zM236 268h4v4h-4zM112 272h4v4h-4zM232 272h4v4h-4zM228 276h4v4h-4zM128 280h4v4h-4zM224 280h4v4h-4zM136 284h8v4h-8zM212 284h8v4h-8zM168 288h8v4h-8zM192 288h12v4h-12zM488 328h20v4h-20zM516 328h16v4h-16zM472 332h8v4h-8zM536 332h8v4h-8zM464 336h4v4h-4zM548 336h4v4h-4zM456 340h4v4h-4zM556 340h4v4h-4zM452 344h4v4h-4zM560 344h4v4h-4zM440 356h4v4h-4zM436 360h4v4h-4zM432 368h4v4h-4zM428 376h4v4h-4zM428 380h4v4h-4zM424 392h4v4h-4zM424 396h4v4h-4zM424 400h4v4h-4zM424 404h4v4h-4zM424 408h4v4h-4zM424 412h4v4h-4zM424 416h4v4h-4zM424 420h4v4h-4zM428 432h4v4h-4zM432 440h4v4h-4zM436 448h4v4h-4zM440 452h4v4h-4zM444 456h4v4h-4zM568 456h4v4h-4zM448 460h4v4h-4zM564 460h4v4h-4zM556 464h4v4h-4zM460 468h4v4h-4zM548 468h4v4h-4zM472 472h4v4h-4zM540 472h4v4h-4zM488 476h40v4h-40z"/>
<path fill="#f8b452" d="M380 52h12v4h-12zM348 56h16v4h-16zM400 56h12v4h-12zM336 60h8v4h-8zM416 60h8v4h-8zM328 64h8v4h-8zM424 64h8v4h-8zM324 68h4v4h-4zM432 68h8v4h-8zM316 72h4v4h-4zM440 72h4v4h-4zM312 76h4v4h-4zM444 76h4v4h-4zM308 80h4v4h-4zM448 80h4v4h-4zM304 84h4v4h-4zM448 84h4v4h-4zM300 88h4v4h-4zM452 88h4v4h-4zM300 92h4v4h-4zM296 96h4v4h-4zM456 96h4v4h-4zM456 100h4v4h-4zM292 104h4v4h-4zM456 104h4v4h-4zM460 108h4v4h-4zM288 112h4v4h-4zM464 112h4v4h-4zM288 116h4v4h-4zM468 116h4v4h-4zM468 120h4v4h-4zM284 128h4v4h-4zM472 128h4v4h-4zM284 132h4v4h-4zM472 132h4v4h-4zM136 136h52v4h-52zM284 136h4v4h-4zM472 136h4v4h-4zM124 140h8v4h-8zM196 140h8v4h-8zM284 140h4v4h-4zM472 140h4v4h-4zM116 144h4v4h-4zM208 144h4v4h-4zM284 144h4v4h-4zM472 144h4v4h-4zM108 148h4v4h-4zM216 148h4v4h-4zM284 148h4v4h-4zM472 148h4v4h-4zM100 152h8v4h-8zM220 152h4v4h-4zM284 152h4v4h-4zM96 156h4v4h-4zM224 156h4v4h-4zM284 156h4v4h-4zM468 156h4v4h-4zM92 160h4v4h-4zM228 160h4v4h-4zM284 160h4v4h-4zM468 160h4v4h-4zM88 164h4v4h-4zM232 164h4v4h-4zM284 164h4v4h-4zM88 168h4v4h-4zM236 168h4v4h-4zM284 168h4v4h-4zM464 168h4v4h-4zM84 172h4v4h-4zM240 172h4v4h-4zM284 172h4v4h-4zM80 176h4v4h-4zM240 176h4v4h-4zM460 176h4v4h-4zM80 180h4v4h-4zM244 180h4v4h-4zM288 180h4v4h-4zM456 180h4v4h-4zM76 184h4v4h-4zM288 184h4v4h-4zM456 184h4v4h-4zM76 188h4v4h-4zM248 188h4v4h-4zM452 188h4v4h-4zM248 192h4v4h-4zM292 192h4v4h-4zM448 192h4v4h-4zM72 196h4v4h-4zM444 196h4v4h-4zM72 200h4v4h-4zM252 200h4v4h-4zM296 200h4v4h-4zM440 200h4v4h-4zM72 204h4v4h-4zM252 204h4v4h-4zM436 204h4v4h-4zM252 208h4v4h-4zM300 208h4v4h-4zM432 208h4v4h-4zM304 212h4v4h-4zM428 212h4v4h-4zM68 216h4v4h-4zM312 216h4v4h-4zM424 216h4v4h-4zM316 220h4v4h-4zM416 220h4v4h-4zM72 224h4v4h-4zM252 224h4v4h-4zM324 224h4v4h-4zM408 224h8v4h-8zM252 228h4v4h-4zM336 228h8v4h-8zM392 228h12v4h-12zM76 232h4v4h-4zM252 232h4v4h-4zM356 232h24v4h-24zM80 240h4v4h-4zM84 244h4v4h-4zM248 244h4v4h-4zM88 248h4v4h-4zM244 252h4v4h-4zM100 260h4v4h-4zM240 260h4v4h-4zM104 264h4v4h-4zM236 264h4v4h-4zM232 268h4v4h-4zM116 272h4v4h-4zM120 276h8v4h-8zM224 276h4v4h-4zM132 280h4v4h-4zM220 280h4v4h-4zM144 284h20v4h-20zM208 284h4v4h-4zM176 288h16v4h-16zM508 328h8v4h-8zM480 332h8v4h-8zM528 332h8v4h-8zM468 336h8v4h-8zM540 336h8v4h-8zM460 340h8v4h-8zM548 340h8v4h-8zM456 344h4v4h-4zM556 344h4v4h-4zM448 348h4v4h-4zM560 348h8v4h-8zM444 352h4v4h-4zM568 352h4v4h-4zM440 360h4v4h-4zM436 364h4v4h-4zM432 372h4v4h-4zM432 376h4v4h-4zM428 384h4v4h-4zM428 388h4v4h-4zM428 392h4v4h-4zM428 420h4v4h-4zM428 424h4v4h-4zM428 428h4v4h-4zM432 436h4v4h-4zM436 444h4v4h-4zM440 448h4v4h-4zM444 452h4v4h-4zM568 452h4v4h-4zM448 456h4v4h-4zM564 456h4v4h-4zM452 460h4v4h-4zM560 460h4v4h-4zM456 464h8v4h-8zM552 464h4v4h-4zM464 468h8v4h-8zM544 468h4v4h-4zM476 472h12v4h-12zM528 472h12v4h-12z"/>
<path fill="#f8ae51" d="M364 56h36v4h-36zM344 60h24v4h-24zM396 60h20v4h-20zM336 64h12v4h-12zM412 64h12v4h-12zM328 68h8v4h-8zM424 68h8v4h-8zM320 72h8v4h-8zM432 72h8v4h-8zM316 76h8v4h-8zM436 76h8v4h-8zM312 80h8v4h-8zM440 80h8v4h-8zM308 84h8v4h-8zM444 84h4v4h-4zM304 88h8v4h-8zM448 88h4v4h-4zM304 92h4v4h-4zM448 92h8v4h-8zM300 96h4v4h-4zM452 96h4v4h-4zM296 100h8v4h-8zM452 100h4v4h-4zM296 104h4v4h-4zM292 108h8v4h-8zM456 108h4v4h-4zM292 112h4v4h-4zM460 112h4v4h-4zM292 116h4v4h-4zM464 116h4v4h-4zM288 120h8v4h-8zM464 120h4v4h-4zM288 124h4v4h-4zM468 124h4v4h-4zM288 128h4v4h-4zM468 128h4v4h-4zM288 132h4v4h-4zM468 132h4v4h-4zM288 136h4v4h-4zM468 136h4v4h-4zM132 140h64v4h-64zM288 140h4v4h-4zM468 140h4v4h-4zM120 144h12v4h-12zM192 144h16v4h-16zM288 144h4v4h-4zM468 144h4v4h-4zM112 148h12v4h-12zM204 148h12v4h-12zM288 148h4v4h-4zM468 148h4v4h-4zM108 152h8v4h-8zM212 152h8v4h-8zM288 152h4v4h-4zM464 152h8v4h-8zM100 156h8v4h-8zM220 156h4v4h-4zM288 156h4v4h-4zM464 156h4v4h-4zM96 160h8v4h-8zM224 160h4v4h-4zM288 160h4v4h-4zM464 160h4v4h-4zM92 164h8v4h-8zM228 164h4v4h-4zM288 164h4v4h-4zM460 164h8v4h-8zM92 168h4v4h-4zM232 168h4v4h-4zM288 168h4v4h-4zM460 168h4v4h-4zM88 172h4v4h-4zM236 172h4v4h-4zM288 172h4v4h-4zM456 172h8v4h-8zM84 176h8v4h-8zM236 176h4v4h-4zM288 176h4v4h-4zM452 176h8v4h-8zM84 180h4v4h-4zM240 180h4v4h-4zM452 180h4v4h-4zM80 184h4v4h-4zM244 184h4v4h-4zM292 184h4v4h-4zM448 184h8v4h-8zM80 188h4v4h-4zM244 188h4v4h-4zM292 188h4v4h-4zM444 188h8v4h-8zM76 192h8v4h-8zM296 192h4v4h-4zM444 192h4v4h-4zM76 196h4v4h-4zM248 196h4v4h-4zM296 196h4v4h-4zM440 196h4v4h-4zM76 200h4v4h-4zM248 200h4v4h-4zM300 200h4v4h-4zM436 200h4v4h-4zM76 204h4v4h-4zM300 204h4v4h-4zM432 204h4v4h-4zM72 208h8v4h-8zM304 208h4v4h-4zM424 208h8v4h-8zM72 212h4v4h-4zM252 212h4v4h-4zM308 212h8v4h-8zM420 212h8v4h-8zM72 216h4v4h-4zM252 216h4v4h-4zM316 216h4v4h-4zM412 216h12v4h-12zM72 220h8v4h-8zM252 220h4v4h-4zM320 220h8v4h-8zM404 220h12v4h-12zM76 224h4v4h-4zM328 224h12v4h-12zM392 224h16v4h-16zM76 228h4v4h-4zM344 228h48v4h-48zM80 232h4v4h-4zM80 236h8v4h-8zM248 236h4v4h-4zM84 240h4v4h-4zM248 240h4v4h-4zM88 244h4v4h-4zM92 248h4v4h-4zM244 248h4v4h-4zM92 252h8v4h-8zM96 256h8v4h-8zM240 256h4v4h-4zM104 260h4v4h-4zM236 260h4v4h-4zM108 264h8v4h-8zM112 268h8v4h-8zM120 272h4v4h-4zM228 272h4v4h-4zM128 276h8v4h-8zM136 280h12v4h-12zM212 280h8v4h-8zM164 284h12v4h-12zM196 284h12v4h-12zM488 332h40v4h-40zM476 336h12v4h-12zM528 336h12v4h-12zM468 340h8v4h-8zM540 340h8v4h-8zM460 344h8v4h-8zM548 344h8v4h-8zM452 348h8v4h-8zM556 348h4v4h-4zM448 352h8v4h-8zM560 352h8v4h-8zM444 356h8v4h-8zM564 356h8v4h-8zM444 360h4v4h-4zM568 360h4v4h-4zM440 364h4v4h-4zM436 368h8v4h-8zM436 372h4v4h-4zM436 376h4v4h-4zM432 380h4v4h-4zM432 384h4v4h-4zM432 388h4v4h-4zM428 396h4v4h-4zM428 400h4v4h-4zM428 404h4v4h-4zM428 408h4v4h-4zM428 412h4v4h-4zM428 416h4v4h-4zM432 420h4v4h-4zM432 424h4v4h-4zM432 428h4v4h-4zM432 432h4v4h-4zM436 436h4v4h-4zM436 440h4v4h-4zM440 444h4v4h-4zM444 448h4v4h-4zM568 448h4v4h-4zM448 452h4v4h-4zM564 452h4v4h-4zM452 456h4v4h-4zM556 456h8v4h-8zM456 460h8v4h-8zM552 460h8v4h-8zM464 464h8v4h-8zM544 464h8v4h-8zM472 468h12v4h-12zM532 468h12v4h-12zM488 472h40v4h-40z"/>
<path fill="#f8a84d" d="M368 60h28v4h-28zM348 64h24v4h-24zM396 64h16v4h-16zM336 68h12v4h-12zM412 68h12v4h-12zM328 72h12v4h-12zM420 72h12v4h-12zM324 76h8v4h-8zM428 76h8v4h-8zM320 80h4v4h-4zM432 80h8v4h-8zM316 84h4v4h-4zM436 84h8v4h-8zM312 88h4v4h-4zM440 88h8v4h-8zM308 92h4v4h-4zM444 92h4v4h-4zM304 96h8v4h-8zM444 96h8v4h-8zM304 100h4v4h-4zM448 100h4v4h-4zM300 104h4v4h-4zM452 104h4v4h-4zM300 108h4v4h-4zM452 108h4v4h-4zM296 112h4v4h-4zM452 112h8v4h-8zM296 116h4v4h-4zM456 116h8v4h-8zM296 120h4v4h-4zM456 120h8v4h-8zM292 124h4v4h-4zM456 124h12v4h-12zM292 128h4v4h-4zM460 128h8v4h-8zM292 132h4v4h-4zM460 132h8v4h-8zM292 136h4v4h-4zM460 136h8v4h-8zM292 140h4v4h-4zM460 140h8v4h-8zM132 144h60v4h-60zM292 144h4v4h-4zM460 144h8v4h-8zM124 148h12v4h-12zM192 148h12v4h-12zM292 148h4v4h-4zM460 148h8v4h-8zM116 152h8v4h-8zM204 152h8v4h-8zM292 152h4v4h-4zM456 152h8v4h-8zM108 156h8v4h-8zM212 156h8v4h-8zM292 156h4v4h-4zM456 156h8v4h-8zM104 160h8v4h-8zM216 160h8v4h-8zM292 160h4v4h-4zM456 160h8v4h-8zM100 164h4v4h-4zM220 164h8v4h-8zM292 164h4v4h-4zM452 164h8v4h-8zM96 168h4v4h-4zM224 168h8v4h-8zM292 168h4v4h-4zM452 168h8v4h-8zM92 172h8v4h-8zM228 172h8v4h-8zM292 172h4v4h-4zM448 172h8v4h-8zM92 176h4v4h-4zM232 176h4v4h-4zM292 176h4v4h-4zM448 176h4v4h-4zM88 180h4v4h-4zM236 180h4v4h-4zM292 180h8v4h-8zM444 180h8v4h-8zM84 184h8v4h-8zM236 184h8v4h-8zM296 184h4v4h-4zM444 184h4v4h-4zM84 188h4v4h-4zM240 188h4v4h-4zM296 188h8v4h-8zM440 188h4v4h-4zM84 192h4v4h-4zM240 192h8v4h-8zM300 192h4v4h-4zM436 192h8v4h-8zM80 196h4v4h-4zM244 196h4v4h-4zM300 196h8v4h-8zM432 196h8v4h-8zM80 200h4v4h-4zM244 200h4v4h-4zM304 200h4v4h-4zM428 200h8v4h-8zM80 204h4v4h-4zM244 204h8v4h-8zM304 204h8v4h-8zM424 204h8v4h-8zM80 208h4v4h-4zM248 208h4v4h-4zM308 208h12v4h-12zM416 208h8v4h-8zM76 212h8v4h-8zM248 212h4v4h-4zM316 212h8v4h-8zM412 212h8v4h-8zM76 216h4v4h-4zM248 216h4v4h-4zM320 216h12v4h-12zM404 216h8v4h-8zM80 220h4v4h-4zM248 220h4v4h-4zM328 220h16v4h-16zM388 220h16v4h-16zM80 224h4v4h-4zM248 224h4v4h-4zM340 224h52v4h-52zM80 228h8v4h-8zM248 228h4v4h-4zM84 232h4v4h-4zM248 232h4v4h-4zM88 236h4v4h-4zM244 236h4v4h-4zM88 240h4v4h-4zM244 240h4v4h-4zM92 244h4v4h-4zM244 244h4v4h-4zM96 248h4v4h-4zM240 248h4v4h-4zM100 252h4v4h-4zM240 252h4v4h-4zM104 256h4v4h-4zM236 256h4v4h-4zM108 260h8v4h-8zM116 264h4v4h-4zM232 264h4v4h-4zM120 268h4v4h-4zM228 268h4v4h-4zM124 272h8v4h-8zM224 272h4v4h-4zM136 276h12v4h-12zM216 276h8v4h-8zM148 280h24v4h-24zM200 280h12v4h-12zM176 284h20v4h-20zM488 336h40v4h-40zM476 340h12v4h-12zM528 340h12v4h-12zM468 344h8v4h-8zM540 344h8v4h-8zM460 348h8v4h-8zM548 348h8v4h-8zM456 352h4v4h-4zM552 352h8v4h-8zM452 356h4v4h-4zM560 356h4v4h-4zM448 360h4v4h-4zM564 360h4v4h-4zM444 364h4v4h-4zM568 364h4v4h-4zM444 368h4v4h-4zM568 368h4v4h-4zM440 372h4v4h-4zM440 376h4v4h-4zM436 380h4v4h-4zM436 384h4v4h-4zM436 388h4v4h-4zM432 392h4v4h-4zM432 396h4v4h-4zM432 400h4v4h-4zM432 404h4v4h-4zM432 408h4v4h-4zM432 412h4v4h-4zM432 416h4v4h-4zM436 420h4v4h-4zM436 424h4v4h-4zM436 428h4v4h-4zM436 432h4v4h-4zM440 436h4v4h-4zM440 440h4v4h-4zM568 440h4v4h-4zM444 444h4v4h-4zM564 444h8v4h-8zM448 448h4v4h-4zM560 448h8v4h-8zM452 452h4v4h-4zM556 452h8v4h-8zM456 456h8v4h-8zM552 456h4v4h-4zM464 460h8v4h-8zM544 460h8v4h-8zM472 464h8v4h-8zM532 464h12v4h-12zM484 468h48v4h-48z"/>
<path fill="#f7a249" d="M372 64h24v4h-24zM348 68h28v4h-28zM388 68h24v4h-24zM340 72h12v4h-12zM408 72h12v4h-12zM332 76h8v4h-8zM420 76h8v4h-8zM324 80h8v4h-8zM424 80h8v4h-8zM320 84h8v4h-8zM432 84h4v4h-4zM316 88h8v4h-8zM436 88h4v4h-4zM312 92h8v4h-8zM436 92h8v4h-8zM312 96h4v4h-4zM440 96h4v4h-4zM308 100h4v4h-4zM444 100h4v4h-4zM304 104h8v4h-8zM444 104h8v4h-8zM304 108h4v4h-4zM448 108h4v4h-4zM300 112h8v4h-8zM448 112h4v4h-4zM300 116h4v4h-4zM448 116h8v4h-8zM300 120h4v4h-4zM452 120h4v4h-4zM296 124h8v4h-8zM452 124h4v4h-4zM296 128h4v4h-4zM452 128h8v4h-8zM296 132h4v4h-4zM452 132h8v4h-8zM296 136h4v4h-4zM452 136h8v4h-8zM296 140h4v4h-4zM452 140h8v4h-8zM296 144h4v4h-4zM452 144h8v4h-8zM136 148h56v4h-56zM296 148h4v4h-4zM452 148h8v4h-8zM124 152h12v4h-12zM192 152h12v4h-12zM296 152h4v4h-4zM452 152h4v4h-4zM116 156h8v4h-8zM200 156h12v4h-12zM296 156h4v4h-4zM452 156h4v4h-4zM112 160h8v4h-8zM208 160h8v4h-8zM296 160h4v4h-4zM448 160h8v4h-8zM104 164h8v4h-8zM216 164h4v4h-4zM296 164h4v4h-4zM448 164h4v4h-4zM100 168h8v4h-8zM220 168h4v4h-4zM296 168h4v4h-4zM448 168h4v4h-4zM100 172h4v4h-4zM224 172h4v4h-4zM296 172h8v4h-8zM444 172h4v4h-4zM96 176h4v4h-4zM224 176h8v4h-8zM296 176h8v4h-8zM444 176h4v4h-4zM92 180h8v4h-8zM228 180h8v4h-8zM300 180h4v4h-4zM440 180h4v4h-4zM92 184h4v4h-4zM232 184h4v4h-4zM300 184h8v4h-8zM436 184h8v4h-8zM88 188h4v4h-4zM232 188h8v4h-8zM304 188h4v4h-4zM432 188h8v4h-8zM88 192h4v4h-4zM236 192h4v4h-4zM304 192h8v4h-8zM428 192h8v4h-8zM84 196h8v4h-8zM236 196h8v4h-8zM308 196h4v4h-4zM424 196h8v4h-8zM84 200h4v4h-4zM240 200h4v4h-4zM308 200h8v4h-8zM420 200h8v4h-8zM84 204h4v4h-4zM240 204h4v4h-4zM312 204h12v4h-12zM416 204h8v4h-8zM84 208h4v4h-4zM240 208h8v4h-8zM320 208h8v4h-8zM408 208h8v4h-8zM84 212h4v4h-4zM244 212h4v4h-4zM324 212h12v4h-12zM400 212h12v4h-12zM80 216h8v4h-8zM244 216h4v4h-4zM332 216h16v4h-16zM384 216h20v4h-20zM84 220h4v4h-4zM244 220h4v4h-4zM344 220h44v4h-44zM84 224h4v4h-4zM244 224h4v4h-4zM88 228h4v4h-4zM240 228h8v4h-8zM88 232h4v4h-4zM240 232h8v4h-8zM92 236h4v4h-4zM240 236h4v4h-4zM92 240h8v4h-8zM240 240h4v4h-4zM96 244h4v4h-4zM236 244h8v4h-8zM100 248h4v4h-4zM236 248h4v4h-4zM104 252h4v4h-4zM232 252h8v4h-8zM108 256h8v4h-8zM232 256h4v4h-4zM116 260h4v4h-4zM228 260h8v4h-8zM120 264h8v4h-8zM224 264h8v4h-8zM124 268h8v4h-8zM220 268h8v4h-8zM132 272h12v4h-12zM216 272h8v4h-8zM148 276h20v4h-20zM200 276h16v4h-16zM172 280h28v4h-28zM488 340h40v4h-40zM476 344h12v4h-12zM524 344h16v4h-16zM468 348h8v4h-8zM536 348h12v4h-12zM460 352h8v4h-8zM544 352h8v4h-8zM456 356h8v4h-8zM552 356h8v4h-8zM452 360h8v4h-8zM556 360h8v4h-8zM448 364h8v4h-8zM560 364h8v4h-8zM448 368h4v4h-4zM564 368h4v4h-4zM444 372h4v4h-4zM568 372h4v4h-4zM444 376h4v4h-4zM568 376h4v4h-4zM440 380h4v4h-4zM440 384h4v4h-4zM440 388h4v4h-4zM436 392h4v4h-4zM436 396h4v4h-4zM436 400h4v4h-4zM436 404h4v4h-4zM436 408h4v4h-4zM436 412h4v4h-4zM436 416h4v4h-4zM440 420h4v4h-4zM440 424h4v4h-4zM440 428h4v4h-4zM440 432h8v4h-8zM568 432h4v4h-4zM444 436h4v4h-4zM568 436h4v4h-4zM444 440h8v4h-8zM564 440h4v4h-4zM448 444h8v4h-8zM560 444h4v4h-4zM452 448h8v4h-8zM556 448h4v4h-4zM456 452h8v4h-8zM548 452h8v4h-8zM464 456h8v4h-8zM544 456h8v4h-8zM472 460h8v4h-8zM532 460h12v4h-12zM480 464h52v4h-52z"/>
<path fill="#f79c45" d="M376 68h12v4h-12zM352 72h56v4h-56zM340 76h12v4h-12zM404 76h16v4h-16zM332 80h12v4h-12zM416 80h8v4h-8zM328 84h8v4h-8zM424 84h8v4h-8zM324 88h4v4h-4zM428 88h8v4h-8zM320 92h4v4h-4zM432 92h4v4h-4zM316 96h4v4h-4zM436 96h4v4h-4zM312 100h8v4h-8zM436 100h8v4h-8zM312 104h4v4h-4zM440 104h4v4h-4zM308 108h4v4h-4zM440 108h8v4h-8zM308 112h4v4h-4zM444 112h4v4h-4zM304 116h4v4h-4zM444 116h4v4h-4zM304 120h4v4h-4zM444 120h8v4h-8zM304 124h4v4h-4zM448 124h4v4h-4zM300 128h8v4h-8zM448 128h4v4h-4zM300 132h4v4h-4zM448 132h4v4h-4zM300 136h4v4h-4zM448 136h4v4h-4zM300 140h4v4h-4zM448 140h4v4h-4zM300 144h4v4h-4zM448 144h4v4h-4zM300 148h4v4h-4zM448 148h4v4h-4zM136 152h56v4h-56zM300 152h4v4h-4zM448 152h4v4h-4zM124 156h12v4h-12zM188 156h12v4h-12zM300 156h4v4h-4zM444 156h8v4h-8zM120 160h8v4h-8zM200 160h8v4h-8zM300 160h4v4h-4zM444 160h4v4h-4zM112 164h8v4h-8zM208 164h8v4h-8zM300 164h4v4h-4zM444 164h4v4h-4zM108 168h8v4h-8zM212 168h8v4h-8zM300 168h8v4h-8zM440 168h8v4h-8zM104 172h8v4h-8zM216 172h8v4h-8zM304 172h4v4h-4zM440 172h4v4h-4zM100 176h8v4h-8zM220 176h4v4h-4zM304 176h4v4h-4zM436 176h8v4h-8zM100 180h4v4h-4zM224 180h4v4h-4zM304 180h8v4h-8zM432 180h8v4h-8zM96 184h4v4h-4zM224 184h8v4h-8zM308 184h4v4h-4zM432 184h4v4h-4zM92 188h8v4h-8zM228 188h4v4h-4zM308 188h8v4h-8zM428 188h4v4h-4zM92 192h4v4h-4zM232 192h4v4h-4zM312 192h4v4h-4zM424 192h4v4h-4zM92 196h4v4h-4zM232 196h4v4h-4zM312 196h8v4h-8zM420 196h4v4h-4zM88 200h8v4h-8zM232 200h8v4h-8zM316 200h8v4h-8zM412 200h8v4h-8zM88 204h4v4h-4zM236 204h4v4h-4zM324 204h8v4h-8zM404 204h12v4h-12zM88 208h4v4h-4zM236 208h4v4h-4zM328 208h12v4h-12zM396 208h12v4h-12zM88 212h4v4h-4zM236 212h8v4h-8zM336 212h20v4h-20zM380 212h20v4h-20zM88 216h4v4h-4zM236 216h8v4h-8zM348 216h36v4h-36zM88 220h4v4h-4zM236 220h8v4h-8zM88 224h4v4h-4zM236 224h8v4h-8zM92 228h4v4h-4zM236 228h4v4h-4zM92 232h8v4h-8zM236 232h4v4h-4zM96 236h4v4h-4zM236 236h4v4h-4zM100 240h4v4h-4zM232 240h8v4h-8zM100 244h8v4h-8zM232 244h4v4h-4zM104 248h8v4h-8zM232 248h4v4h-4zM108 252h8v4h-8zM228 252h4v4h-4zM116 256h4v4h-4zM224 256h8v4h-8zM120 260h8v4h-8zM220 260h8v4h-8zM128 264h4v4h-4zM216 264h8v4h-8zM132 268h12v4h-12zM212 268h8v4h-8zM144 272h24v4h-24zM200 272h16v4h-16zM168 276h32v4h-32zM488 344h36v4h-36zM476 348h12v4h-12zM524 348h12v4h-12zM468 352h8v4h-8zM536 352h8v4h-8zM464 356h8v4h-8zM544 356h8v4h-8zM460 360h4v4h-4zM548 360h8v4h-8zM456 364h4v4h-4zM556 364h4v4h-4zM452 368h4v4h-4zM560 368h4v4h-4zM448 372h8v4h-8zM560 372h8v4h-8zM448 376h4v4h-4zM564 376h4v4h-4zM444 380h4v4h-4zM568 380h4v4h-4zM444 384h4v4h-4zM568 384h4v4h-4zM444 388h4v4h-4zM440 392h4v4h-4zM440 396h4v4h-4zM440 400h4v4h-4zM440 404h4v4h-4zM440 408h4v4h-4zM440 412h4v4h-4zM440 416h4v4h-4zM444 420h4v4h-4zM444 424h4v4h-4zM568 424h4v4h-4zM444 428h4v4h-4zM568 428h4v4h-4zM448 432h4v4h-4zM564 432h4v4h-4zM448 436h4v4h-4zM560 436h8v4h-8zM452 440h4v4h-4zM560 440h4v4h-4zM456 444h4v4h-4zM552 444h8v4h-8zM460 448h4v4h-4zM548 448h8v4h-8zM464 452h8v4h-8zM544 452h4v4h-4zM472 456h8v4h-8zM532 456h12v4h-12zM480 460h52v4h-52z"/>
<path fill="#f79641" d="M352 76h52v4h-52zM344 80h12v4h-12zM404 80h12v4h-12zM336 84h8v4h-8zM412 84h12v4h-12zM328 88h8v4h-8zM420 88h8v4h-8zM324 92h8v4h-8zM424 92h8v4h-8zM320 96h8v4h-8zM428 96h8v4h-8zM320 100h4v4h-4zM432 100h4v4h-4zM316 104h4v4h-4zM432 104h8v4h-8zM312 108h8v4h-8zM436 108h4v4h-4zM312 112h4v4h-4zM436 112h8v4h-8zM308 116h8v4h-8zM440 116h4v4h-4zM308 120h4v4h-4zM440 120h4v4h-4zM308 124h4v4h-4zM440 124h8v4h-8zM308 128h4v4h-4zM444 128h4v4h-4zM304 132h8v4h-8zM444 132h4v4h-4zM304 136h4v4h-4zM444 136h4v4h-4zM304 140h4v4h-4zM444 140h4v4h-4zM304 144h4v4h-4zM444 144h4v4h-4zM304 148h4v4h-4zM444 148h4v4h-4zM304 152h4v4h-4zM440 152h8v4h-8zM136 156h52v4h-52zM304 156h4v4h-4zM440 156h4v4h-4zM128 160h12v4h-12zM188 160h12v4h-12zM304 160h4v4h-4zM440 160h4v4h-4zM120 164h8v4h-8zM196 164h12v4h-12zM304 164h8v4h-8zM436 164h8v4h-8zM116 168h8v4h-8zM204 168h8v4h-8zM308 168h4v4h-4zM436 168h4v4h-4zM112 172h4v4h-4zM208 172h8v4h-8zM308 172h4v4h-4zM432 172h8v4h-8zM108 176h4v4h-4zM212 176h8v4h-8zM308 176h8v4h-8zM432 176h4v4h-4zM104 180h4v4h-4zM216 180h8v4h-8zM312 180h4v4h-4zM428 180h4v4h-4zM100 184h8v4h-8zM220 184h4v4h-4zM312 184h8v4h-8zM424 184h8v4h-8zM100 188h4v4h-4zM224 188h4v4h-4zM316 188h4v4h-4zM420 188h8v4h-8zM96 192h8v4h-8zM224 192h8v4h-8zM316 192h8v4h-8zM416 192h8v4h-8zM96 196h4v4h-4zM228 196h4v4h-4zM320 196h8v4h-8zM412 196h8v4h-8zM96 200h4v4h-4zM228 200h4v4h-4zM324 200h12v4h-12zM404 200h8v4h-8zM92 204h4v4h-4zM228 204h8v4h-8zM332 204h12v4h-12zM392 204h12v4h-12zM92 208h4v4h-4zM232 208h4v4h-4zM340 208h56v4h-56zM92 212h4v4h-4zM232 212h4v4h-4zM356 212h24v4h-24zM92 216h4v4h-4zM232 216h4v4h-4zM92 220h4v4h-4zM232 220h4v4h-4zM92 224h8v4h-8zM232 224h4v4h-4zM96 228h4v4h-4zM232 228h4v4h-4zM100 232h4v4h-4zM232 232h4v4h-4zM100 236h4v4h-4zM228 236h8v4h-8zM104 240h4v4h-4zM228 240h4v4h-4zM108 244h4v4h-4zM228 244h4v4h-4zM112 248h4v4h-4zM224 248h8v4h-8zM116 252h4v4h-4zM220 252h8v4h-8zM120 256h8v4h-8zM220 256h4v4h-4zM128 260h4v4h-4zM216 260h4v4h-4zM132 264h8v4h-8zM208 264h8v4h-8zM144 268h20v4h-20zM200 268h12v4h-12zM168 272h32v4h-32zM488 348h36v4h-36zM476 352h16v4h-16zM524 352h12v4h-12zM472 356h8v4h-8zM536 356h8v4h-8zM464 360h8v4h-8zM544 360h4v4h-4zM460 364h8v4h-8zM548 364h8v4h-8zM456 368h8v4h-8zM552 368h8v4h-8zM456 372h4v4h-4zM556 372h4v4h-4zM452 376h4v4h-4zM560 376h4v4h-4zM448 380h8v4h-8zM560 380h8v4h-8zM448 384h4v4h-4zM564 384h4v4h-4zM448 388h4v4h-4zM568 388h4v4h-4zM444 392h4v4h-4zM568 392h4v4h-4zM444 396h4v4h-4zM568 396h4v4h-4zM444 400h4v4h-4zM444 404h4v4h-4zM444 408h4v4h-4zM444 412h4v4h-4zM568 412h4v4h-4zM444 416h4v4h-4zM568 416h4v4h-4zM448 420h4v4h-4zM568 420h4v4h-4zM448 424h4v4h-4zM564 424h4v4h-4zM448 428h4v4h-4zM564 428h4v4h-4zM452 432h4v4h-4zM560 432h4v4h-4zM452 436h4v4h-4zM556 436h4v4h-4zM456 440h4v4h-4zM552 440h8v4h-8zM460 444h4v4h-4zM548 444h4v4h-4zM464 448h8v4h-8zM540 448h8v4h-8zM472 452h8v4h-8zM532 452h12v4h-12zM480 456h32v4h-32zM516 456h16v4h-16z"/>
<path fill="#f5913f" d="M356 80h48v4h-48zM344 84h12v4h-12zM400 84h12v4h-12zM336 88h8v4h-8zM412 88h8v4h-8zM332 92h8v4h-8zM416 92h8v4h-8zM328 96h4v4h-4zM424 96h4v4h-4zM324 100h4v4h-4zM424 100h8v4h-8zM320 104h4v4h-4zM428 104h4v4h-4zM320 108h4v4h-4zM432 108h4v4h-4zM316 112h4v4h-4zM432 112h4v4h-4zM316 116h4v4h-4zM436 116h4v4h-4zM312 120h4v4h-4zM436 120h4v4h-4zM312 124h4v4h-4zM436 124h4v4h-4zM312 128h4v4h-4zM436 128h8v4h-8zM312 132h4v4h-4zM440 132h4v4h-4zM308 136h4v4h-4zM440 136h4v4h-4zM308 140h4v4h-4zM440 140h4v4h-4zM308 144h4v4h-4zM440 144h4v4h-4zM308 148h4v4h-4zM436 148h8v4h-8zM308 152h4v4h-4zM436 152h4v4h-4zM308 156h4v4h-4zM436 156h4v4h-4zM140 160h48v4h-48zM308 160h8v4h-8zM436 160h4v4h-4zM128 164h12v4h-12zM188 164h8v4h-8zM312 164h4v4h-4zM432 164h4v4h-4zM124 168h4v4h-4zM196 168h8v4h-8zM312 168h4v4h-4zM432 168h4v4h-4zM116 172h8v4h-8zM204 172h4v4h-4zM312 172h4v4h-4zM428 172h4v4h-4zM112 176h8v4h-8zM208 176h4v4h-4zM316 176h4v4h-4zM424 176h8v4h-8zM108 180h8v4h-8zM212 180h4v4h-4zM316 180h4v4h-4zM420 180h8v4h-8zM108 184h4v4h-4zM216 184h4v4h-4zM320 184h4v4h-4zM416 184h8v4h-8zM104 188h4v4h-4zM216 188h8v4h-8zM320 188h8v4h-8zM412 188h8v4h-8zM104 192h4v4h-4zM220 192h4v4h-4zM324 192h8v4h-8zM408 192h8v4h-8zM100 196h4v4h-4zM220 196h8v4h-8zM328 196h12v4h-12zM400 196h12v4h-12zM100 200h4v4h-4zM224 200h4v4h-4zM336 200h12v4h-12zM392 200h12v4h-12zM96 204h4v4h-4zM224 204h4v4h-4zM344 204h48v4h-48zM96 208h4v4h-4zM224 208h8v4h-8zM96 212h4v4h-4zM228 212h4v4h-4zM96 216h4v4h-4zM228 216h4v4h-4zM96 220h4v4h-4zM228 220h4v4h-4zM100 224h4v4h-4zM228 224h4v4h-4zM100 228h4v4h-4zM228 228h4v4h-4zM104 232h4v4h-4zM224 232h8v4h-8zM104 236h4v4h-4zM224 236h4v4h-4zM108 240h4v4h-4zM224 240h4v4h-4zM112 244h4v4h-4zM220 244h8v4h-8zM116 248h4v4h-4zM220 248h4v4h-4zM120 252h8v4h-8zM216 252h4v4h-4zM128 256h4v4h-4zM212 256h8v4h-8zM132 260h8v4h-8zM208 260h8v4h-8zM140 264h24v4h-24zM196 264h12v4h-12zM164 268h36v4h-36zM492 352h32v4h-32zM480 356h8v4h-8zM524 356h12v4h-12zM472 360h8v4h-8zM536 360h8v4h-8zM468 364h4v4h-4zM540 364h8v4h-8zM464 368h4v4h-4zM548 368h4v4h-4zM460 372h4v4h-4zM552 372h4v4h-4zM456 376h4v4h-4zM556 376h4v4h-4zM456 380h4v4h-4zM556 380h4v4h-4zM452 384h4v4h-4zM560 384h4v4h-4zM452 388h4v4h-4zM560 388h8v4h-8zM448 392h4v4h-4zM564 392h4v4h-4zM448 396h4v4h-4zM564 396h4v4h-4zM448 400h4v4h-4zM564 400h8v4h-8zM448 404h4v4h-4zM568 404h4v4h-4zM448 408h4v4h-4zM568 408h4v4h-4zM448 412h4v4h-4zM564 412h4v4h-4zM448 416h4v4h-4zM564 416h4v4h-4zM564 420h4v4h-4zM452 424h4v4h-4zM560 424h4v4h-4zM452 428h4v4h-4zM556 428h8v4h-8zM456 432h4v4h-4zM556 432h4v4h-4zM456 436h4v4h-4zM552 436h4v4h-4zM460 440h4v4h-4zM548 440h4v4h-4zM464 444h8v4h-8zM540 444h8v4h-8zM472 448h4v4h-4zM536 448h4v4h-4zM480 452h12v4h-12zM524 452h8v4h-8zM512 456h4v4h-4z"/>
<path fill="#f48d3c" d="M356 84h44v4h-44zM344 88h8v4h-8zM404 88h8v4h-8zM340 92h4v4h-4zM412 92h4v4h-4zM332 96h8v4h-8zM416 96h8v4h-8zM328 100h4v4h-4zM420 100h4v4h-4zM324 104h4v4h-4zM424 104h4v4h-4zM324 108h4v4h-4zM428 108h4v4h-4zM320 112h4v4h-4zM428 112h4v4h-4zM320 116h4v4h-4zM432 116h4v4h-4zM316 120h4v4h-4zM432 120h4v4h-4zM316 124h4v4h-4zM432 124h4v4h-4zM316 128h4v4h-4zM432 128h4v4h-4zM436 132h4v4h-4zM312 136h4v4h-4zM436 136h4v4h-4zM312 140h4v4h-4zM436 140h4v4h-4zM312 144h4v4h-4zM436 144h4v4h-4zM312 148h4v4h-4zM432 148h4v4h-4zM312 152h4v4h-4zM432 152h4v4h-4zM312 156h4v4h-4zM432 156h4v4h-4zM432 160h4v4h-4zM140 164h48v4h-48zM316 164h4v4h-4zM428 164h4v4h-4zM128 168h8v4h-8zM188 168h8v4h-8zM316 168h4v4h-4zM428 168h4v4h-4zM124 172h4v4h-4zM196 172h8v4h-8zM316 172h4v4h-4zM424 172h4v4h-4zM120 176h4v4h-4zM204 176h4v4h-4zM320 176h4v4h-4zM420 176h4v4h-4zM116 180h4v4h-4zM208 180h4v4h-4zM320 180h8v4h-8zM416 180h4v4h-4zM112 184h4v4h-4zM208 184h8v4h-8zM324 184h4v4h-4zM412 184h4v4h-4zM108 188h4v4h-4zM212 188h4v4h-4zM328 188h8v4h-8zM408 188h4v4h-4zM108 192h4v4h-4zM216 192h4v4h-4zM332 192h8v4h-8zM400 192h8v4h-8zM104 196h4v4h-4zM216 196h4v4h-4zM340 196h8v4h-8zM392 196h8v4h-8zM104 200h4v4h-4zM220 200h4v4h-4zM348 200h44v4h-44zM100 204h4v4h-4zM220 204h4v4h-4zM100 208h4v4h-4zM220 208h4v4h-4zM100 212h4v4h-4zM224 212h4v4h-4zM100 216h4v4h-4zM224 216h4v4h-4zM100 220h4v4h-4zM224 220h4v4h-4zM104 224h4v4h-4zM224 224h4v4h-4zM104 228h4v4h-4zM220 228h8v4h-8zM108 232h4v4h-4zM220 232h4v4h-4zM108 236h4v4h-4zM220 236h4v4h-4zM112 240h4v4h-4zM216 240h8v4h-8zM116 244h4v4h-4zM216 244h4v4h-4zM120 248h8v4h-8zM212 248h8v4h-8zM128 252h4v4h-4zM208 252h8v4h-8zM132 256h8v4h-8zM204 256h8v4h-8zM140 260h8v4h-8zM196 260h12v4h-12zM164 264h32v4h-32zM488 356h36v4h-36zM480 360h8v4h-8zM528 360h8v4h-8zM472 364h4v4h-4zM536 364h4v4h-4zM468 368h4v4h-4zM540 368h8v4h-8zM464 372h4v4h-4zM548 372h4v4h-4zM460 376h4v4h-4zM552 376h4v4h-4zM552 380h4v4h-4zM456 384h4v4h-4zM556 384h4v4h-4zM556 388h4v4h-4zM452 392h4v4h-4zM560 392h4v4h-4zM452 396h4v4h-4zM560 396h4v4h-4zM452 400h4v4h-4zM452 404h4v4h-4zM564 404h4v4h-4zM452 408h4v4h-4zM564 408h4v4h-4zM452 412h4v4h-4zM452 416h4v4h-4zM560 416h4v4h-4zM452 420h4v4h-4zM560 420h4v4h-4zM456 424h4v4h-4zM556 424h4v4h-4zM456 428h4v4h-4zM552 428h4v4h-4zM460 432h4v4h-4zM552 432h4v4h-4zM460 436h4v4h-4zM548 436h4v4h-4zM464 440h8v4h-8zM544 440h4v4h-4zM472 444h4v4h-4zM536 444h4v4h-4zM476 448h8v4h-8zM528 448h8v4h-8zM492 452h32v4h-32z"/>
<path fill="#f2883a" d="M352 88h20v4h-20zM388 88h16v4h-16zM344 92h8v4h-8zM404 92h8v4h-8zM340 96h4v4h-4zM412 96h4v4h-4zM332 100h8v4h-8zM416 100h4v4h-4zM328 104h8v4h-8zM420 104h4v4h-4zM328 108h4v4h-4zM420 108h8v4h-8zM324 112h4v4h-4zM424 112h4v4h-4zM324 116h4v4h-4zM424 116h8v4h-8zM320 120h4v4h-4zM428 120h4v4h-4zM320 124h4v4h-4zM428 124h4v4h-4zM428 128h4v4h-4zM316 132h4v4h-4zM432 132h4v4h-4zM316 136h4v4h-4zM432 136h4v4h-4zM316 140h4v4h-4zM432 140h4v4h-4zM316 144h4v4h-4zM432 144h4v4h-4zM316 148h4v4h-4zM316 152h4v4h-4zM428 152h4v4h-4zM316 156h4v4h-4zM428 156h4v4h-4zM316 160h4v4h-4zM428 160h4v4h-4zM320 164h4v4h-4zM424 164h4v4h-4zM136 168h12v4h-12zM176 168h12v4h-12zM320 168h4v4h-4zM420 168h8v4h-8zM128 172h8v4h-8zM188 172h8v4h-8zM320 172h4v4h-4zM420 172h4v4h-4zM124 176h4v4h-4zM196 176h8v4h-8zM324 176h4v4h-4zM416 176h4v4h-4zM120 180h4v4h-4zM200 180h8v4h-8zM328 180h4v4h-4zM412 180h4v4h-4zM116 184h4v4h-4zM204 184h4v4h-4zM328 184h8v4h-8zM408 184h4v4h-4zM112 188h4v4h-4zM208 188h4v4h-4zM336 188h4v4h-4zM400 188h8v4h-8zM112 192h4v4h-4zM212 192h4v4h-4zM340 192h8v4h-8zM392 192h8v4h-8zM108 196h4v4h-4zM212 196h4v4h-4zM348 196h44v4h-44zM108 200h4v4h-4zM216 200h4v4h-4zM104 204h4v4h-4zM216 204h4v4h-4zM104 208h4v4h-4zM216 208h4v4h-4zM104 212h4v4h-4zM220 212h4v4h-4zM104 216h4v4h-4zM220 216h4v4h-4zM104 220h4v4h-4zM220 220h4v4h-4zM220 224h4v4h-4zM108 228h4v4h-4zM216 228h4v4h-4zM112 232h4v4h-4zM216 232h4v4h-4zM112 236h4v4h-4zM216 236h4v4h-4zM116 240h4v4h-4zM212 240h4v4h-4zM120 244h4v4h-4zM212 244h4v4h-4zM128 248h4v4h-4zM208 248h4v4h-4zM132 252h4v4h-4zM204 252h4v4h-4zM140 256h4v4h-4zM200 256h4v4h-4zM148 260h20v4h-20zM184 260h12v4h-12zM488 360h20v4h-20zM512 360h16v4h-16zM476 364h8v4h-8zM528 364h8v4h-8zM472 368h4v4h-4zM536 368h4v4h-4zM468 372h4v4h-4zM540 372h8v4h-8zM464 376h4v4h-4zM544 376h8v4h-8zM460 380h4v4h-4zM548 380h4v4h-4zM460 384h4v4h-4zM552 384h4v4h-4zM456 388h4v4h-4zM456 392h4v4h-4zM556 392h4v4h-4zM456 396h4v4h-4zM556 396h4v4h-4zM456 400h4v4h-4zM560 400h4v4h-4zM560 404h4v4h-4zM456 408h4v4h-4zM560 408h4v4h-4zM456 412h4v4h-4zM560 412h4v4h-4zM456 416h4v4h-4zM556 416h4v4h-4zM456 420h4v4h-4zM556 420h4v4h-4zM552 424h4v4h-4zM460 428h4v4h-4zM548 428h4v4h-4zM548 432h4v4h-4zM464 436h4v4h-4zM544 436h4v4h-4zM472 440h4v4h-4zM536 440h8v4h-8zM476 444h8v4h-8zM528 444h8v4h-8zM484 448h44v4h-44z"/>
<path fill="#f18437" d="M372 88h16v4h-16zM352 92h12v4h-12zM392 92h12v4h-12zM344 96h8v4h-8zM404 96h8v4h-8zM340 100h4v4h-4zM408 100h8v4h-8zM336 104h4v4h-4zM412 104h8v4h-8zM332 108h4v4h-4zM416 108h4v4h-4zM328 112h4v4h-4zM420 112h4v4h-4zM420 116h4v4h-4zM324 120h4v4h-4zM424 120h4v4h-4zM324 124h4v4h-4zM424 124h4v4h-4zM320 128h4v4h-4zM424 128h4v4h-4zM320 132h4v4h-4zM428 132h4v4h-4zM320 136h4v4h-4zM428 136h4v4h-4zM320 140h4v4h-4zM428 140h4v4h-4zM320 144h4v4h-4zM428 144h4v4h-4zM320 148h4v4h-4zM428 148h4v4h-4zM320 152h4v4h-4zM424 152h4v4h-4zM320 156h4v4h-4zM424 156h4v4h-4zM320 160h4v4h-4zM424 160h4v4h-4zM324 164h4v4h-4zM420 164h4v4h-4zM148 168h28v4h-28zM324 168h4v4h-4zM416 168h4v4h-4zM136 172h12v4h-12zM180 172h8v4h-8zM324 172h8v4h-8zM416 172h4v4h-4zM128 176h8v4h-8zM188 176h8v4h-8zM328 176h4v4h-4zM412 176h4v4h-4zM124 180h4v4h-4zM196 180h4v4h-4zM332 180h4v4h-4zM408 180h4v4h-4zM120 184h4v4h-4zM200 184h4v4h-4zM336 184h4v4h-4zM400 184h8v4h-8zM116 188h4v4h-4zM204 188h4v4h-4zM340 188h8v4h-8zM392 188h8v4h-8zM116 192h4v4h-4zM208 192h4v4h-4zM348 192h16v4h-16zM376 192h16v4h-16zM112 196h4v4h-4zM208 196h4v4h-4zM112 200h4v4h-4zM212 200h4v4h-4zM108 204h4v4h-4zM212 204h4v4h-4zM108 208h4v4h-4zM108 212h4v4h-4zM216 212h4v4h-4zM108 216h4v4h-4zM216 216h4v4h-4zM108 220h4v4h-4zM216 220h4v4h-4zM108 224h4v4h-4zM216 224h4v4h-4zM112 228h4v4h-4zM212 228h4v4h-4zM116 232h4v4h-4zM212 232h4v4h-4zM116 236h4v4h-4zM212 236h4v4h-4zM120 240h4v4h-4zM208 240h4v4h-4zM124 244h8v4h-8zM208 244h4v4h-4zM132 248h4v4h-4zM204 248h4v4h-4zM136 252h8v4h-8zM200 252h4v4h-4zM144 256h20v4h-20zM188 256h12v4h-12zM168 260h16v4h-16zM508 360h4v4h-4zM484 364h12v4h-12zM520 364h8v4h-8zM476 368h8v4h-8zM528 368h8v4h-8zM472 372h4v4h-4zM536 372h4v4h-4zM468 376h4v4h-4zM540 376h4v4h-4zM464 380h4v4h-4zM544 380h4v4h-4zM464 384h4v4h-4zM548 384h4v4h-4zM460 388h4v4h-4zM552 388h4v4h-4zM460 392h4v4h-4zM552 392h4v4h-4zM552 396h4v4h-4zM556 400h4v4h-4zM456 404h4v4h-4zM556 404h4v4h-4zM556 408h4v4h-4zM556 412h4v4h-4zM552 416h4v4h-4zM460 420h4v4h-4zM552 420h4v4h-4zM460 424h4v4h-4zM548 424h4v4h-4zM464 428h4v4h-4zM544 428h4v4h-4zM464 432h4v4h-4zM544 432h4v4h-4zM468 436h8v4h-8zM536 436h8v4h-8zM476 440h4v4h-4zM532 440h4v4h-4zM484 444h8v4h-8zM520 444h8v4h-8z"/>
<path fill="#ef7f35" d="M364 92h28v4h-28zM352 96h8v4h-8zM392 96h12v4h-12zM344 100h8v4h-8zM404 100h4v4h-4zM340 104h4v4h-4zM408 104h4v4h-4zM336 108h4v4h-4zM412 108h4v4h-4zM332 112h4v4h-4zM416 112h4v4h-4zM328 116h4v4h-4zM416 116h4v4h-4zM328 120h4v4h-4zM420 120h4v4h-4zM420 124h4v4h-4zM324 128h4v4h-4zM324 132h4v4h-4zM424 132h4v4h-4zM324 136h4v4h-4zM424 136h4v4h-4zM324 140h4v4h-4zM424 140h4v4h-4zM324 144h4v4h-4zM424 144h4v4h-4zM324 148h4v4h-4zM424 148h4v4h-4zM324 152h4v4h-4zM420 152h4v4h-4zM324 156h4v4h-4zM420 156h4v4h-4zM324 160h4v4h-4zM416 160h8v4h-8zM328 164h4v4h-4zM416 164h4v4h-4zM328 168h4v4h-4zM412 168h4v4h-4zM148 172h32v4h-32zM332 172h4v4h-4zM408 172h8v4h-8zM136 176h8v4h-8zM180 176h8v4h-8zM332 176h4v4h-4zM404 176h8v4h-8zM128 180h8v4h-8zM188 180h8v4h-8zM336 180h8v4h-8zM400 180h8v4h-8zM124 184h4v4h-4zM196 184h4v4h-4zM340 184h8v4h-8zM392 184h8v4h-8zM120 188h4v4h-4zM200 188h4v4h-4zM348 188h16v4h-16zM380 188h12v4h-12zM120 192h4v4h-4zM204 192h4v4h-4zM364 192h12v4h-12zM116 196h4v4h-4zM204 196h4v4h-4zM208 200h4v4h-4zM112 204h4v4h-4zM208 204h4v4h-4zM112 208h4v4h-4zM212 208h4v4h-4zM112 212h4v4h-4zM212 212h4v4h-4zM212 216h4v4h-4zM112 220h4v4h-4zM212 220h4v4h-4zM112 224h4v4h-4zM212 224h4v4h-4zM116 228h4v4h-4zM208 232h4v4h-4zM120 236h4v4h-4zM208 236h4v4h-4zM124 240h4v4h-4zM204 240h4v4h-4zM132 244h4v4h-4zM200 244h8v4h-8zM136 248h4v4h-4zM196 248h8v4h-8zM144 252h8v4h-8zM192 252h8v4h-8zM164 256h24v4h-24zM496 364h24v4h-24zM484 368h8v4h-8zM520 368h8v4h-8zM476 372h8v4h-8zM532 372h4v4h-4zM472 376h4v4h-4zM536 376h4v4h-4zM468 380h4v4h-4zM540 380h4v4h-4zM544 384h4v4h-4zM464 388h4v4h-4zM548 388h4v4h-4zM464 392h4v4h-4zM548 392h4v4h-4zM460 396h4v4h-4zM460 400h4v4h-4zM552 400h4v4h-4zM460 404h4v4h-4zM552 404h4v4h-4zM460 408h4v4h-4zM552 408h4v4h-4zM460 412h4v4h-4zM552 412h4v4h-4zM460 416h4v4h-4zM548 416h4v4h-4zM464 420h4v4h-4zM548 420h4v4h-4zM464 424h4v4h-4zM544 424h4v4h-4zM468 428h4v4h-4zM540 428h4v4h-4zM468 432h4v4h-4zM536 432h8v4h-8zM476 436h4v4h-4zM532 436h4v4h-4zM480 440h8v4h-8zM524 440h8v4h-8zM492 444h28v4h-28z"/>
<path fill="#ee7b32" d="M360 96h32v4h-32zM352 100h4v4h-4zM396 100h8v4h-8zM344 104h4v4h-4zM404 104h4v4h-4zM340 108h4v4h-4zM408 108h4v4h-4zM336 112h4v4h-4zM412 112h4v4h-4zM332 116h4v4h-4zM412 116h4v4h-4zM332 120h4v4h-4zM416 120h4v4h-4zM328 124h4v4h-4zM416 124h4v4h-4zM328 128h4v4h-4zM420 128h4v4h-4zM328 132h4v4h-4zM420 132h4v4h-4zM328 136h4v4h-4zM420 136h4v4h-4zM328 140h4v4h-4zM420 140h4v4h-4zM420 144h4v4h-4zM420 148h4v4h-4zM328 152h4v4h-4zM416 152h4v4h-4zM328 156h4v4h-4zM416 156h4v4h-4zM328 160h4v4h-4zM412 164h4v4h-4zM332 168h4v4h-4zM408 168h4v4h-4zM336 172h4v4h-4zM404 172h4v4h-4zM144 176h36v4h-36zM336 176h8v4h-8zM400 176h4v4h-4zM136 180h4v4h-4zM184 180h4v4h-4zM344 180h4v4h-4zM396 180h4v4h-4zM128 184h8v4h-8zM192 184h4v4h-4zM348 184h12v4h-12zM384 184h8v4h-8zM124 188h4v4h-4zM196 188h4v4h-4zM364 188h16v4h-16zM124 192h4v4h-4zM200 192h4v4h-4zM120 196h4v4h-4zM200 196h4v4h-4zM116 200h4v4h-4zM204 200h4v4h-4zM116 204h4v4h-4zM204 204h4v4h-4zM116 208h4v4h-4zM208 208h4v4h-4zM208 212h4v4h-4zM112 216h4v4h-4zM208 216h4v4h-4zM116 220h4v4h-4zM208 220h4v4h-4zM116 224h4v4h-4zM208 224h4v4h-4zM120 228h4v4h-4zM208 228h4v4h-4zM120 232h4v4h-4zM204 232h4v4h-4zM124 236h4v4h-4zM204 236h4v4h-4zM128 240h4v4h-4zM200 240h4v4h-4zM136 244h4v4h-4zM196 244h4v4h-4zM140 248h8v4h-8zM192 248h4v4h-4zM152 252h16v4h-16zM176 252h16v4h-16zM492 368h28v4h-28zM484 372h4v4h-4zM524 372h8v4h-8zM476 376h4v4h-4zM532 376h4v4h-4zM472 380h4v4h-4zM536 380h4v4h-4zM468 384h4v4h-4zM540 384h4v4h-4zM468 388h4v4h-4zM544 388h4v4h-4zM544 392h4v4h-4zM464 396h4v4h-4zM548 396h4v4h-4zM464 400h4v4h-4zM548 400h4v4h-4zM464 404h4v4h-4zM548 404h4v4h-4zM464 408h4v4h-4zM548 408h4v4h-4zM464 412h4v4h-4zM548 412h4v4h-4zM464 416h4v4h-4zM544 420h4v4h-4zM468 424h4v4h-4zM540 424h4v4h-4zM472 432h4v4h-4zM532 432h4v4h-4zM480 436h4v4h-4zM528 436h4v4h-4zM488 440h16v4h-16zM516 440h8v4h-8z"/>
<path fill="#ea7632" d="M356 100h12v4h-12zM388 100h8v4h-8zM348 104h4v4h-4zM400 104h4v4h-4zM344 108h4v4h-4zM404 108h4v4h-4zM340 112h4v4h-4zM408 112h4v4h-4zM336 116h4v4h-4zM412 120h4v4h-4zM332 124h4v4h-4zM416 128h4v4h-4zM416 132h4v4h-4zM416 136h4v4h-4zM416 140h4v4h-4zM328 144h4v4h-4zM416 144h4v4h-4zM328 148h4v4h-4zM416 148h4v4h-4zM412 156h4v4h-4zM332 160h4v4h-4zM412 160h4v4h-4zM332 164h4v4h-4zM408 164h4v4h-4zM336 168h4v4h-4zM404 168h4v4h-4zM400 172h4v4h-4zM344 176h4v4h-4zM396 176h4v4h-4zM140 180h8v4h-8zM176 180h8v4h-8zM348 180h8v4h-8zM388 180h8v4h-8zM136 184h4v4h-4zM188 184h4v4h-4zM360 184h24v4h-24zM128 188h4v4h-4zM192 188h4v4h-4zM196 192h4v4h-4zM120 200h4v4h-4zM200 200h4v4h-4zM204 208h4v4h-4zM116 212h4v4h-4zM204 212h4v4h-4zM116 216h4v4h-4zM204 216h4v4h-4zM204 220h4v4h-4zM120 224h4v4h-4zM204 224h4v4h-4zM204 228h4v4h-4zM124 232h4v4h-4zM200 232h4v4h-4zM128 236h4v4h-4zM200 236h4v4h-4zM132 240h4v4h-4zM196 240h4v4h-4zM140 244h4v4h-4zM192 244h4v4h-4zM148 248h4v4h-4zM184 248h8v4h-8zM168 252h8v4h-8zM488 372h4v4h-4zM520 372h4v4h-4zM480 376h4v4h-4zM528 376h4v4h-4zM476 380h4v4h-4zM532 380h4v4h-4zM472 384h4v4h-4zM536 384h4v4h-4zM540 388h4v4h-4zM468 392h4v4h-4zM544 396h4v4h-4zM544 412h4v4h-4zM544 416h4v4h-4zM468 420h4v4h-4zM540 420h4v4h-4zM472 428h4v4h-4zM536 428h4v4h-4zM476 432h4v4h-4zM484 436h4v4h-4zM524 436h4v4h-4zM504 440h12v4h-12z"/>
<path fill="#e67231" d="M368 100h20v4h-20zM352 104h8v4h-8zM392 104h8v4h-8zM348 108h4v4h-4zM400 108h4v4h-4zM404 112h4v4h-4zM340 116h4v4h-4zM408 116h4v4h-4zM336 120h4v4h-4zM412 124h4v4h-4zM332 128h4v4h-4zM412 128h4v4h-4zM332 132h4v4h-4zM332 136h4v4h-4zM332 140h4v4h-4zM332 144h4v4h-4zM332 148h4v4h-4zM332 152h4v4h-4zM412 152h4v4h-4zM332 156h4v4h-4zM408 160h4v4h-4zM336 164h4v4h-4zM340 172h4v4h-4zM396 172h4v4h-4zM348 176h4v4h-4zM392 176h4v4h-4zM148 180h28v4h-28zM356 180h8v4h-8zM380 180h8v4h-8zM140 184h4v4h-4zM180 184h8v4h-8zM132 188h4v4h-4zM188 188h4v4h-4zM128 192h4v4h-4zM192 192h4v4h-4zM124 196h4v4h-4zM196 196h4v4h-4zM124 200h4v4h-4zM120 204h4v4h-4zM200 204h4v4h-4zM120 208h4v4h-4zM200 208h4v4h-4zM120 212h4v4h-4zM120 220h4v4h-4zM124 228h4v4h-4zM200 228h4v4h-4zM128 232h4v4h-4zM132 236h4v4h-4zM196 236h4v4h-4zM136 240h4v4h-4zM192 240h4v4h-4zM188 244h4v4h-4zM152 248h12v4h-12zM176 248h8v4h-8zM492 372h28v4h-28zM484 376h4v4h-4zM524 376h4v4h-4zM528 380h4v4h-4zM472 388h4v4h-4zM536 388h4v4h-4zM540 392h4v4h-4zM468 396h4v4h-4zM468 400h4v4h-4zM544 400h4v4h-4zM468 404h4v4h-4zM544 404h4v4h-4zM468 408h4v4h-4zM544 408h4v4h-4zM468 412h4v4h-4zM468 416h4v4h-4zM540 416h4v4h-4zM472 424h4v4h-4zM536 424h4v4h-4zM476 428h4v4h-4zM532 428h4v4h-4zM480 432h4v4h-4zM528 432h4v4h-4zM488 436h8v4h-8zM516 436h8v4h-8z"/>
<path fill="#e26d31" d="M360 104h12v4h-12zM384 104h8v4h-8zM352 108h4v4h-4zM396 108h4v4h-4zM344 112h4v4h-4zM400 112h4v4h-4zM404 116h4v4h-4zM340 120h4v4h-4zM408 120h4v4h-4zM336 124h4v4h-4zM408 124h4v4h-4zM336 128h4v4h-4zM412 132h4v4h-4zM412 136h4v4h-4zM412 140h4v4h-4zM412 144h4v4h-4zM412 148h4v4h-4zM336 156h4v4h-4zM408 156h4v4h-4zM336 160h4v4h-4zM404 164h4v4h-4zM340 168h4v4h-4zM400 168h4v4h-4zM344 172h4v4h-4zM392 172h4v4h-4zM352 176h4v4h-4zM388 176h4v4h-4zM364 180h16v4h-16zM144 184h4v4h-4zM176 184h4v4h-4zM136 188h4v4h-4zM184 188h4v4h-4zM132 192h4v4h-4zM188 192h4v4h-4zM128 196h4v4h-4zM192 196h4v4h-4zM196 200h4v4h-4zM124 204h4v4h-4zM196 204h4v4h-4zM200 212h4v4h-4zM120 216h4v4h-4zM200 216h4v4h-4zM200 220h4v4h-4zM124 224h4v4h-4zM200 224h4v4h-4zM196 232h4v4h-4zM140 240h4v4h-4zM144 244h8v4h-8zM184 244h4v4h-4zM164 248h12v4h-12zM488 376h4v4h-4zM516 376h8v4h-8zM480 380h4v4h-4zM476 384h4v4h-4zM532 384h4v4h-4zM472 392h4v4h-4zM536 392h4v4h-4zM540 396h4v4h-4zM540 400h4v4h-4zM540 412h4v4h-4zM472 420h4v4h-4zM536 420h4v4h-4zM532 424h4v4h-4zM528 428h4v4h-4zM484 432h4v4h-4zM524 432h4v4h-4zM496 436h20v4h-20z"/>
<path fill="#de6930" d="M372 104h12v4h-12zM356 108h4v4h-4zM392 108h4v4h-4zM348 112h4v4h-4zM344 116h4v4h-4zM404 120h4v4h-4zM340 124h4v4h-4zM408 128h4v4h-4zM336 132h4v4h-4zM408 132h4v4h-4zM336 136h4v4h-4zM336 140h4v4h-4zM336 144h4v4h-4zM336 148h4v4h-4zM408 148h4v4h-4zM336 152h4v4h-4zM408 152h4v4h-4zM404 156h4v4h-4zM340 160h4v4h-4zM404 160h4v4h-4zM340 164h4v4h-4zM400 164h4v4h-4zM344 168h4v4h-4zM396 168h4v4h-4zM348 172h8v4h-8zM388 172h4v4h-4zM356 176h12v4h-12zM376 176h12v4h-12zM148 184h28v4h-28zM140 188h4v4h-4zM180 188h4v4h-4zM136 192h4v4h-4zM132 196h4v4h-4zM128 200h4v4h-4zM192 200h4v4h-4zM124 208h4v4h-4zM196 208h4v4h-4zM124 212h4v4h-4zM196 212h4v4h-4zM124 216h4v4h-4zM124 220h4v4h-4zM196 224h4v4h-4zM128 228h4v4h-4zM196 228h4v4h-4zM132 232h4v4h-4zM136 236h4v4h-4zM192 236h4v4h-4zM188 240h4v4h-4zM152 244h12v4h-12zM180 244h4v4h-4zM492 376h24v4h-24zM484 380h4v4h-4zM524 380h4v4h-4zM480 384h4v4h-4zM528 384h4v4h-4zM476 388h4v4h-4zM532 388h4v4h-4zM472 396h4v4h-4zM536 396h4v4h-4zM472 400h4v4h-4zM472 404h4v4h-4zM540 404h4v4h-4zM472 408h4v4h-4zM540 408h4v4h-4zM472 412h4v4h-4zM472 416h4v4h-4zM536 416h4v4h-4zM476 424h4v4h-4zM480 428h4v4h-4zM488 432h4v4h-4zM520 432h4v4h-4z"/>
<path fill="#db6430" d="M360 108h16v4h-16zM380 108h12v4h-12zM352 112h4v4h-4zM392 112h8v4h-8zM348 116h4v4h-4zM400 116h4v4h-4zM344 120h4v4h-4zM400 120h4v4h-4zM404 124h4v4h-4zM340 128h4v4h-4zM404 128h4v4h-4zM408 136h4v4h-4zM408 140h4v4h-4zM408 144h4v4h-4zM404 152h4v4h-4zM340 156h4v4h-4zM400 160h4v4h-4zM344 164h4v4h-4zM396 164h4v4h-4zM348 168h4v4h-4zM392 168h4v4h-4zM356 172h4v4h-4zM384 172h4v4h-4zM368 176h8v4h-8zM144 188h8v4h-8zM176 188h4v4h-4zM184 192h4v4h-4zM188 196h4v4h-4zM128 204h4v4h-4zM192 204h4v4h-4zM196 216h4v4h-4zM196 220h4v4h-4zM128 224h4v4h-4zM132 228h4v4h-4zM192 228h4v4h-4zM192 232h4v4h-4zM140 236h4v4h-4zM188 236h4v4h-4zM144 240h4v4h-4zM184 240h4v4h-4zM164 244h16v4h-16zM488 380h8v4h-8zM516 380h8v4h-8zM484 384h4v4h-4zM524 384h4v4h-4zM480 388h4v4h-4zM528 388h4v4h-4zM476 392h4v4h-4zM532 392h4v4h-4zM536 400h4v4h-4zM536 404h4v4h-4zM536 408h4v4h-4zM536 412h4v4h-4zM476 420h4v4h-4zM532 420h4v4h-4zM480 424h4v4h-4zM528 424h4v4h-4zM484 428h4v4h-4zM524 428h4v4h-4zM492 432h28v4h-28z"/>
<path fill="#d75f2f" d="M376 108h4v4h-4zM356 112h4v4h-4zM388 112h4v4h-4zM352 116h4v4h-4zM396 116h4v4h-4zM344 124h4v4h-4zM400 124h4v4h-4zM340 132h4v4h-4zM404 132h4v4h-4zM340 136h4v4h-4zM404 136h4v4h-4zM340 140h4v4h-4zM404 140h4v4h-4zM340 144h4v4h-4zM404 144h4v4h-4zM340 148h4v4h-4zM404 148h4v4h-4zM340 152h4v4h-4zM400 156h4v4h-4zM344 160h4v4h-4zM396 160h4v4h-4zM348 164h4v4h-4zM392 164h4v4h-4zM352 168h4v4h-4zM388 168h4v4h-4zM360 172h24v4h-24zM152 188h24v4h-24zM140 192h4v4h-4zM180 192h4v4h-4zM136 196h4v4h-4zM184 196h4v4h-4zM132 200h4v4h-4zM188 200h4v4h-4zM128 208h4v4h-4zM192 208h4v4h-4zM128 212h4v4h-4zM192 212h4v4h-4zM128 216h4v4h-4zM192 216h4v4h-4zM128 220h4v4h-4zM192 220h4v4h-4zM192 224h4v4h-4zM136 232h4v4h-4zM188 232h4v4h-4zM144 236h4v4h-4zM184 236h4v4h-4zM148 240h8v4h-8zM180 240h4v4h-4zM496 380h20v4h-20zM520 384h4v4h-4zM476 396h4v4h-4zM532 396h4v4h-4zM476 400h4v4h-4zM476 412h4v4h-4zM476 416h4v4h-4zM532 416h4v4h-4zM528 420h4v4h-4zM524 424h4v4h-4zM488 428h4v4h-4zM520 428h4v4h-4z"/>
<path fill="#d05b31" d="M360 112h12v4h-12zM380 112h8v4h-8zM392 116h4v4h-4zM348 120h4v4h-4zM396 120h4v4h-4zM344 128h4v4h-4zM400 128h4v4h-4zM400 152h4v4h-4zM344 156h4v4h-4zM356 168h4v4h-4zM384 168h4v4h-4zM144 192h4v4h-4zM176 192h4v4h-4zM140 196h4v4h-4zM180 196h4v4h-4zM136 200h4v4h-4zM184 200h4v4h-4zM132 204h4v4h-4zM188 204h4v4h-4zM132 208h4v4h-4zM132 224h4v4h-4zM136 228h4v4h-4zM188 228h4v4h-4zM140 232h4v4h-4zM156 240h12v4h-12zM172 240h8v4h-8zM488 384h4v4h-4zM516 384h4v4h-4zM484 388h4v4h-4zM524 388h4v4h-4zM480 392h4v4h-4zM528 392h4v4h-4zM532 400h4v4h-4zM476 404h4v4h-4zM532 404h4v4h-4zM476 408h4v4h-4zM532 408h4v4h-4zM532 412h4v4h-4zM480 420h4v4h-4zM484 424h4v4h-4zM492 428h4v4h-4zM516 428h4v4h-4z"/>
<path fill="#c95632" d="M372 112h8v4h-8zM356 116h4v4h-4zM388 116h4v4h-4zM352 120h4v4h-4zM348 124h4v4h-4zM396 124h4v4h-4zM344 132h4v4h-4zM400 132h4v4h-4zM344 136h4v4h-4zM400 136h4v4h-4zM344 140h4v4h-4zM400 140h4v4h-4zM400 144h4v4h-4zM344 148h4v4h-4zM400 148h4v4h-4zM344 152h4v4h-4zM396 156h4v4h-4zM348 160h4v4h-4zM392 160h4v4h-4zM352 164h4v4h-4zM388 164h4v4h-4zM360 168h8v4h-8zM376 168h8v4h-8zM148 192h8v4h-8zM168 192h8v4h-8zM188 208h4v4h-4zM132 212h4v4h-4zM188 212h4v4h-4zM132 216h4v4h-4zM132 220h4v4h-4zM188 220h4v4h-4zM188 224h4v4h-4zM184 232h4v4h-4zM148 236h4v4h-4zM180 236h4v4h-4zM168 240h4v4h-4zM492 384h4v4h-4zM512 384h4v4h-4zM520 388h4v4h-4zM524 392h4v4h-4zM480 396h4v4h-4zM528 396h4v4h-4zM480 416h4v4h-4zM528 416h4v4h-4zM524 420h4v4h-4zM520 424h4v4h-4zM496 428h20v4h-20z"/>
<path fill="#c25234" d="M360 116h8v4h-8zM384 116h4v4h-4zM392 120h4v4h-4zM348 128h4v4h-4zM396 128h4v4h-4zM344 144h4v4h-4zM396 152h4v4h-4zM348 156h4v4h-4zM392 156h4v4h-4zM352 160h4v4h-4zM388 160h4v4h-4zM356 164h4v4h-4zM384 164h4v4h-4zM368 168h8v4h-8zM156 192h12v4h-12zM144 196h4v4h-4zM176 196h4v4h-4zM140 200h4v4h-4zM180 200h4v4h-4zM136 204h4v4h-4zM184 204h4v4h-4zM188 216h4v4h-4zM136 224h4v4h-4zM140 228h4v4h-4zM184 228h4v4h-4zM144 232h4v4h-4zM152 236h4v4h-4zM176 236h4v4h-4zM496 384h16v4h-16zM488 388h4v4h-4zM484 392h4v4h-4zM480 400h4v4h-4zM528 400h4v4h-4zM480 404h4v4h-4zM480 408h4v4h-4zM480 412h4v4h-4zM528 412h4v4h-4zM484 420h4v4h-4zM488 424h4v4h-4zM516 424h4v4h-4z"/>
<path fill="#bc4d35" d="M368 116h16v4h-16zM356 120h4v4h-4zM388 120h4v4h-4zM352 124h4v4h-4zM392 124h4v4h-4zM348 132h4v4h-4zM396 132h4v4h-4zM396 136h4v4h-4zM396 144h4v4h-4zM396 148h4v4h-4zM348 152h4v4h-4zM360 164h8v4h-8zM376 164h8v4h-8zM148 196h4v4h-4zM172 196h4v4h-4zM140 204h4v4h-4zM136 208h4v4h-4zM184 208h4v4h-4zM136 212h4v4h-4zM184 212h4v4h-4zM136 220h4v4h-4zM184 224h4v4h-4zM148 232h4v4h-4zM180 232h4v4h-4zM156 236h20v4h-20zM492 388h4v4h-4zM516 388h4v4h-4zM520 392h4v4h-4zM484 396h4v4h-4zM524 396h4v4h-4zM528 404h4v4h-4zM528 408h4v4h-4zM524 416h4v4h-4zM520 420h4v4h-4zM492 424h4v4h-4zM512 424h4v4h-4z"/>
<path fill="#b54937" d="M360 120h4v4h-4zM384 120h4v4h-4zM352 128h4v4h-4zM392 128h4v4h-4zM348 136h4v4h-4zM348 140h4v4h-4zM396 140h4v4h-4zM348 144h4v4h-4zM348 148h4v4h-4zM392 152h4v4h-4zM352 156h4v4h-4zM388 156h4v4h-4zM356 160h4v4h-4zM384 160h4v4h-4zM368 164h8v4h-8zM152 196h20v4h-20zM144 200h4v4h-4zM176 200h4v4h-4zM180 204h4v4h-4zM136 216h4v4h-4zM184 216h4v4h-4zM184 220h4v4h-4zM140 224h4v4h-4zM144 228h4v4h-4zM180 228h4v4h-4zM176 232h4v4h-4zM496 388h4v4h-4zM508 388h8v4h-8zM488 392h4v4h-4zM484 400h4v4h-4zM524 400h4v4h-4zM524 412h4v4h-4zM484 416h4v4h-4zM488 420h4v4h-4zM496 424h16v4h-16z"/>
<path fill="#ae4438" d="M364 120h20v4h-20zM356 124h4v4h-4zM384 124h8v4h-8zM388 128h4v4h-4zM352 132h4v4h-4zM392 132h4v4h-4zM392 136h4v4h-4zM392 140h4v4h-4zM392 144h4v4h-4zM352 148h4v4h-4zM392 148h4v4h-4zM352 152h4v4h-4zM388 152h4v4h-4zM356 156h4v4h-4zM384 156h4v4h-4zM360 160h8v4h-8zM376 160h8v4h-8zM148 200h4v4h-4zM172 200h4v4h-4zM144 204h4v4h-4zM176 204h4v4h-4zM140 208h4v4h-4zM180 208h4v4h-4zM140 212h4v4h-4zM140 220h4v4h-4zM180 224h4v4h-4zM152 232h4v4h-4zM172 232h4v4h-4zM500 388h8v4h-8zM492 392h4v4h-4zM516 392h4v4h-4zM488 396h4v4h-4zM520 396h4v4h-4zM484 404h4v4h-4zM524 404h4v4h-4zM484 408h4v4h-4zM524 408h4v4h-4zM484 412h4v4h-4zM488 416h4v4h-4zM520 416h4v4h-4zM492 420h4v4h-4zM516 420h4v4h-4z"/>
<path fill="#a94138" d="M360 124h24v4h-24zM356 128h4v4h-4zM384 128h4v4h-4zM356 132h4v4h-4zM388 132h4v4h-4zM352 136h4v4h-4zM388 136h4v4h-4zM352 140h4v4h-4zM388 140h4v4h-4zM352 144h4v4h-4zM388 144h4v4h-4zM388 148h4v4h-4zM356 152h4v4h-4zM384 152h4v4h-4zM360 156h8v4h-8zM376 156h8v4h-8zM368 160h8v4h-8zM152 200h20v4h-20zM148 204h4v4h-4zM172 204h4v4h-4zM144 208h4v4h-4zM176 208h4v4h-4zM180 212h4v4h-4zM140 216h4v4h-4zM180 216h4v4h-4zM144 220h4v4h-4zM180 220h4v4h-4zM144 224h4v4h-4zM176 224h4v4h-4zM148 228h8v4h-8zM176 228h4v4h-4zM156 232h16v4h-16zM496 392h20v4h-20zM492 396h4v4h-4zM516 396h4v4h-4zM488 400h4v4h-4zM520 400h4v4h-4zM488 404h4v4h-4zM520 404h4v4h-4zM488 408h4v4h-4zM520 408h4v4h-4zM488 412h4v4h-4zM520 412h4v4h-4zM516 416h4v4h-4zM496 420h20v4h-20z"/>
<path fill="#a43d37" d="M360 128h8v4h-8zM380 128h4v4h-4zM360 132h4v4h-4zM384 132h4v4h-4zM356 136h4v4h-4zM384 136h4v4h-4zM356 140h4v4h-4zM356 144h4v4h-4zM384 144h4v4h-4zM356 148h4v4h-4zM384 148h4v4h-4zM360 152h4v4h-4zM380 152h4v4h-4zM368 156h8v4h-8zM152 204h20v4h-20zM148 208h4v4h-4zM172 208h4v4h-4zM144 212h4v4h-4zM176 212h4v4h-4zM144 216h4v4h-4zM176 216h4v4h-4zM176 220h4v4h-4zM148 224h4v4h-4zM172 224h4v4h-4zM156 228h8v4h-8zM168 228h8v4h-8zM496 396h4v4h-4zM508 396h8v4h-8zM492 400h4v4h-4zM516 400h4v4h-4zM516 404h4v4h-4zM516 408h4v4h-4zM516 412h4v4h-4zM492 416h8v4h-8zM512 416h4v4h-4z"/>
<path fill="#9f3a37" d="M368 128h12v4h-12zM364 132h4v4h-4zM380 132h4v4h-4zM360 136h4v4h-4zM380 136h4v4h-4zM360 140h4v4h-4zM384 140h4v4h-4zM360 144h4v4h-4zM380 144h4v4h-4zM360 148h4v4h-4zM380 148h4v4h-4zM364 152h16v4h-16zM152 208h4v4h-4zM168 208h4v4h-4zM148 212h4v4h-4zM172 212h4v4h-4zM148 216h4v4h-4zM172 216h4v4h-4zM148 220h4v4h-4zM172 220h4v4h-4zM152 224h4v4h-4zM168 224h4v4h-4zM164 228h4v4h-4zM500 396h8v4h-8zM496 400h4v4h-4zM508 400h8v4h-8zM492 404h4v4h-4zM512 404h4v4h-4zM492 408h4v4h-4zM512 408h4v4h-4zM492 412h4v4h-4zM512 412h4v4h-4zM500 416h12v4h-12z"/>
<path fill="#9a3636" d="M368 132h12v4h-12zM364 136h4v4h-4zM376 136h4v4h-4zM364 140h4v4h-4zM380 140h4v4h-4zM364 144h4v4h-4zM376 144h4v4h-4zM364 148h16v4h-16zM156 208h12v4h-12zM152 212h4v4h-4zM168 212h4v4h-4zM152 216h4v4h-4zM168 216h4v4h-4zM152 220h4v4h-4zM168 220h4v4h-4zM156 224h12v4h-12zM500 400h8v4h-8zM496 404h4v4h-4zM508 404h4v4h-4zM496 408h4v4h-4zM508 408h4v4h-4zM496 412h16v4h-16z"/>
<path fill="#953336" d="M368 136h8v4h-8zM368 140h4v4h-4zM376 140h4v4h-4zM368 144h8v4h-8zM156 212h12v4h-12zM156 216h4v4h-4zM164 216h4v4h-4zM156 220h12v4h-12zM500 404h8v4h-8zM500 408h8v4h-8z"/>
<path fill="#902f35" d="M372 140h4v4h-4zM160 216h4v4h-4z"/></g></g><path d="M0 400L78 478L140 560H0Z" fill="#fff" opacity=".22"/><rect x="458" y="36" width="69" height="80" fill="#fff" opacity=".10"/></svg>
<div class="ap" style="left:153.3px;top:210.1px"><svg width="19" height="19" viewBox="0 0 19 19"><rect x=".5" y=".5" width="18" height="18" rx="2.2" fill="#ece9df" stroke="#a9a79d"/><path d="M5 7.4Q9.5 3.8 14 7.4M6.2 9.2Q9.5 6.6 12.8 9.2M7.5 10.9Q9.5 9.4 11.5 10.9" fill="none" stroke="#5b80c2" stroke-width="1.15"/><path d="M8.5 11.8h2L9.5 13.4z" fill="#5b80c2"/><path d="M5 16.2h1M7 16.2h1M9 16.2h1M11 16.2h1M13 16.2h1" stroke="#9a988f" stroke-width="1"/></svg><span>2ch, 75%</span></div><div class="ap" style="left:363.3px;top:133.1px"><svg width="19" height="19" viewBox="0 0 19 19"><rect x=".5" y=".5" width="18" height="18" rx="2.2" fill="#ece9df" stroke="#a9a79d"/><path d="M5 7.4Q9.5 3.8 14 7.4M6.2 9.2Q9.5 6.6 12.8 9.2M7.5 10.9Q9.5 9.4 11.5 10.9" fill="none" stroke="#5b80c2" stroke-width="1.15"/><path d="M8.5 11.8h2L9.5 13.4z" fill="#5b80c2"/><path d="M5 16.2h1M7 16.2h1M9 16.2h1M11 16.2h1M13 16.2h1" stroke="#9a988f" stroke-width="1"/></svg><span>2ch, 75%</span></div><div class="ap" style="left:495.5px;top:400.1px"><svg width="19" height="19" viewBox="0 0 19 19"><rect x=".5" y=".5" width="18" height="18" rx="2.2" fill="#ece9df" stroke="#a9a79d"/><path d="M5 7.4Q9.5 3.8 14 7.4M6.2 9.2Q9.5 6.6 12.8 9.2M7.5 10.9Q9.5 9.4 11.5 10.9" fill="none" stroke="#5b80c2" stroke-width="1.15"/><path d="M8.5 11.8h2L9.5 13.4z" fill="#5b80c2"/><path d="M5 16.2h1M7 16.2h1M9 16.2h1M11 16.2h1M13 16.2h1" stroke="#9a988f" stroke-width="1"/></svg><span>2ch, 75%</span></div>
</div>

<div id="hdr">
  <div class="abs" style="left:17px;top:20px;font-size:13px;color:#6b7385;line-height:15px;letter-spacing:-0.68px">B2-F1</div>
  <svg class="abs" style="left:881px;top:19px" width="17" height="16" viewBox="0 0 512 512"><path fill="#8a92a6" d="M507.73 109.1c-2.24-9.03-13.54-12.09-20.12-5.51l-74.36 74.36-67.88-11.31-11.31-67.88 74.36-74.36c6.62-6.62 3.43-17.9-5.66-20.16-47.38-11.74-99.55.91-136.58 37.93-39.64 39.64-50.55 97.1-34.05 147.2L18.74 402.76c-24.99 24.99-24.99 65.51 0 90.5 24.99 24.99 65.51 24.99 90.5 0l213.21-213.21c50.12 16.71 107.47 5.68 147.37-34.22 37.07-37.07 49.7-89.32 37.91-136.73z"/></svg>
  <div class="abs" style="left:925px;top:11px;width:1px;height:32px;background:#d9dfe6"></div>
  <div class="btn" style="left:947px;width:98px"><span class="abs" style="left:29px;letter-spacing:-0.6px">Radio 1</span><i class="tri" style="left:84px"></i></div>
  <div class="btn" style="left:1067px;width:158px"><span class="abs" style="left:25px;letter-spacing:-0.5px">Wireless Status View</span><i class="tri" style="left:145px"></i></div>
</div>

<!-- right panel -->
<div class="abs" id="panel" style="left:907px;top:78px;width:318px;height:501px;background:#fff;box-shadow:0 1px 6px rgba(0,0,0,.14)"><svg class="abs" style="left:9.0px;top:15.0px" width="16" height="14" viewBox="0 0 16 14"><path d="M6 2h9M8.5 7h6.5M6 12h9M1.2 7h5.3M4.6 3.6L1.2 7l3.4 3.4" fill="none" stroke="#2f80d0" stroke-width="1.9" stroke-linecap="round" stroke-linejoin="round"/></svg><span class="lbl" style="left:30.0px;top:15.0px;color:#1d2b4f;font-size:12.5px;letter-spacing:-0.3px">Details</span><span class="abs" style="left:76.0px;top:12.0px;width:28px;height:20px;background:#9da8b1;border-radius:3px;color:#eef2f6;font-size:9px;line-height:20px;text-align:center;white-space:nowrap;letter-spacing:0.3px">3 AP</span><span class="abs" style="left:114.0px;top:12.0px;width:60px;height:20px;background:#9da8b1;border-radius:3px;color:#eef2f6;font-size:9px;line-height:20px;text-align:center;white-space:nowrap;letter-spacing:-0.15px">0 SELECTED</span><div class="abs" style="left:183.0px;top:18.5px;width:100px;height:8px;border-radius:4px;background:#d3dee8;border:1px solid #b5c3cf;overflow:hidden"><div style="width:70px;height:8px;margin:-1px;background:#0d6efd"></div></div><svg class="abs" style="left:11.0px;top:51.0px" width="16" height="16" viewBox="0 0 16 16"><circle cx="6.3" cy="6.3" r="5" fill="none" stroke="#5b9bd8" stroke-width="1.7"/><path d="M10 10l4.3 4.3" stroke="#5b9bd8" stroke-width="2" stroke-linecap="round"/></svg><span class="lbl" style="left:34.0px;top:52.5px;color:#5d6b78;font-size:11px;letter-spacing:-0.5px">Search APs</span><div class="abs" style="left:10.0px;top:73.7px;width:298px;height:2px;background:#84a3c4"></div><div class="abs" style="left:0.0px;top:111.5px;width:318px;height:1px;background:#dfe3e8"></div><svg class="abs" style="left:151.0px;top:111.0px" width="16" height="8" viewBox="0 0 16 8"><path d="M0 .5L8 7.5L16 .5" fill="#fff" stroke="#dfe3e8"/><path d="M0 0h16" stroke="#fff" stroke-width="1.2"/></svg><div class="abs" style="left:0.0px;top:143.5px;width:318px;height:1px;background:#dfe3e8"></div><i class="cb off" style="left:5.0px;top:120.0px;border-color:#6d7785"></i><svg class="abs" style="left:21.5px;top:124.0px" width="9" height="8"><path d="M1.2 6.5L4.5 2l3.3 4.5" fill="none" stroke="#222" stroke-width="1.2"/></svg><span class="hd" style="left:35.0px;top:122.0px;letter-spacing:-0.45px">Device Name</span><span class="hd" style="left:118.5px;top:122.0px;letter-spacing:-0.5px">Management S...</span><span class="hd" style="left:214.0px;top:122.0px;letter-spacing:-0.45px">IP Address</span><div class="abs" style="left:0.0px;top:199.5px;width:301px;height:1px;background:#dfe3e8"></div><i class="cb off" style="left:5.0px;top:164.0px;border-color:#6d7785"></i><span class="gr" style="left:23.0px;top:154.0px;letter-spacing:-0.27px">hq-access-IE210</span><span class="gr" style="left:23.0px;top:178.0px;letter-spacing:-0.4px">L-1.0.2</span><svg class="abs" style="left:118.5px;top:167.0px" width="13" height="11" viewBox="0 0 13 11"><path d="M1.3 5.8l3.4 3.3 6.8-7.3" fill="none" stroke="#27a844" stroke-width="2.2"/></svg><span class="gr" style="left:136.5px;top:166.0px;letter-spacing:-0.1px">Managed</span><span class="gr" style="left:214.5px;top:166.0px;letter-spacing:-0.37px">172.16.200.108</span><div class="abs" style="left:0.0px;top:256.5px;width:301px;height:1px;background:#dfe3e8"></div><i class="cb off" style="left:5.0px;top:221.0px;border-color:#6d7785"></i><span class="gr" style="left:23.0px;top:211.0px;letter-spacing:-0.27px">hq-access-IE210</span><span class="gr" style="left:23.0px;top:235.0px;letter-spacing:-0.4px">L-1.0.5</span><svg class="abs" style="left:118.5px;top:224.0px" width="13" height="11" viewBox="0 0 13 11"><path d="M1.3 5.8l3.4 3.3 6.8-7.3" fill="none" stroke="#27a844" stroke-width="2.2"/></svg><span class="gr" style="left:136.5px;top:223.0px;letter-spacing:-0.1px">Managed</span><span class="gr" style="left:214.5px;top:223.0px;letter-spacing:-0.37px">172.16.200.100</span><div class="abs" style="left:0.0px;top:313.5px;width:301px;height:1px;background:#dfe3e8"></div><i class="cb off" style="left:5.0px;top:278.0px;border-color:#6d7785"></i><span class="gr" style="left:23.0px;top:268.0px;letter-spacing:-0.27px">hq-access-IE210</span><span class="gr" style="left:23.0px;top:292.0px;letter-spacing:-0.4px">L-1.0.6</span><svg class="abs" style="left:118.5px;top:281.0px" width="13" height="11" viewBox="0 0 13 11"><path d="M1.3 5.8l3.4 3.3 6.8-7.3" fill="none" stroke="#27a844" stroke-width="2.2"/></svg><span class="gr" style="left:136.5px;top:280.0px;letter-spacing:-0.1px">Managed</span><span class="gr" style="left:214.5px;top:280.0px;letter-spacing:-0.37px">172.16.200.101</span><div class="abs" style="left:301.0px;top:144.0px;width:17px;height:357px;background:#f1f1f1"></div><svg class="abs" style="left:305.0px;top:151.0px" width="9" height="6"><path d="M0 5.5L4.5 .5L9 5.5z" fill="#a8a8a8"/></svg><svg class="abs" style="left:305.0px;top:489.0px" width="9" height="6"><path d="M0 .5L4.5 5.5L9 .5z" fill="#a8a8a8"/></svg></div>

<!-- legend -->
<div class="abs" id="legend" style="left:825px;top:78px;width:59px;height:186px;background:#fff;box-shadow:0 2px 3px rgba(0,0,0,.25),0 0 9px rgba(0,0,0,.12)">
<div class="abs" style="left:1px;top:17px;width:15px;height:158px;background:linear-gradient(to bottom,#9c3b36 0%,#b9402f 9%,#d4502f 15%,#ee7a3e 23%,#f8a44e 29%,#f4cc58 35%,#dce65c 39.5%,#b0e85c 45%,#7ee272 53%,#5cdc9a 59.5%,#46d0be 66%,#4cb4e0 73%,#6494ea 79.7%,#6c78d0 85%,#6a58a0 91%,#5c3864 100%)"></div>
<div class="abs" style="left:19px;top:1px;font-size:13.5px;color:#111;line-height:16px;letter-spacing:0.15px">[dBm]</div>
<div class="abs" style="left:22px;top:23px;font-size:14px;color:#111;line-height:16px;letter-spacing:-.3px">-30<br>-35<br>-40<br>-45<br>-50<br>-55<br>-60<br>-65<br>-75</div>
</div>

<!-- controls -->
<div class="ctl" id="ctl"><span class="lbl" style="left:9.0px;top:13.0px;color:#333;">Drawing Mode:</span><div class="abs" style="left:101px;top:5px;width:120px;height:29px;border:1px solid #555;border-radius:3px;background:#fff"><span class="lbl" style="left:9px;top:7px;color:#222;letter-spacing:-0.28px">Power</span><svg class="abs" style="left:102px;top:9px" width="12" height="10"><path d="M2 2.5l4 4.5 4-4.5" fill="none" stroke="#111" stroke-width="1.8"/></svg></div><i class="cb" style="left:237.0px;top:12.0px;background:#0b74f5"><svg width="13" height="13" viewBox="0 0 13 13" style="position:absolute;left:0;top:0"><path d="M2.8 6.8l2.5 2.6 4.9-5.6" fill="none" stroke="#fff" stroke-width="1.9"/></svg></i><span class="lbl" style="left:254.0px;top:13.0px;color:#333;letter-spacing:-0.3px">Grid</span><i class="cb" style="left:294.0px;top:12.0px;background:#0b74f5"><svg width="13" height="13" viewBox="0 0 13 13" style="position:absolute;left:0;top:0"><path d="M2.8 6.8l2.5 2.6 4.9-5.6" fill="none" stroke="#fff" stroke-width="1.9"/></svg></i><span class="lbl" style="left:311.0px;top:13.0px;color:#333;letter-spacing:-0.37px">Legend</span><i class="cb" style="left:369.0px;top:12.0px;background:#0b74f5"><svg width="13" height="13" viewBox="0 0 13 13" style="position:absolute;left:0;top:0"><path d="M2.8 6.8l2.5 2.6 4.9-5.6" fill="none" stroke="#fff" stroke-width="1.9"/></svg></i><span class="lbl" style="left:386.0px;top:13.0px;color:#333;letter-spacing:-0.3px">Details</span><i class="cb" style="left:441.0px;top:12.0px;background:#cfcfcf"><svg width="13" height="13" viewBox="0 0 13 13" style="position:absolute;left:0;top:0"><path d="M2.8 6.8l2.5 2.6 4.9-5.6" fill="none" stroke="#f3f3f3" stroke-width="1.9"/></svg></i><span class="lbl" style="left:458.0px;top:13.0px;color:#a9adb3;letter-spacing:-0.16px">Healthiness Icon</span><i class="cb off" style="left:567.0px;top:12.0px"></i><span class="lbl" style="left:584.0px;top:13.0px;color:#333;letter-spacing:-0.17px">Floor Area</span><i class="cb off" style="left:659.0px;top:12.0px"></i><span class="lbl" style="left:676.0px;top:13.0px;color:#333;letter-spacing:-0.16px">Device Counter</span><i class="cb" style="left:780.0px;top:12.0px;background:#0b74f5"><svg width="13" height="13" viewBox="0 0 13 13" style="position:absolute;left:0;top:0"><path d="M2.8 6.8l2.5 2.6 4.9-5.6" fill="none" stroke="#fff" stroke-width="1.9"/></svg></i><span class="lbl" style="left:797.0px;top:13.0px;color:#333;letter-spacing:-0.12px">Wall</span><span class="lbl" style="left:9.0px;top:53.0px;color:#333;letter-spacing:-0.115px">Power Limit: -65 dBm</span><svg class="abs" style="left:136.0px;top:52.0px" width="122" height="18" viewBox="0 0 122 18"><path d="M0 9H120 M3.5 4.5v9 M116.5 4.5v9" stroke="#4d4a5a" stroke-width="1.5" fill="none"/><rect x="40.8" y="2.5" width="6.5" height="13" rx="2" fill="#fff" stroke="#4d4a5a" stroke-width="1.4"/></svg><span class="lbl" style="left:271.0px;top:53.0px;color:#333;letter-spacing:-0.14px">Background Opacity: 30 %</span><svg class="abs" style="left:427.0px;top:52.0px" width="122" height="18" viewBox="0 0 122 18"><path d="M0 9H120 M3.5 4.5v9 M116.5 4.5v9" stroke="#4d4a5a" stroke-width="1.5" fill="none"/><rect x="34.8" y="2.5" width="6.5" height="13" rx="2" fill="#fff" stroke="#4d4a5a" stroke-width="1.4"/></svg></div>

<!-- zoom -->
<div class="abs" id="zoom" style="left:859px;top:518px;width:26px;height:61px;background:#fff;box-shadow:0 1px 3px rgba(0,0,0,.2)"><div class="abs" style="left:0;top:30px;width:26px;height:1px;background:#c8c8c8"></div>
<svg class="abs" style="left:0;top:0" width="26" height="61"><path d="M6 15.5h14M13 8.5v14M6.5 45.5h13" stroke="#111" stroke-width="1.8" fill="none"/></svg></div>

<!-- section overlays -->
<div class="box" style="left:126px;top:2px;width:1110px;height:52px;border-color:#2fb34a;background:rgba(30,160,60,.07)"></div>
<div class="box" style="left:126px;top:55px;width:570px;height:446.5px;border-color:#f0a535;background:rgba(235,150,15,.12)"></div>
<div class="box" style="left:902px;top:76px;width:326px;height:334px;border-color:#1b75bc;background:rgba(60,140,200,.18)"></div>
<div class="box" style="left:823px;top:76px;width:63px;height:192px;border-color:#b5231b;background:rgba(200,40,30,.085)"></div>
<div class="box" style="left:16px;top:503px;width:830px;height:76.5px;border-color:#7b3fa0;background:rgba(110,50,150,.08)"></div>
<div class="box" style="left:857px;top:510px;width:30px;height:77px;border-color:#9b9b9b;background:rgba(140,140,140,.24)"></div>

<div class="badge" style="left:92px;top:15px;width:63px;height:26px;background:#00a551"><span class="s" style="top:8px">SECTION</span><span class="n" style="left:46px;top:-2px">1</span></div>
<div class="badge" style="left:92px;top:289px;width:63px;height:26px;background:#e58e1a"><span class="s" style="top:8px">SECTION</span><span class="n" style="left:46px;top:-2px">2</span></div>
<div class="badge" style="left:1100px;top:63px;width:63px;height:26px;background:#1b75bc"><span class="s" style="top:8px">SECTION</span><span class="n" style="left:46px;top:-2px">3</span></div>
<div class="badge" style="left:819px;top:266px;width:72px;height:30px;background:#b32219"><span class="s" style="top:9px;font-size:9.8px">SECTION</span><span class="n" style="left:52px;top:-2px;font-size:28.5px">4</span></div>
<div class="badge" style="left:717px;top:564px;width:71px;height:28.5px;background:#662d91"><span class="s" style="top:9px;font-size:9.8px;left:4.5px">SECTION</span><span class="n" style="left:52px;top:-2.5px;font-size:28.5px">5</span></div>
<div class="badge" style="left:883px;top:536px;width:70px;height:28.5px;background:#9b9b9b"><span class="s" style="top:9px;font-size:9.8px;left:4px">SECTION</span><span class="n" style="left:51.5px;top:-2.5px;font-size:28.5px">6</span></div>
</body></html>
